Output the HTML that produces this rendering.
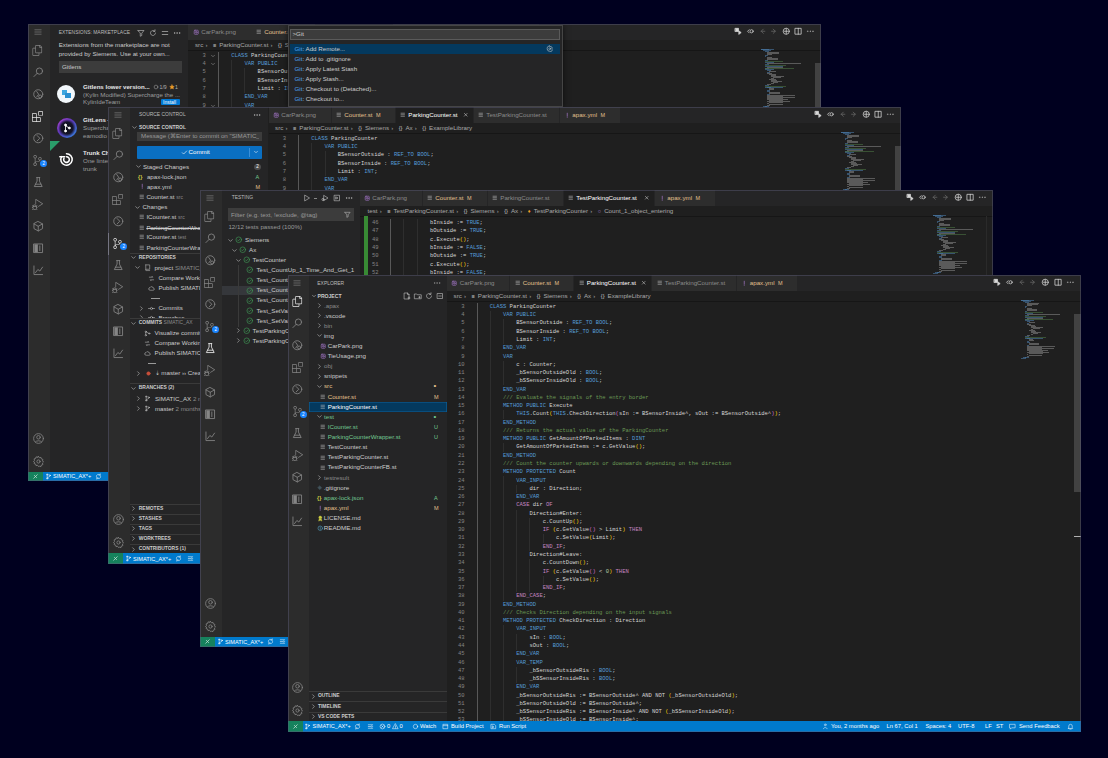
<!DOCTYPE html><html><head><meta charset="utf-8"><style>
*{margin:0;padding:0;box-sizing:border-box}
html,body{width:1108px;height:758px;overflow:hidden}
body{background:#00001f;position:relative;font-family:"Liberation Sans",sans-serif}
.w{position:absolute;width:793px;height:457px;overflow:hidden;background:#1f1f1f}
.bd{position:absolute;left:0;top:0;right:0;bottom:0;border:1px solid rgba(90,90,120,.45)}
.r{position:absolute}
.t{position:absolute;white-space:pre;line-height:8px}
.s{font-family:"Liberation Sans",sans-serif}
.m{font-family:"Liberation Mono",monospace}
.ic{position:absolute;overflow:visible}
</style></head><body><div class="w" style="left:28px;top:24px;z-index:1"><div class="r" style="left:0.00px;top:0.00px;width:21.50px;height:447.50px;background:#2c2c2c;"></div><div class="r" style="left:21.50px;top:0.00px;width:138.00px;height:447.50px;background:#252526;"></div><svg color="#858585" class="ic" style="left:4.75px;top:2.50px;width:10px;height:10px" viewBox="0 0 16 16" fill="none" stroke="#858585" stroke-width="1.0" stroke-linecap="round" stroke-linejoin="round"><path d="M3 4.5h10M3 8h10M3 11.5h10"/></svg><svg class="ic" style="left:4.25px;top:20.50px;width:11px;height:11px" viewBox="0 0 24 24" fill="#858585"><path d="M17.5 0h-9L7 1.5V6H2.5L1 7.5v15.07L2.5 24h12.07L16 22.57V18h4.7l1.3-1.43V4.5L17.5 0zm0 2.12l2.38 2.38H17.5V2.12zm-3 20.38h-12v-15H7v9.07L8.5 18h6v4.5zm6-6h-12v-15H16V6h4.5v10.5z"/></svg><svg color="#858585" class="ic" style="left:3.50px;top:41.75px;width:12.5px;height:12.5px" viewBox="0 0 16 16" fill="none" stroke="#858585" stroke-width="1.1" stroke-linecap="round" stroke-linejoin="round"><circle cx="9.5" cy="6.5" r="4"/><path d="M6.6 9.4L2.5 13.5"/></svg><svg color="#858585" class="ic" style="left:3.50px;top:63.75px;width:12.5px;height:12.5px" viewBox="0 0 16 16" fill="none" stroke="#858585" stroke-width="1.1" stroke-linecap="round" stroke-linejoin="round"><circle cx="8" cy="8" r="5.8"/><path d="M6 4.5l2.5 3.5-2.5 3.5"/><circle cx="10.5" cy="11" r="2"/></svg><svg class="ic" style="left:4.25px;top:86.50px;width:11px;height:11px" viewBox="0 0 24 24" fill="#e8e8e8"><path d="M13.5 1.5L15 0h7.5L24 1.5V9l-1.5 1.5H15L13.5 9V1.5zm1.5 0V9h7.5V1.5H15zM0 15V6l1.5-1.5H9L10.5 6v7.5H18l1.5 1.5v7.5L18 24H1.5L0 22.5V15zm9-1.5V6H1.5v7.5H9zM9 15H1.5v7.5H9V15zm1.5 7.5H18V15h-7.5v7.5z"/></svg><svg color="#858585" class="ic" style="left:3.50px;top:107.75px;width:12.5px;height:12.5px" viewBox="0 0 16 16" fill="none" stroke="#858585" stroke-width="1.1" stroke-linecap="round" stroke-linejoin="round"><circle cx="8" cy="8" r="5.8"/><path d="M6.5 4.5l3.5 3.5-3.5 3.5"/></svg><svg class="ic" style="left:4.25px;top:130.50px;width:11px;height:11px" viewBox="0 0 24 24" fill="#858585"><path d="M21.007 8.222A3.738 3.738 0 0 0 15.045 5.2a3.737 3.737 0 0 0 1.156 6.583 2.988 2.988 0 0 1-2.668 1.67h-2.99a4.456 4.456 0 0 0-2.989 1.165V7.4a3.737 3.737 0 1 0-1.494 0v9.117a3.776 3.776 0 1 0 1.816.099 2.99 2.99 0 0 1 2.668-1.667h2.99a4.484 4.484 0 0 0 4.223-3.039 3.736 3.736 0 0 0 3.25-3.687zM4.565 3.738a2.242 2.242 0 1 1 4.484 0 2.242 2.242 0 0 1-4.484 0zm4.484 16.441a2.242 2.242 0 1 1-4.484 0 2.242 2.242 0 0 1 4.484 0zm8.221-9.715a2.242 2.242 0 1 1 0-4.485 2.242 2.242 0 0 1 0 4.485z"/></svg><svg color="#858585" class="ic" style="left:3.50px;top:151.75px;width:12.5px;height:12.5px" viewBox="0 0 16 16" fill="none" stroke="#858585" stroke-width="1.1" stroke-linecap="round" stroke-linejoin="round"><path d="M6 2h4M6.5 2v4.5L3 13.5h10L9.5 6.5V2"/><path d="M4.5 10.5h7"/></svg><svg class="ic" style="left:4.25px;top:174.50px;width:11px;height:11px" viewBox="0 0 24 24" fill="#858585"><path d="M10.94 13.5l-1.32 1.32a3.73 3.73 0 0 0-7.24 0L1.06 13.5 0 14.56l1.72 1.72-.22.22V18H0v1.5h1.5v.08c.077.489.214.966.41 1.42L0 22.94 1.06 24l1.65-1.65A4.308 4.308 0 0 0 6 24a4.31 4.31 0 0 0 3.29-1.65L10.94 24 12 22.94 10.09 21c.198-.464.336-.951.41-1.45v-.1H12V18h-1.5v-1.5l-.22-.22L12 14.56l-1.06-1.06zM6 13.5a2.250 2.250 0 0 1 2.25 2.25h-4.5A2.250 2.250 0 0 1 6 13.5zm3 6a3.330 3.330 0 0 1-3 3 3.330 3.330 0 0 1-3-3v-2.25h6v2.25zm14.76-9.9v1.26L13.5 17.37V15.6l8.45-5.37L9 2v9.46a5.070 5.070 0 0 0-1.5-.72V.63L8.64 0l15.12 9.6z"/></svg><svg color="#858585" class="ic" style="left:3.50px;top:195.75px;width:12.5px;height:12.5px" viewBox="0 0 16 16" fill="none" stroke="#858585" stroke-width="1.1" stroke-linecap="round" stroke-linejoin="round"><path d="M8 2l5.5 3v6L8 14l-5.5-3V5z"/><path d="M2.5 5L8 8l5.5-3M8 8v6"/></svg><svg color="#858585" class="ic" style="left:3.50px;top:217.75px;width:12.5px;height:12.5px" viewBox="0 0 16 16" fill="none" stroke="#858585" stroke-width="1.1" stroke-linecap="round" stroke-linejoin="round"><path d="M2.5 2.5h11v11h-11z"/><path d="M3 3h4.5v10H3z" fill="currentColor" stroke="none"/><path d="M10 5v6"/></svg><svg color="#858585" class="ic" style="left:3.50px;top:239.75px;width:12.5px;height:12.5px" viewBox="0 0 16 16" fill="none" stroke="#858585" stroke-width="1.1" stroke-linecap="round" stroke-linejoin="round"><path d="M2.5 2.5v11h11"/><path d="M4.5 11l3-4 2.5 2 3.5-5"/></svg><div class="r" style="left:12.15px;top:135.90px;width:7.20px;height:7.20px;background:#1a85ff;border-radius:50%"></div><div class="t s" style="left:14.55px;top:135.60px;color:#ffffff;font-size:4.5px;font-weight:400;">2</div><svg color="#858585" class="ic" style="left:3.75px;top:407.50px;width:13px;height:13px" viewBox="0 0 16 16" fill="none" stroke="#858585" stroke-width="1.0" stroke-linecap="round" stroke-linejoin="round"><circle cx="8" cy="8" r="6"/><circle cx="8" cy="6.5" r="2.2"/><path d="M4.2 12.2c1-2 6.6-2 7.6 0"/></svg><svg color="#858585" class="ic" style="left:3.75px;top:430.50px;width:13px;height:13px" viewBox="0 0 16 16" fill="none" stroke="#858585" stroke-width="1.0" stroke-linecap="round" stroke-linejoin="round"><circle cx="8" cy="8" r="2"/><path d="M8 1.8l1.1 1.6 1.9-.5.5 1.9 1.9.6-.5 1.9 1.3 1.3-1.3 1.3.5 1.9-1.9.6-.5 1.9-1.9-.5L8 14.2l-1.1-1.6-1.9.5-.5-1.9-1.9-.6.5-1.9L1.8 8l1.3-1.3-.5-1.9 1.9-.6.5-1.9 1.9.5z"/></svg><div class="t s" style="left:30.70px;top:4.60px;color:#bbbbbb;font-size:4.95px;font-weight:400;">EXTENSIONS: MARKETPLACE</div><svg color="#c5c5c5" class="ic" style="left:109.10px;top:4.60px;width:8px;height:8px" viewBox="0 0 16 16" fill="none" stroke="#c5c5c5" stroke-width="1.2" stroke-linecap="round" stroke-linejoin="round"><path d="M2 3h12l-4.5 5.5V13l-3 1.5V8.5z"/></svg><svg color="#c5c5c5" class="ic" style="left:120.60px;top:4.60px;width:8px;height:8px" viewBox="0 0 16 16" fill="none" stroke="#c5c5c5" stroke-width="1.2" stroke-linecap="round" stroke-linejoin="round"><path d="M13 8a5 5 0 1 1-1.5-3.6"/><path d="M12 1.5v3.2H8.8"/></svg><svg color="#c5c5c5" class="ic" style="left:132.60px;top:4.60px;width:8px;height:8px" viewBox="0 0 16 16" fill="none" stroke="#c5c5c5" stroke-width="1.3" stroke-linecap="round" stroke-linejoin="round"><path d="M2.5 5h11M2.5 11h11"/></svg><svg color="#c5c5c5" class="ic" style="left:144.90px;top:4.60px;width:8px;height:8px" viewBox="0 0 16 16" fill="none" stroke="#c5c5c5" stroke-width="1.2" stroke-linecap="round" stroke-linejoin="round"><circle cx="3" cy="8" r=".55" fill="currentColor"/><circle cx="8" cy="8" r=".55" fill="currentColor"/><circle cx="13" cy="8" r=".55" fill="currentColor"/></svg><div class="t s" style="left:30.70px;top:16.90px;color:#cccccc;font-size:6.2px;font-weight:400;">Extensions from the marketplace are not</div><div class="t s" style="left:30.70px;top:25.50px;color:#cccccc;font-size:6.2px;font-weight:400;">provided by Siemens. Use at your own...</div><div class="r" style="left:30.70px;top:37.10px;width:123.60px;height:11.80px;background:#3c3c3c;"></div><div class="t s" style="left:34.00px;top:39.00px;color:#cccccc;font-size:6.2px;font-weight:400;">Gitlens</div><div class="r" style="left:29.10px;top:61.40px;width:18.00px;height:18.00px;background:#f2f7fb;border-radius:50%"></div><div class="r" style="left:33.50px;top:66.00px;width:5.50px;height:4.50px;background:#3fa7e0;"></div><div class="r" style="left:37.00px;top:69.00px;width:5.50px;height:4.50px;background:#2a8fd0;"></div><div class="t s" style="left:55.10px;top:59.20px;color:#e6e6e6;font-size:6.1px;font-weight:700;">Gitlens lower version...</div><svg color="#b0b0b0" class="ic" style="left:125.00px;top:60.20px;width:6px;height:6px" viewBox="0 0 16 16" fill="none" stroke="#b0b0b0" stroke-width="1.3" stroke-linecap="round" stroke-linejoin="round"><circle cx="8" cy="8" r="5"/></svg><div class="t s" style="left:131.50px;top:59.20px;color:#b0b0b0;font-size:5.2px;font-weight:400;">1/9</div><svg color="#ee9d28" class="ic" style="left:140.50px;top:60.20px;width:6px;height:6px" viewBox="0 0 16 16" fill="none" stroke="#ee9d28" stroke-width="1" stroke-linecap="round" stroke-linejoin="round"><path d="M8 1.8l1.9 4 4.3.5-3.2 2.9.9 4.3L8 11.3l-3.9 2.2.9-4.3L1.8 6.3l4.3-.5z" fill="currentColor"/></svg><div class="t s" style="left:147.00px;top:59.20px;color:#b0b0b0;font-size:5.2px;font-weight:400;">1</div><div class="t s" style="left:55.10px;top:67.10px;color:#9d9d9d;font-size:6.2px;font-weight:400;">(Kylin Modified) Supercharge the ...</div><div class="t s" style="left:55.10px;top:74.30px;color:#9d9d9d;font-size:6.2px;font-weight:400;">KylinIdeTeam</div><div class="r" style="left:132.60px;top:75.20px;width:19.40px;height:6.30px;background:#0078d4;border-radius:1px"></div><div class="t s" style="left:135.00px;top:74.30px;color:#ffffff;font-size:5px;font-weight:400;">Install</div><div class="r" style="left:28.50px;top:93.60px;width:20.00px;height:20.00px;background:radial-gradient(circle at 50% 50%, #0c0c16 0%, #141428 42%, rgba(20,20,40,0) 62%), linear-gradient(135deg, #b040d0 0%, #5a3ab8 45%, #2f8ae0 100%);border-radius:50%"></div><svg color="#ffffff" class="ic" style="left:32.50px;top:97.60px;width:12px;height:12px" viewBox="0 0 16 16" fill="none" stroke="#ffffff" stroke-width="1.1" stroke-linecap="round" stroke-linejoin="round"><circle cx="6" cy="4" r="1.3" fill="currentColor"/><circle cx="6" cy="12" r="1.3" fill="currentColor"/><circle cx="11" cy="8" r="1.3" fill="currentColor"/><path d="M6 4v8M6 5l5 3"/></svg><div class="t s" style="left:55.10px;top:92.40px;color:#e6e6e6;font-size:6.1px;font-weight:700;">GitLens — Git supercharged</div><div class="t s" style="left:55.10px;top:100.20px;color:#9d9d9d;font-size:6.2px;font-weight:400;">Supercharge Git within VS Code</div><div class="t s" style="left:55.10px;top:107.70px;color:#9d9d9d;font-size:6.2px;font-weight:400;">eamodio</div><div class="r" style="left:21.5px;top:117px;width:0;height:0;border-top:10px solid #2a9d6a;border-right:10px solid transparent"></div><svg class="ic" style="left:29px;top:126px;width:19px;height:19px" viewBox="0 0 20 20" fill="none" stroke="#ffffff" stroke-width="1.6" stroke-linecap="round"><path d="M10 4a6 6 0 1 1-5.2 3"/><path d="M10 7a3 3 0 1 1-2.6 1.5"/><path d="M3 7h5"/></svg><div class="t s" style="left:55.10px;top:125.30px;color:#e6e6e6;font-size:6.1px;font-weight:700;">Trunk Check</div><div class="t s" style="left:55.10px;top:133.00px;color:#9d9d9d;font-size:6.2px;font-weight:400;">One linter to rule them all</div><div class="t s" style="left:55.10px;top:140.50px;color:#9d9d9d;font-size:6.2px;font-weight:400;">trunk</div><div class="r" style="left:160.40px;top:0.00px;width:632.60px;height:447.50px;background:#1f1f1f;"></div><div class="r" style="left:160.40px;top:0.00px;width:632.60px;height:16.00px;background:#252526;"></div><div class="r" style="left:160.40px;top:0.00px;width:62.30px;height:16.00px;background:#2d2d2d;"></div><svg color="#a074c4" class="ic" style="left:164.65px;top:4.75px;width:6.5px;height:6.5px" viewBox="0 0 16 16" fill="none" stroke="#a074c4" stroke-width="1.6" stroke-linecap="round" stroke-linejoin="round"><rect x="3" y="3" width="10" height="10" rx="2"/><circle cx="8" cy="8" r="2.2"/></svg><div class="t s" style="left:173.20px;top:4.00px;color:#8b8b8b;font-size:6.2px;font-weight:400;">CarPark.png</div><div class="r" style="left:223.40px;top:0.00px;width:63.30px;height:16.00px;background:#2d2d2d;"></div><svg color="#c5c5c5" class="ic" style="left:228.15px;top:5.25px;width:5.5px;height:5.5px" viewBox="0 0 16 16" fill="none" stroke="#c5c5c5" stroke-width="1.6" stroke-linecap="round" stroke-linejoin="round"><path d="M3 3.5h10M3 8h10M3 12.5h10"/></svg><div class="t s" style="left:236.20px;top:4.00px;color:#e2c08d;font-size:6.2px;font-weight:400;">Counter.st  <span style="font-size:5.5px">M</span></div><div class="r" style="left:287.40px;top:0.00px;width:77.30px;height:16.00px;background:#1f1f1f;"></div><svg color="#c5c5c5" class="ic" style="left:292.15px;top:5.25px;width:5.5px;height:5.5px" viewBox="0 0 16 16" fill="none" stroke="#c5c5c5" stroke-width="1.6" stroke-linecap="round" stroke-linejoin="round"><path d="M3 3.5h10M3 8h10M3 12.5h10"/></svg><div class="t s" style="left:300.20px;top:4.00px;color:#ffffff;font-size:6.2px;font-weight:400;">ParkingCounter.st</div><svg color="#cccccc" class="ic" style="left:354.65px;top:5.25px;width:5.5px;height:5.5px" viewBox="0 0 16 16" fill="none" stroke="#cccccc" stroke-width="1.6" stroke-linecap="round" stroke-linejoin="round"><path d="M4 4l8 8M12 4l-8 8"/></svg><div class="r" style="left:365.40px;top:0.00px;width:84.30px;height:16.00px;background:#2d2d2d;"></div><svg color="#c5c5c5" class="ic" style="left:370.15px;top:5.25px;width:5.5px;height:5.5px" viewBox="0 0 16 16" fill="none" stroke="#c5c5c5" stroke-width="1.6" stroke-linecap="round" stroke-linejoin="round"><path d="M3 3.5h10M3 8h10M3 12.5h10"/></svg><div class="t s" style="left:378.20px;top:4.00px;color:#8b8b8b;font-size:6.2px;font-weight:400;">TestParkingCounter.st</div><div class="r" style="left:450.40px;top:0.00px;width:60.30px;height:16.00px;background:#2d2d2d;"></div><svg color="#a074c4" class="ic" style="left:454.65px;top:4.75px;width:6.5px;height:6.5px" viewBox="0 0 16 16" fill="none" stroke="#a074c4" stroke-width="1.8" stroke-linecap="round" stroke-linejoin="round"><path d="M8 3v7M8 12.5v.5"/></svg><div class="t s" style="left:463.20px;top:4.00px;color:#e2c08d;font-size:6.2px;font-weight:400;">apax.yml  <span style="font-size:5.5px">M</span></div><svg color="#d8d8d8" class="ic" style="left:705.75px;top:3.35px;width:8.5px;height:8.5px" viewBox="0 0 16 16" fill="none" stroke="#d8d8d8" stroke-width="1.4" stroke-linecap="round" stroke-linejoin="round"><path d="M2.5 2.5h6v6h-6zM9.5 7.5l4 3-4 3z" fill="currentColor"/></svg><svg color="#d8d8d8" class="ic" style="left:717.80px;top:3.35px;width:8.5px;height:8.5px" viewBox="0 0 16 16" fill="none" stroke="#d8d8d8" stroke-width="1.4" stroke-linecap="round" stroke-linejoin="round"><path d="M6 5L3 8l3 3"/><circle cx="10.5" cy="8" r="3"/></svg><svg color="#6a6a6a" class="ic" style="left:729.85px;top:3.35px;width:8.5px;height:8.5px" viewBox="0 0 16 16" fill="none" stroke="#6a6a6a" stroke-width="1.4" stroke-linecap="round" stroke-linejoin="round"><path d="M10 4L6 8l4 4"/><path d="M6 8h7"/></svg><svg color="#6a6a6a" class="ic" style="left:741.90px;top:3.35px;width:8.5px;height:8.5px" viewBox="0 0 16 16" fill="none" stroke="#6a6a6a" stroke-width="1.4" stroke-linecap="round" stroke-linejoin="round"><path d="M6 4l4 4-4 4"/><path d="M3 8h7"/></svg><svg color="#d8d8d8" class="ic" style="left:753.95px;top:3.35px;width:8.5px;height:8.5px" viewBox="0 0 16 16" fill="none" stroke="#d8d8d8" stroke-width="1.4" stroke-linecap="round" stroke-linejoin="round"><circle cx="8" cy="8" r="5.8"/><path d="M8 3v10M4 8h8"/></svg><svg color="#d8d8d8" class="ic" style="left:766.00px;top:3.35px;width:8.5px;height:8.5px" viewBox="0 0 16 16" fill="none" stroke="#d8d8d8" stroke-width="1.4" stroke-linecap="round" stroke-linejoin="round"><path d="M2.5 2.5h11v11h-11zM8 2.5v11"/></svg><svg color="#9a9a9a" class="ic" style="left:778.05px;top:3.35px;width:8.5px;height:8.5px" viewBox="0 0 16 16" fill="none" stroke="#9a9a9a" stroke-width="1.4" stroke-linecap="round" stroke-linejoin="round"><circle cx="3" cy="8" r=".55" fill="currentColor"/><circle cx="8" cy="8" r=".55" fill="currentColor"/><circle cx="13" cy="8" r=".55" fill="currentColor"/></svg><div class="t s" style="left:167.00px;top:17.00px;color:#a9a9a9;font-size:6.2px;font-weight:400;">src<span style="font-size:6px;margin:0 5.5px 0 2.2px">›</span><span style="color:#c5c5c5;font-size:5.6px;margin-right:3px">≡</span>ParkingCounter.st<span style="font-size:6px;margin:0 5.5px 0 2.2px">›</span><span style="color:#c5c5c5;font-size:5.6px;margin-right:3px">{}</span>Siemens<span style="font-size:6px;margin:0 5.5px 0 2.2px">›</span><span style="color:#c5c5c5;font-size:5.6px;margin-right:3px">{}</span>Ax<span style="font-size:6px;margin:0 5.5px 0 2.2px">›</span><span style="color:#c5c5c5;font-size:5.6px;margin-right:3px">{}</span>ExampleLibrary</div><div class="r" style="left:160.40px;top:26.00px;width:632.60px;height:1.30px;background:#161616;"></div><div class="r" style="left:189.90px;top:27.77px;width:0.75px;height:8.30px;background:#585858;"></div><div class="r" style="left:189.90px;top:36.04px;width:0.75px;height:8.30px;background:#585858;"></div><div class="r" style="left:203.15px;top:36.04px;width:0.75px;height:8.30px;background:#2e2e2e;"></div><div class="r" style="left:189.90px;top:44.30px;width:0.75px;height:8.30px;background:#585858;"></div><div class="r" style="left:203.15px;top:44.30px;width:0.75px;height:8.30px;background:#2e2e2e;"></div><div class="r" style="left:216.40px;top:44.30px;width:0.75px;height:8.30px;background:#2e2e2e;"></div><div class="r" style="left:189.90px;top:52.57px;width:0.75px;height:8.30px;background:#585858;"></div><div class="r" style="left:203.15px;top:52.57px;width:0.75px;height:8.30px;background:#2e2e2e;"></div><div class="r" style="left:216.40px;top:52.57px;width:0.75px;height:8.30px;background:#2e2e2e;"></div><div class="r" style="left:189.90px;top:60.85px;width:0.75px;height:8.30px;background:#585858;"></div><div class="r" style="left:203.15px;top:60.85px;width:0.75px;height:8.30px;background:#2e2e2e;"></div><div class="r" style="left:216.40px;top:60.85px;width:0.75px;height:8.30px;background:#2e2e2e;"></div><div class="r" style="left:189.90px;top:69.11px;width:0.75px;height:8.30px;background:#585858;"></div><div class="r" style="left:203.15px;top:69.11px;width:0.75px;height:8.30px;background:#2e2e2e;"></div><div class="r" style="left:189.90px;top:77.38px;width:0.75px;height:8.30px;background:#585858;"></div><div class="r" style="left:203.15px;top:77.38px;width:0.75px;height:8.30px;background:#2e2e2e;"></div><div class="r" style="left:189.90px;top:85.66px;width:0.75px;height:8.30px;background:#585858;"></div><div class="r" style="left:203.15px;top:85.66px;width:0.75px;height:8.30px;background:#2e2e2e;"></div><div class="r" style="left:216.40px;top:85.66px;width:0.75px;height:8.30px;background:#2e2e2e;"></div><div class="t m" style="left:157.90px;top:27.90px;color:#858585;font-size:5.5px;font-weight:400;width:20px;text-align:right">3</div><svg color="#a0a0a0" class="ic" style="left:181.90px;top:28.90px;width:6px;height:6px" viewBox="0 0 16 16" fill="none" stroke="#a0a0a0" stroke-width="1.4" stroke-linecap="round" stroke-linejoin="round"><path d="M4 6l4 4 4-4"/></svg><div class="t m" style="left:189.90px;top:27.90px;color:#d4d4d4;font-size:5.52px;font-weight:400;">    <span style="color:#569cd6">CLASS</span> ParkingCounter</div><div class="t m" style="left:157.90px;top:36.17px;color:#858585;font-size:5.5px;font-weight:400;width:20px;text-align:right">4</div><svg color="#a0a0a0" class="ic" style="left:181.90px;top:37.17px;width:6px;height:6px" viewBox="0 0 16 16" fill="none" stroke="#a0a0a0" stroke-width="1.4" stroke-linecap="round" stroke-linejoin="round"><path d="M4 6l4 4 4-4"/></svg><div class="t m" style="left:189.90px;top:36.17px;color:#d4d4d4;font-size:5.52px;font-weight:400;">        <span style="color:#569cd6">VAR</span> <span style="color:#569cd6">PUBLIC</span></div><div class="t m" style="left:157.90px;top:44.44px;color:#858585;font-size:5.5px;font-weight:400;width:20px;text-align:right">5</div><div class="t m" style="left:189.90px;top:44.44px;color:#d4d4d4;font-size:5.52px;font-weight:400;">            BSensorOutside : <span style="color:#569cd6">REF_TO</span> <span style="color:#569cd6">BOOL</span>;</div><div class="t m" style="left:157.90px;top:52.71px;color:#858585;font-size:5.5px;font-weight:400;width:20px;text-align:right">6</div><div class="t m" style="left:189.90px;top:52.71px;color:#d4d4d4;font-size:5.52px;font-weight:400;">            BSensorInside : <span style="color:#569cd6">REF_TO</span> <span style="color:#569cd6">BOOL</span>;</div><div class="t m" style="left:157.90px;top:60.98px;color:#858585;font-size:5.5px;font-weight:400;width:20px;text-align:right">7</div><div class="t m" style="left:189.90px;top:60.98px;color:#d4d4d4;font-size:5.52px;font-weight:400;">            Limit : <span style="color:#569cd6">INT</span>;</div><div class="t m" style="left:157.90px;top:69.25px;color:#858585;font-size:5.5px;font-weight:400;width:20px;text-align:right">8</div><div class="t m" style="left:189.90px;top:69.25px;color:#d4d4d4;font-size:5.52px;font-weight:400;">        <span style="color:#569cd6">END_VAR</span></div><div class="t m" style="left:157.90px;top:77.52px;color:#858585;font-size:5.5px;font-weight:400;width:20px;text-align:right">9</div><svg color="#a0a0a0" class="ic" style="left:181.90px;top:78.52px;width:6px;height:6px" viewBox="0 0 16 16" fill="none" stroke="#a0a0a0" stroke-width="1.4" stroke-linecap="round" stroke-linejoin="round"><path d="M4 6l4 4 4-4"/></svg><div class="t m" style="left:189.90px;top:77.52px;color:#d4d4d4;font-size:5.52px;font-weight:400;">        <span style="color:#569cd6">VAR</span></div><div class="t m" style="left:157.90px;top:85.79px;color:#858585;font-size:5.5px;font-weight:400;width:20px;text-align:right">10</div><div class="t m" style="left:189.90px;top:85.79px;color:#d4d4d4;font-size:5.52px;font-weight:400;">            c : Counter;</div><div class="r" style="left:733.00px;top:24.50px;width:13.44px;height:0.65px;background:#4d7fb0;opacity:.55"></div><div class="r" style="left:733.00px;top:25.45px;width:8.40px;height:0.65px;background:#4d7fb0;opacity:.55"></div><div class="r" style="left:735.00px;top:26.40px;width:8.40px;height:0.65px;background:#4d7fb0;opacity:.55"></div><div class="r" style="left:737.00px;top:27.35px;width:4.20px;height:0.65px;background:#4d7fb0;opacity:.55"></div><div class="r" style="left:739.00px;top:28.30px;width:12.18px;height:0.65px;background:#8a8a8a;opacity:.55"></div><div class="r" style="left:739.00px;top:29.25px;width:11.76px;height:0.65px;background:#8a8a8a;opacity:.55"></div><div class="r" style="left:739.00px;top:30.20px;width:5.04px;height:0.65px;background:#8a8a8a;opacity:.55"></div><div class="r" style="left:737.00px;top:31.15px;width:2.94px;height:0.65px;background:#4d7fb0;opacity:.55"></div><div class="r" style="left:737.00px;top:32.10px;width:1.26px;height:0.65px;background:#4d7fb0;opacity:.55"></div><div class="r" style="left:739.00px;top:33.05px;width:5.04px;height:0.65px;background:#8a8a8a;opacity:.55"></div><div class="r" style="left:739.00px;top:34.00px;width:10.92px;height:0.65px;background:#8a8a8a;opacity:.55"></div><div class="r" style="left:739.00px;top:34.95px;width:10.92px;height:0.65px;background:#8a8a8a;opacity:.55"></div><div class="r" style="left:737.00px;top:35.90px;width:2.94px;height:0.65px;background:#4d7fb0;opacity:.55"></div><div class="r" style="left:737.00px;top:36.85px;width:18.48px;height:0.65px;background:#4f7a45;opacity:.55"></div><div class="r" style="left:737.00px;top:37.80px;width:8.82px;height:0.65px;background:#4d7fb0;opacity:.55"></div><div class="r" style="left:739.00px;top:38.75px;width:33.60px;height:0.65px;background:#8a8a8a;opacity:.55"></div><div class="r" style="left:737.00px;top:39.70px;width:4.20px;height:0.65px;background:#4d7fb0;opacity:.55"></div><div class="r" style="left:737.00px;top:40.65px;width:21.00px;height:0.65px;background:#4f7a45;opacity:.55"></div><div class="r" style="left:737.00px;top:41.60px;width:18.06px;height:0.65px;background:#4d7fb0;opacity:.55"></div><div class="r" style="left:739.00px;top:42.55px;width:16.38px;height:0.65px;background:#8a8a8a;opacity:.55"></div><div class="r" style="left:737.00px;top:43.50px;width:4.20px;height:0.65px;background:#4d7fb0;opacity:.55"></div><div class="r" style="left:737.00px;top:44.45px;width:28.98px;height:0.65px;background:#4f7a45;opacity:.55"></div><div class="r" style="left:737.00px;top:45.40px;width:9.24px;height:0.65px;background:#4d7fb0;opacity:.55"></div><div class="r" style="left:739.00px;top:46.35px;width:3.78px;height:0.65px;background:#4d7fb0;opacity:.55"></div><div class="r" style="left:741.00px;top:47.30px;width:6.72px;height:0.65px;background:#8a8a8a;opacity:.55"></div><div class="r" style="left:739.00px;top:48.25px;width:2.94px;height:0.65px;background:#4d7fb0;opacity:.55"></div><div class="r" style="left:739.00px;top:49.20px;width:4.62px;height:0.65px;background:#8a8a8a;opacity:.55"></div><div class="r" style="left:741.00px;top:50.15px;width:6.72px;height:0.65px;background:#8a8a8a;opacity:.55"></div><div class="r" style="left:743.00px;top:51.10px;width:5.04px;height:0.65px;background:#8a8a8a;opacity:.55"></div><div class="r" style="left:743.00px;top:52.05px;width:12.60px;height:0.65px;background:#8a8a8a;opacity:.55"></div><div class="r" style="left:745.00px;top:53.00px;width:7.56px;height:0.65px;background:#8a8a8a;opacity:.55"></div><div class="r" style="left:743.00px;top:53.95px;width:2.94px;height:0.65px;background:#8a8a8a;opacity:.55"></div><div class="r" style="left:741.00px;top:54.90px;width:6.72px;height:0.65px;background:#8a8a8a;opacity:.55"></div><div class="r" style="left:743.00px;top:55.85px;width:5.88px;height:0.65px;background:#8a8a8a;opacity:.55"></div><div class="r" style="left:743.00px;top:56.80px;width:10.92px;height:0.65px;background:#8a8a8a;opacity:.55"></div><div class="r" style="left:745.00px;top:57.75px;width:5.46px;height:0.65px;background:#8a8a8a;opacity:.55"></div><div class="r" style="left:743.00px;top:58.70px;width:2.94px;height:0.65px;background:#8a8a8a;opacity:.55"></div><div class="r" style="left:739.00px;top:59.65px;width:3.78px;height:0.65px;background:#8a8a8a;opacity:.55"></div><div class="r" style="left:737.00px;top:60.60px;width:4.20px;height:0.65px;background:#4d7fb0;opacity:.55"></div><div class="r" style="left:737.00px;top:61.55px;width:21.42px;height:0.65px;background:#4f7a45;opacity:.55"></div><div class="r" style="left:737.00px;top:62.50px;width:18.06px;height:0.65px;background:#4d7fb0;opacity:.55"></div><div class="r" style="left:739.00px;top:63.45px;width:3.78px;height:0.65px;background:#4d7fb0;opacity:.55"></div><div class="r" style="left:741.00px;top:64.40px;width:4.62px;height:0.65px;background:#8a8a8a;opacity:.55"></div><div class="r" style="left:741.00px;top:65.35px;width:5.04px;height:0.65px;background:#8a8a8a;opacity:.55"></div><div class="r" style="left:739.00px;top:66.30px;width:2.94px;height:0.65px;background:#4d7fb0;opacity:.55"></div><div class="r" style="left:739.00px;top:67.25px;width:3.36px;height:0.65px;background:#4d7fb0;opacity:.55"></div><div class="r" style="left:741.00px;top:68.20px;width:10.92px;height:0.65px;background:#8a8a8a;opacity:.55"></div><div class="r" style="left:741.00px;top:69.15px;width:10.92px;height:0.65px;background:#8a8a8a;opacity:.55"></div><div class="r" style="left:739.00px;top:70.10px;width:2.94px;height:0.65px;background:#4d7fb0;opacity:.55"></div><div class="r" style="left:739.00px;top:71.05px;width:28.14px;height:0.65px;background:#8a8a8a;opacity:.55"></div><div class="r" style="left:739.00px;top:72.00px;width:15.96px;height:0.65px;background:#8a8a8a;opacity:.55"></div><div class="r" style="left:739.00px;top:72.95px;width:27.72px;height:0.65px;background:#8a8a8a;opacity:.55"></div><div class="r" style="left:739.00px;top:73.90px;width:15.54px;height:0.65px;background:#8a8a8a;opacity:.55"></div><div class="r" style="left:739.00px;top:74.85px;width:21.42px;height:0.65px;background:#8a8a8a;opacity:.55"></div><div class="r" style="left:741.00px;top:75.80px;width:14.28px;height:0.65px;background:#8a8a8a;opacity:.55"></div><div class="r" style="left:739.00px;top:76.75px;width:22.68px;height:0.65px;background:#8a8a8a;opacity:.55"></div><div class="r" style="left:741.00px;top:77.70px;width:14.28px;height:0.65px;background:#8a8a8a;opacity:.55"></div><div class="r" style="left:739.00px;top:78.65px;width:1.68px;height:0.65px;background:#8a8a8a;opacity:.55"></div><div class="r" style="left:741.00px;top:79.60px;width:13.86px;height:0.65px;background:#8a8a8a;opacity:.55"></div><div class="r" style="left:739.00px;top:80.55px;width:2.94px;height:0.65px;background:#8a8a8a;opacity:.55"></div><div class="r" style="left:737.00px;top:81.50px;width:4.20px;height:0.65px;background:#4d7fb0;opacity:.55"></div><div class="r" style="left:735.00px;top:82.45px;width:3.78px;height:0.65px;background:#4d7fb0;opacity:.55"></div><div class="r" style="left:733.00px;top:83.40px;width:5.46px;height:0.65px;background:#4d7fb0;opacity:.55"></div><div class="r" style="left:786.50px;top:38.50px;width:6.50px;height:178.00px;background:#424242;"></div><div class="r" style="left:786.50px;top:261.00px;width:6.50px;height:0.90px;background:#b0b0b0;"></div><div class="r" style="left:259.60px;top:1.00px;width:275.40px;height:81.60px;background:#252526;box-shadow:0 0 6px rgba(0,0,0,.6);border:0.6px solid #454545"></div><div class="r" style="left:261.50px;top:4.70px;width:270.50px;height:11.10px;background:#3c3c3c;border:0.7px solid #5a5a5a"></div><div class="t s" style="left:264.50px;top:6.30px;color:#cccccc;font-size:6.2px;font-weight:400;">&gt;Git</div><div class="r" style="left:261.50px;top:19.80px;width:270.50px;height:10.00px;background:#04395e;"></div><div class="t s" style="left:266.50px;top:20.80px;color:#cccccc;font-size:6.2px;font-weight:400;"><span style="color:#4da3f0">Git</span>: Add Remote...</div><div class="t s" style="left:266.50px;top:30.92px;color:#cccccc;font-size:6.2px;font-weight:400;"><span style="color:#4da3f0">Git</span>: Add to .gitignore</div><div class="t s" style="left:266.50px;top:41.04px;color:#cccccc;font-size:6.2px;font-weight:400;"><span style="color:#4da3f0">Git</span>: Apply Latest Stash</div><div class="t s" style="left:266.50px;top:51.16px;color:#cccccc;font-size:6.2px;font-weight:400;"><span style="color:#4da3f0">Git</span>: Apply Stash...</div><div class="t s" style="left:266.50px;top:61.28px;color:#cccccc;font-size:6.2px;font-weight:400;"><span style="color:#4da3f0">Git</span>: Checkout to (Detached)...</div><div class="t s" style="left:266.50px;top:71.40px;color:#cccccc;font-size:6.2px;font-weight:400;"><span style="color:#4da3f0">Git</span>: Checkout to...</div><svg color="#cccccc" class="ic" style="left:517.75px;top:21.05px;width:7.5px;height:7.5px" viewBox="0 0 16 16" fill="none" stroke="#cccccc" stroke-width="1.1" stroke-linecap="round" stroke-linejoin="round"><circle cx="8" cy="8" r="2"/><path d="M8 1.8l1.1 1.6 1.9-.5.5 1.9 1.9.6-.5 1.9 1.3 1.3-1.3 1.3.5 1.9-1.9.6-.5 1.9-1.9-.5L8 14.2l-1.1-1.6-1.9.5-.5-1.9-1.9-.6.5-1.9L1.8 8l1.3-1.3-.5-1.9 1.9-.6.5-1.9 1.9.5z"/></svg><div class="r" style="left:0.00px;top:447.50px;width:793.00px;height:9.50px;background:#007acc;"></div><div class="r" style="left:0.00px;top:447.50px;width:15.00px;height:9.50px;background:#16825d;"></div><svg color="#ffffff" class="ic" style="left:4.00px;top:448.75px;width:7px;height:7px" viewBox="0 0 16 16" fill="none" stroke="#ffffff" stroke-width="1.3" stroke-linecap="round" stroke-linejoin="round"><path d="M4 12l3-3M9 7l3-3M5.5 5.5l5 5"/></svg><svg color="#ffffff" class="ic" style="left:16.50px;top:448.75px;width:7px;height:7px" viewBox="0 0 16 16" fill="none" stroke="#ffffff" stroke-width="1.2" stroke-linecap="round" stroke-linejoin="round"><circle cx="5" cy="3.5" r="1.5"/><circle cx="5" cy="12.5" r="1.5"/><circle cx="11" cy="5.5" r="1.5"/><path d="M5 5v6M11 7c0 3-6 2-6 4"/></svg><div class="t s" style="left:25.00px;top:448.25px;color:#ffffff;font-size:5.6px;font-weight:400;">SIMATIC_AX*+</div><svg color="#ffffff" class="ic" style="left:66.50px;top:448.75px;width:7px;height:7px" viewBox="0 0 16 16" fill="none" stroke="#ffffff" stroke-width="1.2" stroke-linecap="round" stroke-linejoin="round"><path d="M3 8a5 5 0 0 1 9-3M13 8a5 5 0 0 1-9 3"/><path d="M12 2v3H9M4 14v-3h3"/></svg><div class="bd"></div></div><div class="w" style="left:108px;top:107px;z-index:2"><div class="r" style="left:0.00px;top:0.00px;width:21.50px;height:446.00px;background:#2c2c2c;"></div><div class="r" style="left:21.50px;top:0.00px;width:138.00px;height:446.00px;background:#252526;"></div><svg color="#858585" class="ic" style="left:4.75px;top:2.50px;width:10px;height:10px" viewBox="0 0 16 16" fill="none" stroke="#858585" stroke-width="1.0" stroke-linecap="round" stroke-linejoin="round"><path d="M3 4.5h10M3 8h10M3 11.5h10"/></svg><svg class="ic" style="left:4.25px;top:20.50px;width:11px;height:11px" viewBox="0 0 24 24" fill="#858585"><path d="M17.5 0h-9L7 1.5V6H2.5L1 7.5v15.07L2.5 24h12.07L16 22.57V18h4.7l1.3-1.43V4.5L17.5 0zm0 2.12l2.38 2.38H17.5V2.12zm-3 20.38h-12v-15H7v9.07L8.5 18h6v4.5zm6-6h-12v-15H16V6h4.5v10.5z"/></svg><svg color="#858585" class="ic" style="left:3.50px;top:41.75px;width:12.5px;height:12.5px" viewBox="0 0 16 16" fill="none" stroke="#858585" stroke-width="1.1" stroke-linecap="round" stroke-linejoin="round"><circle cx="9.5" cy="6.5" r="4"/><path d="M6.6 9.4L2.5 13.5"/></svg><svg color="#858585" class="ic" style="left:3.50px;top:63.75px;width:12.5px;height:12.5px" viewBox="0 0 16 16" fill="none" stroke="#858585" stroke-width="1.1" stroke-linecap="round" stroke-linejoin="round"><circle cx="8" cy="8" r="5.8"/><path d="M6 4.5l2.5 3.5-2.5 3.5"/><circle cx="10.5" cy="11" r="2"/></svg><svg class="ic" style="left:4.25px;top:86.50px;width:11px;height:11px" viewBox="0 0 24 24" fill="#858585"><path d="M13.5 1.5L15 0h7.5L24 1.5V9l-1.5 1.5H15L13.5 9V1.5zm1.5 0V9h7.5V1.5H15zM0 15V6l1.5-1.5H9L10.5 6v7.5H18l1.5 1.5v7.5L18 24H1.5L0 22.5V15zm9-1.5V6H1.5v7.5H9zM9 15H1.5v7.5H9V15zm1.5 7.5H18V15h-7.5v7.5z"/></svg><svg color="#858585" class="ic" style="left:3.50px;top:107.75px;width:12.5px;height:12.5px" viewBox="0 0 16 16" fill="none" stroke="#858585" stroke-width="1.1" stroke-linecap="round" stroke-linejoin="round"><circle cx="8" cy="8" r="5.8"/><path d="M6.5 4.5l3.5 3.5-3.5 3.5"/></svg><svg class="ic" style="left:4.25px;top:130.50px;width:11px;height:11px" viewBox="0 0 24 24" fill="#e8e8e8"><path d="M21.007 8.222A3.738 3.738 0 0 0 15.045 5.2a3.737 3.737 0 0 0 1.156 6.583 2.988 2.988 0 0 1-2.668 1.67h-2.99a4.456 4.456 0 0 0-2.989 1.165V7.4a3.737 3.737 0 1 0-1.494 0v9.117a3.776 3.776 0 1 0 1.816.099 2.99 2.99 0 0 1 2.668-1.667h2.99a4.484 4.484 0 0 0 4.223-3.039 3.736 3.736 0 0 0 3.25-3.687zM4.565 3.738a2.242 2.242 0 1 1 4.484 0 2.242 2.242 0 0 1-4.484 0zm4.484 16.441a2.242 2.242 0 1 1-4.484 0 2.242 2.242 0 0 1 4.484 0zm8.221-9.715a2.242 2.242 0 1 1 0-4.485 2.242 2.242 0 0 1 0 4.485z"/></svg><svg color="#858585" class="ic" style="left:3.50px;top:151.75px;width:12.5px;height:12.5px" viewBox="0 0 16 16" fill="none" stroke="#858585" stroke-width="1.1" stroke-linecap="round" stroke-linejoin="round"><path d="M6 2h4M6.5 2v4.5L3 13.5h10L9.5 6.5V2"/><path d="M4.5 10.5h7"/></svg><svg class="ic" style="left:4.25px;top:174.50px;width:11px;height:11px" viewBox="0 0 24 24" fill="#858585"><path d="M10.94 13.5l-1.32 1.32a3.73 3.73 0 0 0-7.24 0L1.06 13.5 0 14.56l1.72 1.72-.22.22V18H0v1.5h1.5v.08c.077.489.214.966.41 1.42L0 22.94 1.06 24l1.65-1.65A4.308 4.308 0 0 0 6 24a4.31 4.31 0 0 0 3.29-1.65L10.94 24 12 22.94 10.09 21c.198-.464.336-.951.41-1.45v-.1H12V18h-1.5v-1.5l-.22-.22L12 14.56l-1.06-1.06zM6 13.5a2.250 2.250 0 0 1 2.25 2.25h-4.5A2.250 2.250 0 0 1 6 13.5zm3 6a3.330 3.330 0 0 1-3 3 3.330 3.330 0 0 1-3-3v-2.25h6v2.25zm14.76-9.9v1.26L13.5 17.37V15.6l8.45-5.37L9 2v9.46a5.070 5.070 0 0 0-1.5-.72V.63L8.64 0l15.12 9.6z"/></svg><svg color="#858585" class="ic" style="left:3.50px;top:195.75px;width:12.5px;height:12.5px" viewBox="0 0 16 16" fill="none" stroke="#858585" stroke-width="1.1" stroke-linecap="round" stroke-linejoin="round"><path d="M8 2l5.5 3v6L8 14l-5.5-3V5z"/><path d="M2.5 5L8 8l5.5-3M8 8v6"/></svg><svg color="#858585" class="ic" style="left:3.50px;top:217.75px;width:12.5px;height:12.5px" viewBox="0 0 16 16" fill="none" stroke="#858585" stroke-width="1.1" stroke-linecap="round" stroke-linejoin="round"><path d="M2.5 2.5h11v11h-11z"/><path d="M3 3h4.5v10H3z" fill="currentColor" stroke="none"/><path d="M10 5v6"/></svg><svg color="#858585" class="ic" style="left:3.50px;top:239.75px;width:12.5px;height:12.5px" viewBox="0 0 16 16" fill="none" stroke="#858585" stroke-width="1.1" stroke-linecap="round" stroke-linejoin="round"><path d="M2.5 2.5v11h11"/><path d="M4.5 11l3-4 2.5 2 3.5-5"/></svg><div class="r" style="left:12.15px;top:135.90px;width:7.20px;height:7.20px;background:#1a85ff;border-radius:50%"></div><div class="t s" style="left:14.55px;top:135.60px;color:#ffffff;font-size:4.5px;font-weight:400;">2</div><svg color="#858585" class="ic" style="left:3.75px;top:406.00px;width:13px;height:13px" viewBox="0 0 16 16" fill="none" stroke="#858585" stroke-width="1.0" stroke-linecap="round" stroke-linejoin="round"><circle cx="8" cy="8" r="6"/><circle cx="8" cy="6.5" r="2.2"/><path d="M4.2 12.2c1-2 6.6-2 7.6 0"/></svg><svg color="#858585" class="ic" style="left:3.75px;top:429.00px;width:13px;height:13px" viewBox="0 0 16 16" fill="none" stroke="#858585" stroke-width="1.0" stroke-linecap="round" stroke-linejoin="round"><circle cx="8" cy="8" r="2"/><path d="M8 1.8l1.1 1.6 1.9-.5.5 1.9 1.9.6-.5 1.9 1.3 1.3-1.3 1.3.5 1.9-1.9.6-.5 1.9-1.9-.5L8 14.2l-1.1-1.6-1.9.5-.5-1.9-1.9-.6.5-1.9L1.8 8l1.3-1.3-.5-1.9 1.9-.6.5-1.9 1.9.5z"/></svg><div class="r" style="left:0.00px;top:125.90px;width:1.00px;height:22.00px;background:#8a8a8a;"></div><div class="t s" style="left:31.00px;top:4.30px;color:#bbbbbb;font-size:4.95px;font-weight:400;">SOURCE CONTROL</div><svg color="#c5c5c5" class="ic" style="left:145.00px;top:3.80px;width:8px;height:8px" viewBox="0 0 16 16" fill="none" stroke="#c5c5c5" stroke-width="1.2" stroke-linecap="round" stroke-linejoin="round"><circle cx="3" cy="8" r=".55" fill="currentColor"/><circle cx="8" cy="8" r=".55" fill="currentColor"/><circle cx="13" cy="8" r=".55" fill="currentColor"/></svg><svg color="#c5c5c5" class="ic" style="left:22.50px;top:17.40px;width:7px;height:7px" viewBox="0 0 16 16" fill="none" stroke="#c5c5c5" stroke-width="1.3" stroke-linecap="round" stroke-linejoin="round"><path d="M4 6l4 4 4-4"/></svg><div class="t s" style="left:31.00px;top:16.90px;color:#cccccc;font-size:4.95px;font-weight:700;">SOURCE CONTROL</div><div class="r" style="left:29.40px;top:24.90px;width:124.80px;height:9.50px;background:#3c3c3c;"></div><div class="t s" style="left:33.00px;top:25.20px;color:#9a9a9a;font-size:6.2px;font-weight:400;width:118px;overflow:hidden">Message (⌘Enter to commit on &quot;SIMATIC_AX&quot;)</div><div class="r" style="left:29.40px;top:38.80px;width:124.80px;height:12.90px;background:#0a6fc2;border-radius:1px"></div><div class="r" style="left:141.30px;top:40.50px;width:0.60px;height:9.50px;background:#3a8fd9;"></div><svg color="#ffffff" class="ic" style="left:72.50px;top:41.70px;width:7px;height:7px" viewBox="0 0 16 16" fill="none" stroke="#ffffff" stroke-width="1.4" stroke-linecap="round" stroke-linejoin="round"><path d="M3 8.5l3 3 7-7"/></svg><div class="t s" style="left:80.50px;top:41.20px;color:#ffffff;font-size:6.2px;font-weight:400;">Commit</div><svg color="#ffffff" class="ic" style="left:145.00px;top:42.20px;width:6px;height:6px" viewBox="0 0 16 16" fill="none" stroke="#ffffff" stroke-width="1.4" stroke-linecap="round" stroke-linejoin="round"><path d="M4 6l4 4 4-4"/></svg><svg color="#c5c5c5" class="ic" style="left:26.50px;top:56.10px;width:7px;height:7px" viewBox="0 0 16 16" fill="none" stroke="#c5c5c5" stroke-width="1.3" stroke-linecap="round" stroke-linejoin="round"><path d="M4 6l4 4 4-4"/></svg><div class="t s" style="left:34.90px;top:55.60px;color:#cccccc;font-size:6.2px;font-weight:400;">Staged Changes</div><div class="r" style="left:146.00px;top:56.60px;width:7.00px;height:6.20px;background:#4d4d4d;border-radius:3px"></div><div class="t s" style="left:148.30px;top:55.60px;color:#ffffff;font-size:4.5px;font-weight:400;">2</div><div class="t s" style="left:38.90px;top:65.60px;color:#cccccc;font-size:6.2px;font-weight:400;">apax-lock.json</div><div class="t s" style="left:147.50px;top:65.60px;color:#73c991;font-size:5.5px;font-weight:400;">A</div><div class="t s" style="left:30.00px;top:65.60px;color:#cbcb41;font-size:5.5px;font-weight:700;">{}</div><svg color="#a074c4" class="ic" style="left:30.75px;top:76.35px;width:6.5px;height:6.5px" viewBox="0 0 16 16" fill="none" stroke="#a074c4" stroke-width="1.8" stroke-linecap="round" stroke-linejoin="round"><path d="M8 3v7M8 12.5v.5"/></svg><div class="t s" style="left:38.90px;top:75.60px;color:#cccccc;font-size:6.2px;font-weight:400;">apax.yml</div><div class="t s" style="left:147.50px;top:75.60px;color:#e2c08d;font-size:5.5px;font-weight:400;">M</div><svg color="#c5c5c5" class="ic" style="left:31.25px;top:86.95px;width:5.5px;height:5.5px" viewBox="0 0 16 16" fill="none" stroke="#c5c5c5" stroke-width="1.6" stroke-linecap="round" stroke-linejoin="round"><path d="M3 3.5h10M3 8h10M3 12.5h10"/></svg><div class="t s" style="left:38.40px;top:85.70px;color:#cccccc;font-size:6.2px;font-weight:400;">Counter.st <span style="color:#8b8b8b;font-size:5px">src</span></div><svg color="#c5c5c5" class="ic" style="left:26.10px;top:96.50px;width:7px;height:7px" viewBox="0 0 16 16" fill="none" stroke="#c5c5c5" stroke-width="1.3" stroke-linecap="round" stroke-linejoin="round"><path d="M4 6l4 4 4-4"/></svg><div class="t s" style="left:34.60px;top:96.00px;color:#cccccc;font-size:6.2px;font-weight:400;">Changes</div><svg color="#c5c5c5" class="ic" style="left:31.25px;top:107.25px;width:5.5px;height:5.5px" viewBox="0 0 16 16" fill="none" stroke="#c5c5c5" stroke-width="1.6" stroke-linecap="round" stroke-linejoin="round"><path d="M3 3.5h10M3 8h10M3 12.5h10"/></svg><div class="t s" style="left:38.40px;top:106.00px;color:#cccccc;font-size:6.2px;font-weight:400;">ICounter.st <span style="color:#8b8b8b;font-size:5px">src</span></div><svg color="#c5c5c5" class="ic" style="left:31.25px;top:117.75px;width:5.5px;height:5.5px" viewBox="0 0 16 16" fill="none" stroke="#c5c5c5" stroke-width="1.6" stroke-linecap="round" stroke-linejoin="round"><path d="M3 3.5h10M3 8h10M3 12.5h10"/></svg><div class="t s" style="left:38.40px;top:116.50px;color:#cccccc;font-size:6.2px;font-weight:400;text-decoration:line-through">ParkingCounterWrapper.st</div><svg color="#c5c5c5" class="ic" style="left:31.25px;top:127.25px;width:5.5px;height:5.5px" viewBox="0 0 16 16" fill="none" stroke="#c5c5c5" stroke-width="1.6" stroke-linecap="round" stroke-linejoin="round"><path d="M3 3.5h10M3 8h10M3 12.5h10"/></svg><div class="t s" style="left:38.40px;top:126.00px;color:#cccccc;font-size:6.2px;font-weight:400;">ICounter.st <span style="color:#8b8b8b;font-size:5px">test</span></div><svg color="#c5c5c5" class="ic" style="left:31.25px;top:137.75px;width:5.5px;height:5.5px" viewBox="0 0 16 16" fill="none" stroke="#c5c5c5" stroke-width="1.6" stroke-linecap="round" stroke-linejoin="round"><path d="M3 3.5h10M3 8h10M3 12.5h10"/></svg><div class="t s" style="left:38.40px;top:136.50px;color:#cccccc;font-size:6.2px;font-weight:400;">ParkingCounterWrapper.st</div><div class="r" style="left:21.50px;top:145.50px;width:138.00px;height:0.70px;background:#3a3a3a;"></div><svg color="#c5c5c5" class="ic" style="left:22.30px;top:147.00px;width:7px;height:7px" viewBox="0 0 16 16" fill="none" stroke="#c5c5c5" stroke-width="1.3" stroke-linecap="round" stroke-linejoin="round"><path d="M4 6l4 4 4-4"/></svg><div class="t s" style="left:30.80px;top:146.50px;color:#cccccc;font-size:4.95px;font-weight:700;">REPOSITORIES</div><svg color="#c5c5c5" class="ic" style="left:26.10px;top:157.20px;width:7px;height:7px" viewBox="0 0 16 16" fill="none" stroke="#c5c5c5" stroke-width="1.3" stroke-linecap="round" stroke-linejoin="round"><path d="M4 6l4 4 4-4"/></svg><svg color="#c5c5c5" class="ic" style="left:36.10px;top:157.20px;width:7px;height:7px" viewBox="0 0 16 16" fill="none" stroke="#c5c5c5" stroke-width="1.2" stroke-linecap="round" stroke-linejoin="round"><path d="M4 2h9v10H5.5a1.5 1.5 0 0 0 0 3H13"/><path d="M4 2v11.5"/></svg><div class="t s" style="left:46.60px;top:156.70px;color:#cccccc;font-size:6.2px;font-weight:400;">project <span style="color:#8b8b8b">SIMATIC_AX</span></div><svg color="#c5c5c5" class="ic" style="left:39.90px;top:167.50px;width:7px;height:7px" viewBox="0 0 16 16" fill="none" stroke="#c5c5c5" stroke-width="1.2" stroke-linecap="round" stroke-linejoin="round"><path d="M3 5h8l-2-2M13 11H5l2 2"/></svg><div class="t s" style="left:50.40px;top:167.00px;color:#cccccc;font-size:6.2px;font-weight:400;">Compare Working Tree</div><svg color="#c5c5c5" class="ic" style="left:39.90px;top:177.50px;width:7px;height:7px" viewBox="0 0 16 16" fill="none" stroke="#c5c5c5" stroke-width="1.2" stroke-linecap="round" stroke-linejoin="round"><path d="M4.5 12a3 3 0 0 1 0-6 4 4 0 0 1 7.5 1 2.5 2.5 0 0 1 0 5z"/></svg><div class="t s" style="left:50.40px;top:177.00px;color:#cccccc;font-size:6.2px;font-weight:400;">Publish SIMATIC_AX</div><div class="r" style="left:43.40px;top:190.80px;width:8.50px;height:0.70px;background:#9a9a9a;"></div><svg color="#c5c5c5" class="ic" style="left:29.80px;top:197.50px;width:7px;height:7px" viewBox="0 0 16 16" fill="none" stroke="#c5c5c5" stroke-width="1.3" stroke-linecap="round" stroke-linejoin="round"><path d="M6 4l4 4-4 4"/></svg><svg color="#c5c5c5" class="ic" style="left:39.90px;top:197.50px;width:7px;height:7px" viewBox="0 0 16 16" fill="none" stroke="#c5c5c5" stroke-width="1.2" stroke-linecap="round" stroke-linejoin="round"><circle cx="8" cy="8" r="2.5"/><path d="M1 8h4.5M10.5 8H15"/></svg><div class="t s" style="left:50.40px;top:197.00px;color:#cccccc;font-size:6.2px;font-weight:400;">Commits</div><svg color="#c5c5c5" class="ic" style="left:29.80px;top:207.00px;width:7px;height:7px" viewBox="0 0 16 16" fill="none" stroke="#c5c5c5" stroke-width="1.3" stroke-linecap="round" stroke-linejoin="round"><path d="M6 4l4 4-4 4"/></svg><svg color="#c5c5c5" class="ic" style="left:39.90px;top:207.00px;width:7px;height:7px" viewBox="0 0 16 16" fill="none" stroke="#c5c5c5" stroke-width="1.2" stroke-linecap="round" stroke-linejoin="round"><circle cx="8" cy="8" r="2.5"/><path d="M1 8h4.5M10.5 8H15"/></svg><div class="t s" style="left:50.40px;top:206.50px;color:#cccccc;font-size:6.2px;font-weight:400;">Branches</div><div class="r" style="left:21.50px;top:211.30px;width:138.00px;height:10.00px;background:#252526;"></div><div class="r" style="left:21.50px;top:211.30px;width:138.00px;height:0.70px;background:#3a3a3a;"></div><svg color="#c5c5c5" class="ic" style="left:22.30px;top:212.50px;width:7px;height:7px" viewBox="0 0 16 16" fill="none" stroke="#c5c5c5" stroke-width="1.3" stroke-linecap="round" stroke-linejoin="round"><path d="M4 6l4 4 4-4"/></svg><div class="t s" style="left:30.80px;top:212.00px;color:#cccccc;font-size:4.95px;font-weight:700;">COMMITS <span style="color:#8b8b8b;font-weight:400">SIMATIC_AX</span></div><svg color="#c5c5c5" class="ic" style="left:36.10px;top:222.50px;width:7px;height:7px" viewBox="0 0 16 16" fill="none" stroke="#c5c5c5" stroke-width="1.2" stroke-linecap="round" stroke-linejoin="round"><circle cx="4" cy="4" r="1.5"/><circle cx="4" cy="12" r="1.5"/><circle cx="12" cy="8" r="1.5"/><path d="M4 5.5v5M5.5 4.5l5 3"/></svg><div class="t s" style="left:46.60px;top:222.00px;color:#cccccc;font-size:6.2px;font-weight:400;">Visualize commits</div><svg color="#c5c5c5" class="ic" style="left:36.10px;top:232.50px;width:7px;height:7px" viewBox="0 0 16 16" fill="none" stroke="#c5c5c5" stroke-width="1.2" stroke-linecap="round" stroke-linejoin="round"><path d="M3 5h8l-2-2M13 11H5l2 2"/></svg><div class="t s" style="left:46.60px;top:232.00px;color:#cccccc;font-size:6.2px;font-weight:400;">Compare Working Tree</div><svg color="#c5c5c5" class="ic" style="left:36.10px;top:242.50px;width:7px;height:7px" viewBox="0 0 16 16" fill="none" stroke="#c5c5c5" stroke-width="1.2" stroke-linecap="round" stroke-linejoin="round"><path d="M4.5 12a3 3 0 0 1 0-6 4 4 0 0 1 7.5 1 2.5 2.5 0 0 1 0 5z"/></svg><div class="t s" style="left:46.60px;top:242.00px;color:#cccccc;font-size:6.2px;font-weight:400;">Publish SIMATIC_AX</div><div class="r" style="left:39.60px;top:255.80px;width:8.50px;height:0.70px;background:#9a9a9a;"></div><svg color="#c5c5c5" class="ic" style="left:26.50px;top:262.50px;width:7px;height:7px" viewBox="0 0 16 16" fill="none" stroke="#c5c5c5" stroke-width="1.3" stroke-linecap="round" stroke-linejoin="round"><path d="M6 4l4 4-4 4"/></svg><svg color="#c74e39" class="ic" style="left:36.50px;top:262.50px;width:7px;height:7px" viewBox="0 0 16 16" fill="none" stroke="#c74e39" stroke-width="1.2" stroke-linecap="round" stroke-linejoin="round"><circle cx="8" cy="8" r="4" fill="currentColor"/></svg><div class="t s" style="left:46.60px;top:262.00px;color:#cccccc;font-size:6.2px;font-weight:400;">⇣ master ›› Create</div><div class="r" style="left:21.50px;top:275.50px;width:138.00px;height:0.70px;background:#3a3a3a;"></div><svg color="#c5c5c5" class="ic" style="left:22.30px;top:277.50px;width:7px;height:7px" viewBox="0 0 16 16" fill="none" stroke="#c5c5c5" stroke-width="1.3" stroke-linecap="round" stroke-linejoin="round"><path d="M4 6l4 4 4-4"/></svg><div class="t s" style="left:30.80px;top:277.00px;color:#cccccc;font-size:4.95px;font-weight:700;">BRANCHES (2)</div><svg color="#c5c5c5" class="ic" style="left:27.30px;top:288.00px;width:7px;height:7px" viewBox="0 0 16 16" fill="none" stroke="#c5c5c5" stroke-width="1.3" stroke-linecap="round" stroke-linejoin="round"><path d="M6 4l4 4-4 4"/></svg><svg color="#c5c5c5" class="ic" style="left:35.60px;top:288.00px;width:7px;height:7px" viewBox="0 0 16 16" fill="none" stroke="#c5c5c5" stroke-width="1.2" stroke-linecap="round" stroke-linejoin="round"><circle cx="5" cy="3.5" r="1.5"/><circle cx="5" cy="12.5" r="1.5"/><circle cx="11" cy="5.5" r="1.5"/><path d="M5 5v6M11 7c0 3-6 2-6 4"/></svg><div class="t s" style="left:46.90px;top:287.50px;color:#cccccc;font-size:6.2px;font-weight:400;">SIMATIC_AX <span style="color:#8b8b8b">2 months</span></div><svg color="#c5c5c5" class="ic" style="left:27.30px;top:298.20px;width:7px;height:7px" viewBox="0 0 16 16" fill="none" stroke="#c5c5c5" stroke-width="1.3" stroke-linecap="round" stroke-linejoin="round"><path d="M6 4l4 4-4 4"/></svg><svg color="#c5c5c5" class="ic" style="left:35.60px;top:298.20px;width:7px;height:7px" viewBox="0 0 16 16" fill="none" stroke="#c5c5c5" stroke-width="1.2" stroke-linecap="round" stroke-linejoin="round"><circle cx="5" cy="3.5" r="1.5"/><circle cx="5" cy="12.5" r="1.5"/><circle cx="11" cy="5.5" r="1.5"/><path d="M5 5v6M11 7c0 3-6 2-6 4"/></svg><div class="t s" style="left:46.90px;top:297.70px;color:#cccccc;font-size:6.2px;font-weight:400;">master <span style="color:#8b8b8b">2 months</span></div><div class="r" style="left:21.50px;top:396.50px;width:138.00px;height:0.70px;background:#3a3a3a;"></div><svg color="#c5c5c5" class="ic" style="left:22.30px;top:398.10px;width:7px;height:7px" viewBox="0 0 16 16" fill="none" stroke="#c5c5c5" stroke-width="1.3" stroke-linecap="round" stroke-linejoin="round"><path d="M6 4l4 4-4 4"/></svg><div class="t s" style="left:30.80px;top:397.60px;color:#cccccc;font-size:4.95px;font-weight:700;">REMOTES</div><div class="r" style="left:21.50px;top:406.60px;width:138.00px;height:0.70px;background:#3a3a3a;"></div><svg color="#c5c5c5" class="ic" style="left:22.30px;top:408.20px;width:7px;height:7px" viewBox="0 0 16 16" fill="none" stroke="#c5c5c5" stroke-width="1.3" stroke-linecap="round" stroke-linejoin="round"><path d="M6 4l4 4-4 4"/></svg><div class="t s" style="left:30.80px;top:407.70px;color:#cccccc;font-size:4.95px;font-weight:700;">STASHES</div><div class="r" style="left:21.50px;top:416.70px;width:138.00px;height:0.70px;background:#3a3a3a;"></div><svg color="#c5c5c5" class="ic" style="left:22.30px;top:418.30px;width:7px;height:7px" viewBox="0 0 16 16" fill="none" stroke="#c5c5c5" stroke-width="1.3" stroke-linecap="round" stroke-linejoin="round"><path d="M6 4l4 4-4 4"/></svg><div class="t s" style="left:30.80px;top:417.80px;color:#cccccc;font-size:4.95px;font-weight:700;">TAGS</div><div class="r" style="left:21.50px;top:426.80px;width:138.00px;height:0.70px;background:#3a3a3a;"></div><svg color="#c5c5c5" class="ic" style="left:22.30px;top:428.40px;width:7px;height:7px" viewBox="0 0 16 16" fill="none" stroke="#c5c5c5" stroke-width="1.3" stroke-linecap="round" stroke-linejoin="round"><path d="M6 4l4 4-4 4"/></svg><div class="t s" style="left:30.80px;top:427.90px;color:#cccccc;font-size:4.95px;font-weight:700;">WORKTREES</div><div class="r" style="left:21.50px;top:436.90px;width:138.00px;height:0.70px;background:#3a3a3a;"></div><svg color="#c5c5c5" class="ic" style="left:22.30px;top:438.50px;width:7px;height:7px" viewBox="0 0 16 16" fill="none" stroke="#c5c5c5" stroke-width="1.3" stroke-linecap="round" stroke-linejoin="round"><path d="M6 4l4 4-4 4"/></svg><div class="t s" style="left:30.80px;top:438.00px;color:#cccccc;font-size:4.95px;font-weight:700;">CONTRIBUTORS (1)</div><div class="r" style="left:160.50px;top:0.00px;width:632.50px;height:446.00px;background:#1f1f1f;"></div><div class="r" style="left:160.50px;top:0.00px;width:632.50px;height:16.00px;background:#252526;"></div><div class="r" style="left:160.50px;top:0.00px;width:62.30px;height:16.00px;background:#2d2d2d;"></div><svg color="#a074c4" class="ic" style="left:164.75px;top:4.75px;width:6.5px;height:6.5px" viewBox="0 0 16 16" fill="none" stroke="#a074c4" stroke-width="1.6" stroke-linecap="round" stroke-linejoin="round"><rect x="3" y="3" width="10" height="10" rx="2"/><circle cx="8" cy="8" r="2.2"/></svg><div class="t s" style="left:173.30px;top:4.00px;color:#8b8b8b;font-size:6.2px;font-weight:400;">CarPark.png</div><div class="r" style="left:223.50px;top:0.00px;width:63.30px;height:16.00px;background:#2d2d2d;"></div><svg color="#c5c5c5" class="ic" style="left:228.25px;top:5.25px;width:5.5px;height:5.5px" viewBox="0 0 16 16" fill="none" stroke="#c5c5c5" stroke-width="1.6" stroke-linecap="round" stroke-linejoin="round"><path d="M3 3.5h10M3 8h10M3 12.5h10"/></svg><div class="t s" style="left:236.30px;top:4.00px;color:#e2c08d;font-size:6.2px;font-weight:400;">Counter.st  <span style="font-size:5.5px">M</span></div><div class="r" style="left:287.50px;top:0.00px;width:77.30px;height:16.00px;background:#1f1f1f;"></div><svg color="#c5c5c5" class="ic" style="left:292.25px;top:5.25px;width:5.5px;height:5.5px" viewBox="0 0 16 16" fill="none" stroke="#c5c5c5" stroke-width="1.6" stroke-linecap="round" stroke-linejoin="round"><path d="M3 3.5h10M3 8h10M3 12.5h10"/></svg><div class="t s" style="left:300.30px;top:4.00px;color:#ffffff;font-size:6.2px;font-weight:400;">ParkingCounter.st</div><svg color="#cccccc" class="ic" style="left:354.75px;top:5.25px;width:5.5px;height:5.5px" viewBox="0 0 16 16" fill="none" stroke="#cccccc" stroke-width="1.6" stroke-linecap="round" stroke-linejoin="round"><path d="M4 4l8 8M12 4l-8 8"/></svg><div class="r" style="left:365.50px;top:0.00px;width:85.30px;height:16.00px;background:#2d2d2d;"></div><svg color="#c5c5c5" class="ic" style="left:370.25px;top:5.25px;width:5.5px;height:5.5px" viewBox="0 0 16 16" fill="none" stroke="#c5c5c5" stroke-width="1.6" stroke-linecap="round" stroke-linejoin="round"><path d="M3 3.5h10M3 8h10M3 12.5h10"/></svg><div class="t s" style="left:378.30px;top:4.00px;color:#8b8b8b;font-size:6.2px;font-weight:400;">TestParkingCounter.st</div><div class="r" style="left:451.50px;top:0.00px;width:60.30px;height:16.00px;background:#2d2d2d;"></div><svg color="#a074c4" class="ic" style="left:455.75px;top:4.75px;width:6.5px;height:6.5px" viewBox="0 0 16 16" fill="none" stroke="#a074c4" stroke-width="1.8" stroke-linecap="round" stroke-linejoin="round"><path d="M8 3v7M8 12.5v.5"/></svg><div class="t s" style="left:464.30px;top:4.00px;color:#e2c08d;font-size:6.2px;font-weight:400;">apax.yml  <span style="font-size:5.5px">M</span></div><svg color="#d8d8d8" class="ic" style="left:705.75px;top:3.35px;width:8.5px;height:8.5px" viewBox="0 0 16 16" fill="none" stroke="#d8d8d8" stroke-width="1.4" stroke-linecap="round" stroke-linejoin="round"><path d="M2.5 2.5h6v6h-6zM9.5 7.5l4 3-4 3z" fill="currentColor"/></svg><svg color="#d8d8d8" class="ic" style="left:717.80px;top:3.35px;width:8.5px;height:8.5px" viewBox="0 0 16 16" fill="none" stroke="#d8d8d8" stroke-width="1.4" stroke-linecap="round" stroke-linejoin="round"><path d="M6 5L3 8l3 3"/><circle cx="10.5" cy="8" r="3"/></svg><svg color="#6a6a6a" class="ic" style="left:729.85px;top:3.35px;width:8.5px;height:8.5px" viewBox="0 0 16 16" fill="none" stroke="#6a6a6a" stroke-width="1.4" stroke-linecap="round" stroke-linejoin="round"><path d="M10 4L6 8l4 4"/><path d="M6 8h7"/></svg><svg color="#6a6a6a" class="ic" style="left:741.90px;top:3.35px;width:8.5px;height:8.5px" viewBox="0 0 16 16" fill="none" stroke="#6a6a6a" stroke-width="1.4" stroke-linecap="round" stroke-linejoin="round"><path d="M6 4l4 4-4 4"/><path d="M3 8h7"/></svg><svg color="#d8d8d8" class="ic" style="left:753.95px;top:3.35px;width:8.5px;height:8.5px" viewBox="0 0 16 16" fill="none" stroke="#d8d8d8" stroke-width="1.4" stroke-linecap="round" stroke-linejoin="round"><circle cx="8" cy="8" r="5.8"/><path d="M8 3v10M4 8h8"/></svg><svg color="#d8d8d8" class="ic" style="left:766.00px;top:3.35px;width:8.5px;height:8.5px" viewBox="0 0 16 16" fill="none" stroke="#d8d8d8" stroke-width="1.4" stroke-linecap="round" stroke-linejoin="round"><path d="M2.5 2.5h11v11h-11zM8 2.5v11"/></svg><svg color="#9a9a9a" class="ic" style="left:778.05px;top:3.35px;width:8.5px;height:8.5px" viewBox="0 0 16 16" fill="none" stroke="#9a9a9a" stroke-width="1.4" stroke-linecap="round" stroke-linejoin="round"><circle cx="3" cy="8" r=".55" fill="currentColor"/><circle cx="8" cy="8" r=".55" fill="currentColor"/><circle cx="13" cy="8" r=".55" fill="currentColor"/></svg><div class="t s" style="left:167.10px;top:17.00px;color:#a9a9a9;font-size:6.2px;font-weight:400;">src<span style="font-size:6px;margin:0 5.5px 0 2.2px">›</span><span style="color:#c5c5c5;font-size:5.6px;margin-right:3px">≡</span>ParkingCounter.st<span style="font-size:6px;margin:0 5.5px 0 2.2px">›</span><span style="color:#c5c5c5;font-size:5.6px;margin-right:3px">{}</span>Siemens<span style="font-size:6px;margin:0 5.5px 0 2.2px">›</span><span style="color:#c5c5c5;font-size:5.6px;margin-right:3px">{}</span>Ax<span style="font-size:6px;margin:0 5.5px 0 2.2px">›</span><span style="color:#c5c5c5;font-size:5.6px;margin-right:3px">{}</span>ExampleLibrary</div><div class="r" style="left:160.50px;top:26.00px;width:632.50px;height:1.30px;background:#161616;"></div><div class="r" style="left:190.00px;top:27.77px;width:0.75px;height:8.30px;background:#585858;"></div><div class="r" style="left:190.00px;top:36.04px;width:0.75px;height:8.30px;background:#585858;"></div><div class="r" style="left:203.25px;top:36.04px;width:0.75px;height:8.30px;background:#2e2e2e;"></div><div class="r" style="left:190.00px;top:44.30px;width:0.75px;height:8.30px;background:#585858;"></div><div class="r" style="left:203.25px;top:44.30px;width:0.75px;height:8.30px;background:#2e2e2e;"></div><div class="r" style="left:216.50px;top:44.30px;width:0.75px;height:8.30px;background:#2e2e2e;"></div><div class="r" style="left:190.00px;top:52.57px;width:0.75px;height:8.30px;background:#585858;"></div><div class="r" style="left:203.25px;top:52.57px;width:0.75px;height:8.30px;background:#2e2e2e;"></div><div class="r" style="left:216.50px;top:52.57px;width:0.75px;height:8.30px;background:#2e2e2e;"></div><div class="r" style="left:190.00px;top:60.85px;width:0.75px;height:8.30px;background:#585858;"></div><div class="r" style="left:203.25px;top:60.85px;width:0.75px;height:8.30px;background:#2e2e2e;"></div><div class="r" style="left:216.50px;top:60.85px;width:0.75px;height:8.30px;background:#2e2e2e;"></div><div class="r" style="left:190.00px;top:69.11px;width:0.75px;height:8.30px;background:#585858;"></div><div class="r" style="left:203.25px;top:69.11px;width:0.75px;height:8.30px;background:#2e2e2e;"></div><div class="r" style="left:190.00px;top:77.38px;width:0.75px;height:8.30px;background:#585858;"></div><div class="r" style="left:203.25px;top:77.38px;width:0.75px;height:8.30px;background:#2e2e2e;"></div><div class="r" style="left:190.00px;top:85.66px;width:0.75px;height:8.30px;background:#585858;"></div><div class="r" style="left:203.25px;top:85.66px;width:0.75px;height:8.30px;background:#2e2e2e;"></div><div class="r" style="left:216.50px;top:85.66px;width:0.75px;height:8.30px;background:#2e2e2e;"></div><div class="t m" style="left:158.00px;top:27.90px;color:#858585;font-size:5.5px;font-weight:400;width:20px;text-align:right">3</div><div class="t m" style="left:190.00px;top:27.90px;color:#d4d4d4;font-size:5.52px;font-weight:400;">    <span style="color:#569cd6">CLASS</span> ParkingCounter</div><div class="t m" style="left:158.00px;top:36.17px;color:#858585;font-size:5.5px;font-weight:400;width:20px;text-align:right">4</div><div class="t m" style="left:190.00px;top:36.17px;color:#d4d4d4;font-size:5.52px;font-weight:400;">        <span style="color:#569cd6">VAR</span> <span style="color:#569cd6">PUBLIC</span></div><div class="t m" style="left:158.00px;top:44.44px;color:#858585;font-size:5.5px;font-weight:400;width:20px;text-align:right">5</div><div class="t m" style="left:190.00px;top:44.44px;color:#d4d4d4;font-size:5.52px;font-weight:400;">            BSensorOutside : <span style="color:#569cd6">REF_TO</span> <span style="color:#569cd6">BOOL</span>;</div><div class="t m" style="left:158.00px;top:52.71px;color:#858585;font-size:5.5px;font-weight:400;width:20px;text-align:right">6</div><div class="t m" style="left:190.00px;top:52.71px;color:#d4d4d4;font-size:5.52px;font-weight:400;">            BSensorInside : <span style="color:#569cd6">REF_TO</span> <span style="color:#569cd6">BOOL</span>;</div><div class="t m" style="left:158.00px;top:60.98px;color:#858585;font-size:5.5px;font-weight:400;width:20px;text-align:right">7</div><div class="t m" style="left:190.00px;top:60.98px;color:#d4d4d4;font-size:5.52px;font-weight:400;">            Limit : <span style="color:#569cd6">INT</span>;</div><div class="t m" style="left:158.00px;top:69.25px;color:#858585;font-size:5.5px;font-weight:400;width:20px;text-align:right">8</div><div class="t m" style="left:190.00px;top:69.25px;color:#d4d4d4;font-size:5.52px;font-weight:400;">        <span style="color:#569cd6">END_VAR</span></div><div class="t m" style="left:158.00px;top:77.52px;color:#858585;font-size:5.5px;font-weight:400;width:20px;text-align:right">9</div><div class="t m" style="left:190.00px;top:77.52px;color:#d4d4d4;font-size:5.52px;font-weight:400;">        <span style="color:#569cd6">VAR</span></div><div class="t m" style="left:158.00px;top:85.79px;color:#858585;font-size:5.5px;font-weight:400;width:20px;text-align:right">10</div><div class="t m" style="left:190.00px;top:85.79px;color:#d4d4d4;font-size:5.52px;font-weight:400;">            c : Counter;</div><div class="r" style="left:733.00px;top:24.50px;width:13.44px;height:0.65px;background:#4d7fb0;opacity:.55"></div><div class="r" style="left:733.00px;top:25.45px;width:8.40px;height:0.65px;background:#4d7fb0;opacity:.55"></div><div class="r" style="left:735.00px;top:26.40px;width:8.40px;height:0.65px;background:#4d7fb0;opacity:.55"></div><div class="r" style="left:737.00px;top:27.35px;width:4.20px;height:0.65px;background:#4d7fb0;opacity:.55"></div><div class="r" style="left:739.00px;top:28.30px;width:12.18px;height:0.65px;background:#8a8a8a;opacity:.55"></div><div class="r" style="left:739.00px;top:29.25px;width:11.76px;height:0.65px;background:#8a8a8a;opacity:.55"></div><div class="r" style="left:739.00px;top:30.20px;width:5.04px;height:0.65px;background:#8a8a8a;opacity:.55"></div><div class="r" style="left:737.00px;top:31.15px;width:2.94px;height:0.65px;background:#4d7fb0;opacity:.55"></div><div class="r" style="left:737.00px;top:32.10px;width:1.26px;height:0.65px;background:#4d7fb0;opacity:.55"></div><div class="r" style="left:739.00px;top:33.05px;width:5.04px;height:0.65px;background:#8a8a8a;opacity:.55"></div><div class="r" style="left:739.00px;top:34.00px;width:10.92px;height:0.65px;background:#8a8a8a;opacity:.55"></div><div class="r" style="left:739.00px;top:34.95px;width:10.92px;height:0.65px;background:#8a8a8a;opacity:.55"></div><div class="r" style="left:737.00px;top:35.90px;width:2.94px;height:0.65px;background:#4d7fb0;opacity:.55"></div><div class="r" style="left:737.00px;top:36.85px;width:18.48px;height:0.65px;background:#4f7a45;opacity:.55"></div><div class="r" style="left:737.00px;top:37.80px;width:8.82px;height:0.65px;background:#4d7fb0;opacity:.55"></div><div class="r" style="left:739.00px;top:38.75px;width:33.60px;height:0.65px;background:#8a8a8a;opacity:.55"></div><div class="r" style="left:737.00px;top:39.70px;width:4.20px;height:0.65px;background:#4d7fb0;opacity:.55"></div><div class="r" style="left:737.00px;top:40.65px;width:21.00px;height:0.65px;background:#4f7a45;opacity:.55"></div><div class="r" style="left:737.00px;top:41.60px;width:18.06px;height:0.65px;background:#4d7fb0;opacity:.55"></div><div class="r" style="left:739.00px;top:42.55px;width:16.38px;height:0.65px;background:#8a8a8a;opacity:.55"></div><div class="r" style="left:737.00px;top:43.50px;width:4.20px;height:0.65px;background:#4d7fb0;opacity:.55"></div><div class="r" style="left:737.00px;top:44.45px;width:28.98px;height:0.65px;background:#4f7a45;opacity:.55"></div><div class="r" style="left:737.00px;top:45.40px;width:9.24px;height:0.65px;background:#4d7fb0;opacity:.55"></div><div class="r" style="left:739.00px;top:46.35px;width:3.78px;height:0.65px;background:#4d7fb0;opacity:.55"></div><div class="r" style="left:741.00px;top:47.30px;width:6.72px;height:0.65px;background:#8a8a8a;opacity:.55"></div><div class="r" style="left:739.00px;top:48.25px;width:2.94px;height:0.65px;background:#4d7fb0;opacity:.55"></div><div class="r" style="left:739.00px;top:49.20px;width:4.62px;height:0.65px;background:#8a8a8a;opacity:.55"></div><div class="r" style="left:741.00px;top:50.15px;width:6.72px;height:0.65px;background:#8a8a8a;opacity:.55"></div><div class="r" style="left:743.00px;top:51.10px;width:5.04px;height:0.65px;background:#8a8a8a;opacity:.55"></div><div class="r" style="left:743.00px;top:52.05px;width:12.60px;height:0.65px;background:#8a8a8a;opacity:.55"></div><div class="r" style="left:745.00px;top:53.00px;width:7.56px;height:0.65px;background:#8a8a8a;opacity:.55"></div><div class="r" style="left:743.00px;top:53.95px;width:2.94px;height:0.65px;background:#8a8a8a;opacity:.55"></div><div class="r" style="left:741.00px;top:54.90px;width:6.72px;height:0.65px;background:#8a8a8a;opacity:.55"></div><div class="r" style="left:743.00px;top:55.85px;width:5.88px;height:0.65px;background:#8a8a8a;opacity:.55"></div><div class="r" style="left:743.00px;top:56.80px;width:10.92px;height:0.65px;background:#8a8a8a;opacity:.55"></div><div class="r" style="left:745.00px;top:57.75px;width:5.46px;height:0.65px;background:#8a8a8a;opacity:.55"></div><div class="r" style="left:743.00px;top:58.70px;width:2.94px;height:0.65px;background:#8a8a8a;opacity:.55"></div><div class="r" style="left:739.00px;top:59.65px;width:3.78px;height:0.65px;background:#8a8a8a;opacity:.55"></div><div class="r" style="left:737.00px;top:60.60px;width:4.20px;height:0.65px;background:#4d7fb0;opacity:.55"></div><div class="r" style="left:737.00px;top:61.55px;width:21.42px;height:0.65px;background:#4f7a45;opacity:.55"></div><div class="r" style="left:737.00px;top:62.50px;width:18.06px;height:0.65px;background:#4d7fb0;opacity:.55"></div><div class="r" style="left:739.00px;top:63.45px;width:3.78px;height:0.65px;background:#4d7fb0;opacity:.55"></div><div class="r" style="left:741.00px;top:64.40px;width:4.62px;height:0.65px;background:#8a8a8a;opacity:.55"></div><div class="r" style="left:741.00px;top:65.35px;width:5.04px;height:0.65px;background:#8a8a8a;opacity:.55"></div><div class="r" style="left:739.00px;top:66.30px;width:2.94px;height:0.65px;background:#4d7fb0;opacity:.55"></div><div class="r" style="left:739.00px;top:67.25px;width:3.36px;height:0.65px;background:#4d7fb0;opacity:.55"></div><div class="r" style="left:741.00px;top:68.20px;width:10.92px;height:0.65px;background:#8a8a8a;opacity:.55"></div><div class="r" style="left:741.00px;top:69.15px;width:10.92px;height:0.65px;background:#8a8a8a;opacity:.55"></div><div class="r" style="left:739.00px;top:70.10px;width:2.94px;height:0.65px;background:#4d7fb0;opacity:.55"></div><div class="r" style="left:739.00px;top:71.05px;width:28.14px;height:0.65px;background:#8a8a8a;opacity:.55"></div><div class="r" style="left:739.00px;top:72.00px;width:15.96px;height:0.65px;background:#8a8a8a;opacity:.55"></div><div class="r" style="left:739.00px;top:72.95px;width:27.72px;height:0.65px;background:#8a8a8a;opacity:.55"></div><div class="r" style="left:739.00px;top:73.90px;width:15.54px;height:0.65px;background:#8a8a8a;opacity:.55"></div><div class="r" style="left:739.00px;top:74.85px;width:21.42px;height:0.65px;background:#8a8a8a;opacity:.55"></div><div class="r" style="left:741.00px;top:75.80px;width:14.28px;height:0.65px;background:#8a8a8a;opacity:.55"></div><div class="r" style="left:739.00px;top:76.75px;width:22.68px;height:0.65px;background:#8a8a8a;opacity:.55"></div><div class="r" style="left:741.00px;top:77.70px;width:14.28px;height:0.65px;background:#8a8a8a;opacity:.55"></div><div class="r" style="left:739.00px;top:78.65px;width:1.68px;height:0.65px;background:#8a8a8a;opacity:.55"></div><div class="r" style="left:741.00px;top:79.60px;width:13.86px;height:0.65px;background:#8a8a8a;opacity:.55"></div><div class="r" style="left:739.00px;top:80.55px;width:2.94px;height:0.65px;background:#8a8a8a;opacity:.55"></div><div class="r" style="left:737.00px;top:81.50px;width:4.20px;height:0.65px;background:#4d7fb0;opacity:.55"></div><div class="r" style="left:735.00px;top:82.45px;width:3.78px;height:0.65px;background:#4d7fb0;opacity:.55"></div><div class="r" style="left:733.00px;top:83.40px;width:5.46px;height:0.65px;background:#4d7fb0;opacity:.55"></div><div class="r" style="left:786.50px;top:38.50px;width:6.50px;height:178.00px;background:#424242;"></div><div class="r" style="left:786.50px;top:261.00px;width:6.50px;height:0.90px;background:#b0b0b0;"></div><div class="r" style="left:0.00px;top:446.00px;width:793.00px;height:11.00px;background:#007acc;"></div><div class="r" style="left:0.00px;top:446.00px;width:15.00px;height:11.00px;background:#16825d;"></div><svg color="#ffffff" class="ic" style="left:4.00px;top:448.00px;width:7px;height:7px" viewBox="0 0 16 16" fill="none" stroke="#ffffff" stroke-width="1.3" stroke-linecap="round" stroke-linejoin="round"><path d="M4 12l3-3M9 7l3-3M5.5 5.5l5 5"/></svg><svg color="#ffffff" class="ic" style="left:16.50px;top:448.00px;width:7px;height:7px" viewBox="0 0 16 16" fill="none" stroke="#ffffff" stroke-width="1.2" stroke-linecap="round" stroke-linejoin="round"><circle cx="5" cy="3.5" r="1.5"/><circle cx="5" cy="12.5" r="1.5"/><circle cx="11" cy="5.5" r="1.5"/><path d="M5 5v6M11 7c0 3-6 2-6 4"/></svg><div class="t s" style="left:25.00px;top:447.50px;color:#ffffff;font-size:5.6px;font-weight:400;">SIMATIC_AX*+</div><svg color="#ffffff" class="ic" style="left:66.50px;top:448.00px;width:7px;height:7px" viewBox="0 0 16 16" fill="none" stroke="#ffffff" stroke-width="1.2" stroke-linecap="round" stroke-linejoin="round"><path d="M3 8a5 5 0 0 1 9-3M13 8a5 5 0 0 1-9 3"/><path d="M12 2v3H9M4 14v-3h3"/></svg><svg color="#ffffff" class="ic" style="left:79.00px;top:448.00px;width:7px;height:7px" viewBox="0 0 16 16" fill="none" stroke="#ffffff" stroke-width="1.2" stroke-linecap="round" stroke-linejoin="round"><path d="M3 4h10M3 8h7M3 12h10"/><path d="M11 6l2 2-2 2"/></svg><div class="bd"></div></div><div class="w" style="left:200px;top:190px;z-index:3"><div class="r" style="left:0.00px;top:0.00px;width:21.50px;height:446.50px;background:#2c2c2c;"></div><div class="r" style="left:21.50px;top:0.00px;width:138.00px;height:446.50px;background:#252526;"></div><svg color="#858585" class="ic" style="left:4.75px;top:2.50px;width:10px;height:10px" viewBox="0 0 16 16" fill="none" stroke="#858585" stroke-width="1.0" stroke-linecap="round" stroke-linejoin="round"><path d="M3 4.5h10M3 8h10M3 11.5h10"/></svg><svg class="ic" style="left:4.25px;top:20.50px;width:11px;height:11px" viewBox="0 0 24 24" fill="#858585"><path d="M17.5 0h-9L7 1.5V6H2.5L1 7.5v15.07L2.5 24h12.07L16 22.57V18h4.7l1.3-1.43V4.5L17.5 0zm0 2.12l2.38 2.38H17.5V2.12zm-3 20.38h-12v-15H7v9.07L8.5 18h6v4.5zm6-6h-12v-15H16V6h4.5v10.5z"/></svg><svg color="#858585" class="ic" style="left:3.50px;top:41.75px;width:12.5px;height:12.5px" viewBox="0 0 16 16" fill="none" stroke="#858585" stroke-width="1.1" stroke-linecap="round" stroke-linejoin="round"><circle cx="9.5" cy="6.5" r="4"/><path d="M6.6 9.4L2.5 13.5"/></svg><svg color="#858585" class="ic" style="left:3.50px;top:63.75px;width:12.5px;height:12.5px" viewBox="0 0 16 16" fill="none" stroke="#858585" stroke-width="1.1" stroke-linecap="round" stroke-linejoin="round"><circle cx="8" cy="8" r="5.8"/><path d="M6 4.5l2.5 3.5-2.5 3.5"/><circle cx="10.5" cy="11" r="2"/></svg><svg class="ic" style="left:4.25px;top:86.50px;width:11px;height:11px" viewBox="0 0 24 24" fill="#858585"><path d="M13.5 1.5L15 0h7.5L24 1.5V9l-1.5 1.5H15L13.5 9V1.5zm1.5 0V9h7.5V1.5H15zM0 15V6l1.5-1.5H9L10.5 6v7.5H18l1.5 1.5v7.5L18 24H1.5L0 22.5V15zm9-1.5V6H1.5v7.5H9zM9 15H1.5v7.5H9V15zm1.5 7.5H18V15h-7.5v7.5z"/></svg><svg color="#858585" class="ic" style="left:3.50px;top:107.75px;width:12.5px;height:12.5px" viewBox="0 0 16 16" fill="none" stroke="#858585" stroke-width="1.1" stroke-linecap="round" stroke-linejoin="round"><circle cx="8" cy="8" r="5.8"/><path d="M6.5 4.5l3.5 3.5-3.5 3.5"/></svg><svg class="ic" style="left:4.25px;top:130.50px;width:11px;height:11px" viewBox="0 0 24 24" fill="#858585"><path d="M21.007 8.222A3.738 3.738 0 0 0 15.045 5.2a3.737 3.737 0 0 0 1.156 6.583 2.988 2.988 0 0 1-2.668 1.67h-2.99a4.456 4.456 0 0 0-2.989 1.165V7.4a3.737 3.737 0 1 0-1.494 0v9.117a3.776 3.776 0 1 0 1.816.099 2.99 2.99 0 0 1 2.668-1.667h2.99a4.484 4.484 0 0 0 4.223-3.039 3.736 3.736 0 0 0 3.25-3.687zM4.565 3.738a2.242 2.242 0 1 1 4.484 0 2.242 2.242 0 0 1-4.484 0zm4.484 16.441a2.242 2.242 0 1 1-4.484 0 2.242 2.242 0 0 1 4.484 0zm8.221-9.715a2.242 2.242 0 1 1 0-4.485 2.242 2.242 0 0 1 0 4.485z"/></svg><svg color="#e8e8e8" class="ic" style="left:3.50px;top:151.75px;width:12.5px;height:12.5px" viewBox="0 0 16 16" fill="none" stroke="#e8e8e8" stroke-width="1.1" stroke-linecap="round" stroke-linejoin="round"><path d="M6 2h4M6.5 2v4.5L3 13.5h10L9.5 6.5V2"/><path d="M4.5 10.5h7"/></svg><svg class="ic" style="left:4.25px;top:174.50px;width:11px;height:11px" viewBox="0 0 24 24" fill="#858585"><path d="M10.94 13.5l-1.32 1.32a3.73 3.73 0 0 0-7.24 0L1.06 13.5 0 14.56l1.72 1.72-.22.22V18H0v1.5h1.5v.08c.077.489.214.966.41 1.42L0 22.94 1.06 24l1.65-1.65A4.308 4.308 0 0 0 6 24a4.31 4.31 0 0 0 3.29-1.65L10.94 24 12 22.94 10.09 21c.198-.464.336-.951.41-1.45v-.1H12V18h-1.5v-1.5l-.22-.22L12 14.56l-1.06-1.06zM6 13.5a2.250 2.250 0 0 1 2.25 2.25h-4.5A2.250 2.250 0 0 1 6 13.5zm3 6a3.330 3.330 0 0 1-3 3 3.330 3.330 0 0 1-3-3v-2.25h6v2.25zm14.76-9.9v1.26L13.5 17.37V15.6l8.45-5.37L9 2v9.46a5.070 5.070 0 0 0-1.5-.72V.63L8.64 0l15.12 9.6z"/></svg><svg color="#858585" class="ic" style="left:3.50px;top:195.75px;width:12.5px;height:12.5px" viewBox="0 0 16 16" fill="none" stroke="#858585" stroke-width="1.1" stroke-linecap="round" stroke-linejoin="round"><path d="M8 2l5.5 3v6L8 14l-5.5-3V5z"/><path d="M2.5 5L8 8l5.5-3M8 8v6"/></svg><svg color="#858585" class="ic" style="left:3.50px;top:217.75px;width:12.5px;height:12.5px" viewBox="0 0 16 16" fill="none" stroke="#858585" stroke-width="1.1" stroke-linecap="round" stroke-linejoin="round"><path d="M2.5 2.5h11v11h-11z"/><path d="M3 3h4.5v10H3z" fill="currentColor" stroke="none"/><path d="M10 5v6"/></svg><svg color="#858585" class="ic" style="left:3.50px;top:239.75px;width:12.5px;height:12.5px" viewBox="0 0 16 16" fill="none" stroke="#858585" stroke-width="1.1" stroke-linecap="round" stroke-linejoin="round"><path d="M2.5 2.5v11h11"/><path d="M4.5 11l3-4 2.5 2 3.5-5"/></svg><div class="r" style="left:12.15px;top:135.90px;width:7.20px;height:7.20px;background:#1a85ff;border-radius:50%"></div><div class="t s" style="left:14.55px;top:135.60px;color:#ffffff;font-size:4.5px;font-weight:400;">2</div><svg color="#858585" class="ic" style="left:3.75px;top:406.50px;width:13px;height:13px" viewBox="0 0 16 16" fill="none" stroke="#858585" stroke-width="1.0" stroke-linecap="round" stroke-linejoin="round"><circle cx="8" cy="8" r="6"/><circle cx="8" cy="6.5" r="2.2"/><path d="M4.2 12.2c1-2 6.6-2 7.6 0"/></svg><svg color="#858585" class="ic" style="left:3.75px;top:429.50px;width:13px;height:13px" viewBox="0 0 16 16" fill="none" stroke="#858585" stroke-width="1.0" stroke-linecap="round" stroke-linejoin="round"><circle cx="8" cy="8" r="2"/><path d="M8 1.8l1.1 1.6 1.9-.5.5 1.9 1.9.6-.5 1.9 1.3 1.3-1.3 1.3.5 1.9-1.9.6-.5 1.9-1.9-.5L8 14.2l-1.1-1.6-1.9.5-.5-1.9-1.9-.6.5-1.9L1.8 8l1.3-1.3-.5-1.9 1.9-.6.5-1.9 1.9.5z"/></svg><div class="t s" style="left:31.70px;top:4.40px;color:#bbbbbb;font-size:4.95px;font-weight:400;">TESTING</div><svg color="#c5c5c5" class="ic" style="left:103.20px;top:4.40px;width:8px;height:8px" viewBox="0 0 16 16" fill="none" stroke="#c5c5c5" stroke-width="1.2" stroke-linecap="round" stroke-linejoin="round"><path d="M4 2.5l9 5.5-9 5.5z"/></svg><div class="r" style="left:113.50px;top:8.20px;width:3.00px;height:0.60px;background:#888;"></div><svg color="#c5c5c5" class="ic" style="left:120.90px;top:4.40px;width:8px;height:8px" viewBox="0 0 16 16" fill="none" stroke="#c5c5c5" stroke-width="1.2" stroke-linecap="round" stroke-linejoin="round"><path d="M6 3l8 5-8 5z"/><circle cx="4" cy="11" r="2.2"/></svg><svg color="#c5c5c5" class="ic" style="left:133.30px;top:4.40px;width:8px;height:8px" viewBox="0 0 16 16" fill="none" stroke="#c5c5c5" stroke-width="1.2" stroke-linecap="round" stroke-linejoin="round"><path d="M3 2.5h10v11H3z"/><path d="M6 6l4 2-4 2z"/></svg><svg color="#c5c5c5" class="ic" style="left:145.00px;top:4.40px;width:8px;height:8px" viewBox="0 0 16 16" fill="none" stroke="#c5c5c5" stroke-width="1.2" stroke-linecap="round" stroke-linejoin="round"><circle cx="3" cy="8" r=".55" fill="currentColor"/><circle cx="8" cy="8" r=".55" fill="currentColor"/><circle cx="13" cy="8" r=".55" fill="currentColor"/></svg><div class="r" style="left:28.00px;top:18.40px;width:126.00px;height:13.00px;background:#3c3c3c;"></div><div class="t s" style="left:31.00px;top:20.90px;color:#9a9a9a;font-size:6.2px;font-weight:400;">Filter (e.g. text, !exclude, @tag)</div><svg color="#c5c5c5" class="ic" style="left:144.00px;top:21.40px;width:7px;height:7px" viewBox="0 0 16 16" fill="none" stroke="#c5c5c5" stroke-width="1.2" stroke-linecap="round" stroke-linejoin="round"><path d="M2 3h12l-4.5 5.5V13l-3 1.5V8.5z"/></svg><div class="t s" style="left:28.40px;top:32.70px;color:#9a9a9a;font-size:6.2px;font-weight:400;">12/12 tests passed (100%)</div><svg color="#c5c5c5" class="ic" style="left:27.40px;top:46.50px;width:7px;height:7px" viewBox="0 0 16 16" fill="none" stroke="#c5c5c5" stroke-width="1.3" stroke-linecap="round" stroke-linejoin="round"><path d="M4 6l4 4 4-4"/></svg><svg color="#3e9a55" class="ic" style="left:35.45px;top:46.25px;width:7.5px;height:7.5px" viewBox="0 0 16 16" fill="none" stroke="#3e9a55" stroke-width="1.3" stroke-linecap="round" stroke-linejoin="round"><circle cx="8" cy="8" r="6"/><path d="M5.2 8.2l2 2 3.8-4"/></svg><div class="t s" style="left:45.10px;top:46.00px;color:#cccccc;font-size:6.2px;font-weight:400;">Siemens</div><svg color="#c5c5c5" class="ic" style="left:31.10px;top:56.58px;width:7px;height:7px" viewBox="0 0 16 16" fill="none" stroke="#c5c5c5" stroke-width="1.3" stroke-linecap="round" stroke-linejoin="round"><path d="M4 6l4 4 4-4"/></svg><svg color="#3e9a55" class="ic" style="left:39.25px;top:56.33px;width:7.5px;height:7.5px" viewBox="0 0 16 16" fill="none" stroke="#3e9a55" stroke-width="1.3" stroke-linecap="round" stroke-linejoin="round"><circle cx="8" cy="8" r="6"/><path d="M5.2 8.2l2 2 3.8-4"/></svg><div class="t s" style="left:49.00px;top:56.08px;color:#cccccc;font-size:6.2px;font-weight:400;">Ax</div><svg color="#c5c5c5" class="ic" style="left:34.90px;top:66.66px;width:7px;height:7px" viewBox="0 0 16 16" fill="none" stroke="#c5c5c5" stroke-width="1.3" stroke-linecap="round" stroke-linejoin="round"><path d="M4 6l4 4 4-4"/></svg><svg color="#3e9a55" class="ic" style="left:42.65px;top:66.41px;width:7.5px;height:7.5px" viewBox="0 0 16 16" fill="none" stroke="#3e9a55" stroke-width="1.3" stroke-linecap="round" stroke-linejoin="round"><circle cx="8" cy="8" r="6"/><path d="M5.2 8.2l2 2 3.8-4"/></svg><div class="t s" style="left:52.60px;top:66.16px;color:#cccccc;font-size:6.2px;font-weight:400;">TestCounter</div><svg color="#3e9a55" class="ic" style="left:46.25px;top:76.49px;width:7.5px;height:7.5px" viewBox="0 0 16 16" fill="none" stroke="#3e9a55" stroke-width="1.3" stroke-linecap="round" stroke-linejoin="round"><circle cx="8" cy="8" r="6"/><path d="M5.2 8.2l2 2 3.8-4"/></svg><div class="t s" style="left:56.50px;top:76.24px;color:#cccccc;font-size:6.2px;font-weight:400;">Test_CountUp_1_Time_And_Get_1</div><svg color="#3e9a55" class="ic" style="left:46.25px;top:86.57px;width:7.5px;height:7.5px" viewBox="0 0 16 16" fill="none" stroke="#3e9a55" stroke-width="1.3" stroke-linecap="round" stroke-linejoin="round"><circle cx="8" cy="8" r="6"/><path d="M5.2 8.2l2 2 3.8-4"/></svg><div class="t s" style="left:56.50px;top:86.32px;color:#cccccc;font-size:6.2px;font-weight:400;">Test_CountDown_1_Time</div><div class="r" style="left:21.50px;top:95.60px;width:138.00px;height:9.60px;background:#35373b;"></div><svg color="#3e9a55" class="ic" style="left:46.25px;top:96.65px;width:7.5px;height:7.5px" viewBox="0 0 16 16" fill="none" stroke="#3e9a55" stroke-width="1.3" stroke-linecap="round" stroke-linejoin="round"><circle cx="8" cy="8" r="6"/><path d="M5.2 8.2l2 2 3.8-4"/></svg><div class="t s" style="left:56.50px;top:96.40px;color:#cccccc;font-size:6.2px;font-weight:400;">Test_CountUp_Limit</div><svg color="#3e9a55" class="ic" style="left:46.25px;top:106.73px;width:7.5px;height:7.5px" viewBox="0 0 16 16" fill="none" stroke="#3e9a55" stroke-width="1.3" stroke-linecap="round" stroke-linejoin="round"><circle cx="8" cy="8" r="6"/><path d="M5.2 8.2l2 2 3.8-4"/></svg><div class="t s" style="left:56.50px;top:106.48px;color:#cccccc;font-size:6.2px;font-weight:400;">Test_CountDown_0</div><svg color="#3e9a55" class="ic" style="left:46.25px;top:116.81px;width:7.5px;height:7.5px" viewBox="0 0 16 16" fill="none" stroke="#3e9a55" stroke-width="1.3" stroke-linecap="round" stroke-linejoin="round"><circle cx="8" cy="8" r="6"/><path d="M5.2 8.2l2 2 3.8-4"/></svg><div class="t s" style="left:56.50px;top:116.56px;color:#cccccc;font-size:6.2px;font-weight:400;">Test_SetValue</div><svg color="#3e9a55" class="ic" style="left:46.25px;top:126.89px;width:7.5px;height:7.5px" viewBox="0 0 16 16" fill="none" stroke="#3e9a55" stroke-width="1.3" stroke-linecap="round" stroke-linejoin="round"><circle cx="8" cy="8" r="6"/><path d="M5.2 8.2l2 2 3.8-4"/></svg><div class="t s" style="left:56.50px;top:126.64px;color:#cccccc;font-size:6.2px;font-weight:400;">Test_SetValue_Limit</div><svg color="#c5c5c5" class="ic" style="left:34.90px;top:137.22px;width:7px;height:7px" viewBox="0 0 16 16" fill="none" stroke="#c5c5c5" stroke-width="1.3" stroke-linecap="round" stroke-linejoin="round"><path d="M6 4l4 4-4 4"/></svg><svg color="#3e9a55" class="ic" style="left:42.65px;top:136.97px;width:7.5px;height:7.5px" viewBox="0 0 16 16" fill="none" stroke="#3e9a55" stroke-width="1.3" stroke-linecap="round" stroke-linejoin="round"><circle cx="8" cy="8" r="6"/><path d="M5.2 8.2l2 2 3.8-4"/></svg><div class="t s" style="left:52.60px;top:136.72px;color:#cccccc;font-size:6.2px;font-weight:400;">TestParkingCounter</div><svg color="#c5c5c5" class="ic" style="left:34.90px;top:147.30px;width:7px;height:7px" viewBox="0 0 16 16" fill="none" stroke="#c5c5c5" stroke-width="1.3" stroke-linecap="round" stroke-linejoin="round"><path d="M6 4l4 4-4 4"/></svg><svg color="#3e9a55" class="ic" style="left:42.65px;top:147.05px;width:7.5px;height:7.5px" viewBox="0 0 16 16" fill="none" stroke="#3e9a55" stroke-width="1.3" stroke-linecap="round" stroke-linejoin="round"><circle cx="8" cy="8" r="6"/><path d="M5.2 8.2l2 2 3.8-4"/></svg><div class="t s" style="left:52.60px;top:146.80px;color:#cccccc;font-size:6.2px;font-weight:400;">TestParkingCounterFB</div><div class="r" style="left:38.30px;top:75.00px;width:0.60px;height:62.00px;background:#3a3a3a;"></div><div class="r" style="left:159.50px;top:0.00px;width:633.50px;height:446.50px;background:#1f1f1f;"></div><div class="r" style="left:159.50px;top:0.00px;width:633.50px;height:16.00px;background:#252526;"></div><div class="r" style="left:159.50px;top:0.00px;width:62.30px;height:16.00px;background:#2d2d2d;"></div><svg color="#a074c4" class="ic" style="left:163.75px;top:4.75px;width:6.5px;height:6.5px" viewBox="0 0 16 16" fill="none" stroke="#a074c4" stroke-width="1.6" stroke-linecap="round" stroke-linejoin="round"><rect x="3" y="3" width="10" height="10" rx="2"/><circle cx="8" cy="8" r="2.2"/></svg><div class="t s" style="left:172.30px;top:4.00px;color:#8b8b8b;font-size:6.2px;font-weight:400;">CarPark.png</div><div class="r" style="left:222.50px;top:0.00px;width:64.30px;height:16.00px;background:#2d2d2d;"></div><svg color="#c5c5c5" class="ic" style="left:227.25px;top:5.25px;width:5.5px;height:5.5px" viewBox="0 0 16 16" fill="none" stroke="#c5c5c5" stroke-width="1.6" stroke-linecap="round" stroke-linejoin="round"><path d="M3 3.5h10M3 8h10M3 12.5h10"/></svg><div class="t s" style="left:235.30px;top:4.00px;color:#e2c08d;font-size:6.2px;font-weight:400;">Counter.st  <span style="font-size:5.5px">M</span></div><div class="r" style="left:287.50px;top:0.00px;width:75.30px;height:16.00px;background:#2d2d2d;"></div><svg color="#c5c5c5" class="ic" style="left:292.25px;top:5.25px;width:5.5px;height:5.5px" viewBox="0 0 16 16" fill="none" stroke="#c5c5c5" stroke-width="1.6" stroke-linecap="round" stroke-linejoin="round"><path d="M3 3.5h10M3 8h10M3 12.5h10"/></svg><div class="t s" style="left:300.30px;top:4.00px;color:#8b8b8b;font-size:6.2px;font-weight:400;">ParkingCounter.st</div><div class="r" style="left:363.50px;top:0.00px;width:90.30px;height:16.00px;background:#1f1f1f;"></div><svg color="#c5c5c5" class="ic" style="left:368.25px;top:5.25px;width:5.5px;height:5.5px" viewBox="0 0 16 16" fill="none" stroke="#c5c5c5" stroke-width="1.6" stroke-linecap="round" stroke-linejoin="round"><path d="M3 3.5h10M3 8h10M3 12.5h10"/></svg><div class="t s" style="left:376.30px;top:4.00px;color:#ffffff;font-size:6.2px;font-weight:400;">TestParkingCounter.st</div><svg color="#cccccc" class="ic" style="left:443.75px;top:5.25px;width:5.5px;height:5.5px" viewBox="0 0 16 16" fill="none" stroke="#cccccc" stroke-width="1.6" stroke-linecap="round" stroke-linejoin="round"><path d="M4 4l8 8M12 4l-8 8"/></svg><div class="r" style="left:454.50px;top:0.00px;width:60.30px;height:16.00px;background:#2d2d2d;"></div><svg color="#a074c4" class="ic" style="left:458.75px;top:4.75px;width:6.5px;height:6.5px" viewBox="0 0 16 16" fill="none" stroke="#a074c4" stroke-width="1.8" stroke-linecap="round" stroke-linejoin="round"><path d="M8 3v7M8 12.5v.5"/></svg><div class="t s" style="left:467.30px;top:4.00px;color:#e2c08d;font-size:6.2px;font-weight:400;">apax.yml  <span style="font-size:5.5px">M</span></div><svg color="#d8d8d8" class="ic" style="left:705.75px;top:3.35px;width:8.5px;height:8.5px" viewBox="0 0 16 16" fill="none" stroke="#d8d8d8" stroke-width="1.4" stroke-linecap="round" stroke-linejoin="round"><path d="M2.5 2.5h6v6h-6zM9.5 7.5l4 3-4 3z" fill="currentColor"/></svg><svg color="#d8d8d8" class="ic" style="left:717.80px;top:3.35px;width:8.5px;height:8.5px" viewBox="0 0 16 16" fill="none" stroke="#d8d8d8" stroke-width="1.4" stroke-linecap="round" stroke-linejoin="round"><path d="M6 5L3 8l3 3"/><circle cx="10.5" cy="8" r="3"/></svg><svg color="#6a6a6a" class="ic" style="left:729.85px;top:3.35px;width:8.5px;height:8.5px" viewBox="0 0 16 16" fill="none" stroke="#6a6a6a" stroke-width="1.4" stroke-linecap="round" stroke-linejoin="round"><path d="M10 4L6 8l4 4"/><path d="M6 8h7"/></svg><svg color="#6a6a6a" class="ic" style="left:741.90px;top:3.35px;width:8.5px;height:8.5px" viewBox="0 0 16 16" fill="none" stroke="#6a6a6a" stroke-width="1.4" stroke-linecap="round" stroke-linejoin="round"><path d="M6 4l4 4-4 4"/><path d="M3 8h7"/></svg><svg color="#d8d8d8" class="ic" style="left:753.95px;top:3.35px;width:8.5px;height:8.5px" viewBox="0 0 16 16" fill="none" stroke="#d8d8d8" stroke-width="1.4" stroke-linecap="round" stroke-linejoin="round"><circle cx="8" cy="8" r="5.8"/><path d="M8 3v10M4 8h8"/></svg><svg color="#d8d8d8" class="ic" style="left:766.00px;top:3.35px;width:8.5px;height:8.5px" viewBox="0 0 16 16" fill="none" stroke="#d8d8d8" stroke-width="1.4" stroke-linecap="round" stroke-linejoin="round"><path d="M2.5 2.5h11v11h-11zM8 2.5v11"/></svg><svg color="#9a9a9a" class="ic" style="left:778.05px;top:3.35px;width:8.5px;height:8.5px" viewBox="0 0 16 16" fill="none" stroke="#9a9a9a" stroke-width="1.4" stroke-linecap="round" stroke-linejoin="round"><circle cx="3" cy="8" r=".55" fill="currentColor"/><circle cx="8" cy="8" r=".55" fill="currentColor"/><circle cx="13" cy="8" r=".55" fill="currentColor"/></svg><div class="t s" style="left:167.50px;top:17.00px;color:#a9a9a9;font-size:6.2px;font-weight:400;">test<span style="font-size:6px;margin:0 5.5px 0 2.2px">›</span><span style="color:#c5c5c5;font-size:5.6px;margin-right:3px">≡</span>TestParkingCounter.st<span style="font-size:6px;margin:0 5.5px 0 2.2px">›</span><span style="color:#c5c5c5;font-size:5.6px;margin-right:3px">{}</span>Siemens<span style="font-size:6px;margin:0 5.5px 0 2.2px">›</span><span style="color:#c5c5c5;font-size:5.6px;margin-right:3px">{}</span>Ax<span style="font-size:6px;margin:0 5.5px 0 2.2px">›</span><span style="color:#ee9d28;font-size:5.6px;margin-right:3px">♦</span>TestParkingCounter<span style="font-size:6px;margin:0 5.5px 0 2.2px">›</span><span style="color:#b180d7;font-size:5.6px;margin-right:3px">○</span>Count_1_object_entering</div><div class="r" style="left:159.50px;top:26.00px;width:633.50px;height:1.30px;background:#161616;"></div><div class="r" style="left:164.20px;top:26.00px;width:3.80px;height:457.00px;background:#388a34;"></div><div class="r" style="left:190.20px;top:29.07px;width:0.75px;height:8.30px;background:#585858;"></div><div class="r" style="left:203.45px;top:29.07px;width:0.75px;height:8.30px;background:#2e2e2e;"></div><div class="r" style="left:216.70px;top:29.07px;width:0.75px;height:8.30px;background:#2e2e2e;"></div><div class="r" style="left:190.20px;top:37.34px;width:0.75px;height:8.30px;background:#585858;"></div><div class="r" style="left:203.45px;top:37.34px;width:0.75px;height:8.30px;background:#2e2e2e;"></div><div class="r" style="left:216.70px;top:37.34px;width:0.75px;height:8.30px;background:#2e2e2e;"></div><div class="r" style="left:190.20px;top:45.61px;width:0.75px;height:8.30px;background:#585858;"></div><div class="r" style="left:203.45px;top:45.61px;width:0.75px;height:8.30px;background:#2e2e2e;"></div><div class="r" style="left:216.70px;top:45.61px;width:0.75px;height:8.30px;background:#2e2e2e;"></div><div class="r" style="left:190.20px;top:53.88px;width:0.75px;height:8.30px;background:#585858;"></div><div class="r" style="left:203.45px;top:53.88px;width:0.75px;height:8.30px;background:#2e2e2e;"></div><div class="r" style="left:216.70px;top:53.88px;width:0.75px;height:8.30px;background:#2e2e2e;"></div><div class="r" style="left:190.20px;top:62.15px;width:0.75px;height:8.30px;background:#585858;"></div><div class="r" style="left:203.45px;top:62.15px;width:0.75px;height:8.30px;background:#2e2e2e;"></div><div class="r" style="left:216.70px;top:62.15px;width:0.75px;height:8.30px;background:#2e2e2e;"></div><div class="r" style="left:190.20px;top:70.41px;width:0.75px;height:8.30px;background:#585858;"></div><div class="r" style="left:203.45px;top:70.41px;width:0.75px;height:8.30px;background:#2e2e2e;"></div><div class="r" style="left:216.70px;top:70.41px;width:0.75px;height:8.30px;background:#2e2e2e;"></div><div class="r" style="left:190.20px;top:78.68px;width:0.75px;height:8.30px;background:#585858;"></div><div class="r" style="left:203.45px;top:78.68px;width:0.75px;height:8.30px;background:#2e2e2e;"></div><div class="r" style="left:216.70px;top:78.68px;width:0.75px;height:8.30px;background:#2e2e2e;"></div><div class="t m" style="left:158.50px;top:29.20px;color:#858585;font-size:5.5px;font-weight:400;width:20px;text-align:right">46</div><div class="t m" style="left:190.20px;top:29.20px;color:#d4d4d4;font-size:5.52px;font-weight:400;">            bInside := <span style="color:#569cd6">TRUE</span>;</div><div class="t m" style="left:158.50px;top:37.47px;color:#858585;font-size:5.5px;font-weight:400;width:20px;text-align:right">47</div><div class="t m" style="left:190.20px;top:37.47px;color:#d4d4d4;font-size:5.52px;font-weight:400;">            bOutside := <span style="color:#569cd6">TRUE</span>;</div><div class="t m" style="left:158.50px;top:45.74px;color:#858585;font-size:5.5px;font-weight:400;width:20px;text-align:right">48</div><div class="t m" style="left:190.20px;top:45.74px;color:#d4d4d4;font-size:5.52px;font-weight:400;">            c.Execute<span style="color:#ffd700">(</span><span style="color:#ffd700">)</span>;</div><div class="t m" style="left:158.50px;top:54.01px;color:#858585;font-size:5.5px;font-weight:400;width:20px;text-align:right">49</div><div class="t m" style="left:190.20px;top:54.01px;color:#d4d4d4;font-size:5.52px;font-weight:400;">            bInside := <span style="color:#569cd6">FALSE</span>;</div><div class="t m" style="left:158.50px;top:62.28px;color:#858585;font-size:5.5px;font-weight:400;width:20px;text-align:right">50</div><div class="t m" style="left:190.20px;top:62.28px;color:#d4d4d4;font-size:5.52px;font-weight:400;">            bOutside := <span style="color:#569cd6">TRUE</span>;</div><div class="t m" style="left:158.50px;top:70.55px;color:#858585;font-size:5.5px;font-weight:400;width:20px;text-align:right">51</div><div class="t m" style="left:190.20px;top:70.55px;color:#d4d4d4;font-size:5.52px;font-weight:400;">            c.Execute<span style="color:#ffd700">(</span><span style="color:#ffd700">)</span>;</div><div class="t m" style="left:158.50px;top:78.82px;color:#858585;font-size:5.5px;font-weight:400;width:20px;text-align:right">52</div><div class="t m" style="left:190.20px;top:78.82px;color:#d4d4d4;font-size:5.52px;font-weight:400;">            bInside := <span style="color:#569cd6">FALSE</span>;</div><div class="r" style="left:733.00px;top:24.50px;width:13.44px;height:0.65px;background:#4d7fb0;opacity:.55"></div><div class="r" style="left:733.00px;top:25.45px;width:8.40px;height:0.65px;background:#4d7fb0;opacity:.55"></div><div class="r" style="left:735.00px;top:26.40px;width:8.40px;height:0.65px;background:#4d7fb0;opacity:.55"></div><div class="r" style="left:737.00px;top:27.35px;width:4.20px;height:0.65px;background:#4d7fb0;opacity:.55"></div><div class="r" style="left:739.00px;top:28.30px;width:12.18px;height:0.65px;background:#8a8a8a;opacity:.55"></div><div class="r" style="left:739.00px;top:29.25px;width:11.76px;height:0.65px;background:#8a8a8a;opacity:.55"></div><div class="r" style="left:739.00px;top:30.20px;width:5.04px;height:0.65px;background:#8a8a8a;opacity:.55"></div><div class="r" style="left:737.00px;top:31.15px;width:2.94px;height:0.65px;background:#4d7fb0;opacity:.55"></div><div class="r" style="left:737.00px;top:32.10px;width:1.26px;height:0.65px;background:#4d7fb0;opacity:.55"></div><div class="r" style="left:739.00px;top:33.05px;width:5.04px;height:0.65px;background:#8a8a8a;opacity:.55"></div><div class="r" style="left:739.00px;top:34.00px;width:10.92px;height:0.65px;background:#8a8a8a;opacity:.55"></div><div class="r" style="left:739.00px;top:34.95px;width:10.92px;height:0.65px;background:#8a8a8a;opacity:.55"></div><div class="r" style="left:737.00px;top:35.90px;width:2.94px;height:0.65px;background:#4d7fb0;opacity:.55"></div><div class="r" style="left:737.00px;top:36.85px;width:18.48px;height:0.65px;background:#4f7a45;opacity:.55"></div><div class="r" style="left:737.00px;top:37.80px;width:8.82px;height:0.65px;background:#4d7fb0;opacity:.55"></div><div class="r" style="left:739.00px;top:38.75px;width:33.60px;height:0.65px;background:#8a8a8a;opacity:.55"></div><div class="r" style="left:737.00px;top:39.70px;width:4.20px;height:0.65px;background:#4d7fb0;opacity:.55"></div><div class="r" style="left:737.00px;top:40.65px;width:21.00px;height:0.65px;background:#4f7a45;opacity:.55"></div><div class="r" style="left:737.00px;top:41.60px;width:18.06px;height:0.65px;background:#4d7fb0;opacity:.55"></div><div class="r" style="left:739.00px;top:42.55px;width:16.38px;height:0.65px;background:#8a8a8a;opacity:.55"></div><div class="r" style="left:737.00px;top:43.50px;width:4.20px;height:0.65px;background:#4d7fb0;opacity:.55"></div><div class="r" style="left:737.00px;top:44.45px;width:28.98px;height:0.65px;background:#4f7a45;opacity:.55"></div><div class="r" style="left:737.00px;top:45.40px;width:9.24px;height:0.65px;background:#4d7fb0;opacity:.55"></div><div class="r" style="left:739.00px;top:46.35px;width:3.78px;height:0.65px;background:#4d7fb0;opacity:.55"></div><div class="r" style="left:741.00px;top:47.30px;width:6.72px;height:0.65px;background:#8a8a8a;opacity:.55"></div><div class="r" style="left:739.00px;top:48.25px;width:2.94px;height:0.65px;background:#4d7fb0;opacity:.55"></div><div class="r" style="left:739.00px;top:49.20px;width:4.62px;height:0.65px;background:#8a8a8a;opacity:.55"></div><div class="r" style="left:741.00px;top:50.15px;width:6.72px;height:0.65px;background:#8a8a8a;opacity:.55"></div><div class="r" style="left:743.00px;top:51.10px;width:5.04px;height:0.65px;background:#8a8a8a;opacity:.55"></div><div class="r" style="left:743.00px;top:52.05px;width:12.60px;height:0.65px;background:#8a8a8a;opacity:.55"></div><div class="r" style="left:745.00px;top:53.00px;width:7.56px;height:0.65px;background:#8a8a8a;opacity:.55"></div><div class="r" style="left:743.00px;top:53.95px;width:2.94px;height:0.65px;background:#8a8a8a;opacity:.55"></div><div class="r" style="left:741.00px;top:54.90px;width:6.72px;height:0.65px;background:#8a8a8a;opacity:.55"></div><div class="r" style="left:743.00px;top:55.85px;width:5.88px;height:0.65px;background:#8a8a8a;opacity:.55"></div><div class="r" style="left:743.00px;top:56.80px;width:10.92px;height:0.65px;background:#8a8a8a;opacity:.55"></div><div class="r" style="left:745.00px;top:57.75px;width:5.46px;height:0.65px;background:#8a8a8a;opacity:.55"></div><div class="r" style="left:743.00px;top:58.70px;width:2.94px;height:0.65px;background:#8a8a8a;opacity:.55"></div><div class="r" style="left:739.00px;top:59.65px;width:3.78px;height:0.65px;background:#8a8a8a;opacity:.55"></div><div class="r" style="left:737.00px;top:60.60px;width:4.20px;height:0.65px;background:#4d7fb0;opacity:.55"></div><div class="r" style="left:737.00px;top:61.55px;width:21.42px;height:0.65px;background:#4f7a45;opacity:.55"></div><div class="r" style="left:737.00px;top:62.50px;width:18.06px;height:0.65px;background:#4d7fb0;opacity:.55"></div><div class="r" style="left:739.00px;top:63.45px;width:3.78px;height:0.65px;background:#4d7fb0;opacity:.55"></div><div class="r" style="left:741.00px;top:64.40px;width:4.62px;height:0.65px;background:#8a8a8a;opacity:.55"></div><div class="r" style="left:741.00px;top:65.35px;width:5.04px;height:0.65px;background:#8a8a8a;opacity:.55"></div><div class="r" style="left:739.00px;top:66.30px;width:2.94px;height:0.65px;background:#4d7fb0;opacity:.55"></div><div class="r" style="left:739.00px;top:67.25px;width:3.36px;height:0.65px;background:#4d7fb0;opacity:.55"></div><div class="r" style="left:741.00px;top:68.20px;width:10.92px;height:0.65px;background:#8a8a8a;opacity:.55"></div><div class="r" style="left:741.00px;top:69.15px;width:10.92px;height:0.65px;background:#8a8a8a;opacity:.55"></div><div class="r" style="left:739.00px;top:70.10px;width:2.94px;height:0.65px;background:#4d7fb0;opacity:.55"></div><div class="r" style="left:739.00px;top:71.05px;width:28.14px;height:0.65px;background:#8a8a8a;opacity:.55"></div><div class="r" style="left:739.00px;top:72.00px;width:15.96px;height:0.65px;background:#8a8a8a;opacity:.55"></div><div class="r" style="left:739.00px;top:72.95px;width:27.72px;height:0.65px;background:#8a8a8a;opacity:.55"></div><div class="r" style="left:739.00px;top:73.90px;width:15.54px;height:0.65px;background:#8a8a8a;opacity:.55"></div><div class="r" style="left:739.00px;top:74.85px;width:21.42px;height:0.65px;background:#8a8a8a;opacity:.55"></div><div class="r" style="left:741.00px;top:75.80px;width:14.28px;height:0.65px;background:#8a8a8a;opacity:.55"></div><div class="r" style="left:739.00px;top:76.75px;width:22.68px;height:0.65px;background:#8a8a8a;opacity:.55"></div><div class="r" style="left:741.00px;top:77.70px;width:14.28px;height:0.65px;background:#8a8a8a;opacity:.55"></div><div class="r" style="left:739.00px;top:78.65px;width:1.68px;height:0.65px;background:#8a8a8a;opacity:.55"></div><div class="r" style="left:741.00px;top:79.60px;width:13.86px;height:0.65px;background:#8a8a8a;opacity:.55"></div><div class="r" style="left:739.00px;top:80.55px;width:2.94px;height:0.65px;background:#8a8a8a;opacity:.55"></div><div class="r" style="left:737.00px;top:81.50px;width:4.20px;height:0.65px;background:#4d7fb0;opacity:.55"></div><div class="r" style="left:735.00px;top:82.45px;width:3.78px;height:0.65px;background:#4d7fb0;opacity:.55"></div><div class="r" style="left:733.00px;top:83.40px;width:5.46px;height:0.65px;background:#4d7fb0;opacity:.55"></div><div class="r" style="left:786.00px;top:26.00px;width:0.60px;height:400.00px;background:#2a2a2a;"></div><div class="r" style="left:0.00px;top:446.50px;width:793.00px;height:10.50px;background:#007acc;"></div><div class="r" style="left:0.00px;top:446.50px;width:15.00px;height:10.50px;background:#16825d;"></div><svg color="#ffffff" class="ic" style="left:4.00px;top:448.25px;width:7px;height:7px" viewBox="0 0 16 16" fill="none" stroke="#ffffff" stroke-width="1.3" stroke-linecap="round" stroke-linejoin="round"><path d="M4 12l3-3M9 7l3-3M5.5 5.5l5 5"/></svg><svg color="#ffffff" class="ic" style="left:16.50px;top:448.25px;width:7px;height:7px" viewBox="0 0 16 16" fill="none" stroke="#ffffff" stroke-width="1.2" stroke-linecap="round" stroke-linejoin="round"><circle cx="5" cy="3.5" r="1.5"/><circle cx="5" cy="12.5" r="1.5"/><circle cx="11" cy="5.5" r="1.5"/><path d="M5 5v6M11 7c0 3-6 2-6 4"/></svg><div class="t s" style="left:25.00px;top:447.75px;color:#ffffff;font-size:5.6px;font-weight:400;">SIMATIC_AX*+</div><svg color="#ffffff" class="ic" style="left:66.50px;top:448.25px;width:7px;height:7px" viewBox="0 0 16 16" fill="none" stroke="#ffffff" stroke-width="1.2" stroke-linecap="round" stroke-linejoin="round"><path d="M3 8a5 5 0 0 1 9-3M13 8a5 5 0 0 1-9 3"/><path d="M12 2v3H9M4 14v-3h3"/></svg><svg color="#ffffff" class="ic" style="left:79.00px;top:448.25px;width:7px;height:7px" viewBox="0 0 16 16" fill="none" stroke="#ffffff" stroke-width="1.2" stroke-linecap="round" stroke-linejoin="round"><path d="M3 4h10M3 8h7M3 12h10"/><path d="M11 6l2 2-2 2"/></svg><div class="bd"></div></div><div class="w" style="left:287.5px;top:275px;z-index:4"><div class="r" style="left:0.00px;top:0.00px;width:21.50px;height:445.70px;background:#2c2c2c;"></div><div class="r" style="left:21.50px;top:0.00px;width:138.00px;height:445.70px;background:#252526;"></div><svg color="#858585" class="ic" style="left:4.75px;top:2.50px;width:10px;height:10px" viewBox="0 0 16 16" fill="none" stroke="#858585" stroke-width="1.0" stroke-linecap="round" stroke-linejoin="round"><path d="M3 4.5h10M3 8h10M3 11.5h10"/></svg><svg class="ic" style="left:4.25px;top:20.50px;width:11px;height:11px" viewBox="0 0 24 24" fill="#e8e8e8"><path d="M17.5 0h-9L7 1.5V6H2.5L1 7.5v15.07L2.5 24h12.07L16 22.57V18h4.7l1.3-1.43V4.5L17.5 0zm0 2.12l2.38 2.38H17.5V2.12zm-3 20.38h-12v-15H7v9.07L8.5 18h6v4.5zm6-6h-12v-15H16V6h4.5v10.5z"/></svg><svg color="#858585" class="ic" style="left:3.50px;top:41.75px;width:12.5px;height:12.5px" viewBox="0 0 16 16" fill="none" stroke="#858585" stroke-width="1.1" stroke-linecap="round" stroke-linejoin="round"><circle cx="9.5" cy="6.5" r="4"/><path d="M6.6 9.4L2.5 13.5"/></svg><svg color="#858585" class="ic" style="left:3.50px;top:63.75px;width:12.5px;height:12.5px" viewBox="0 0 16 16" fill="none" stroke="#858585" stroke-width="1.1" stroke-linecap="round" stroke-linejoin="round"><circle cx="8" cy="8" r="5.8"/><path d="M6 4.5l2.5 3.5-2.5 3.5"/><circle cx="10.5" cy="11" r="2"/></svg><svg class="ic" style="left:4.25px;top:86.50px;width:11px;height:11px" viewBox="0 0 24 24" fill="#858585"><path d="M13.5 1.5L15 0h7.5L24 1.5V9l-1.5 1.5H15L13.5 9V1.5zm1.5 0V9h7.5V1.5H15zM0 15V6l1.5-1.5H9L10.5 6v7.5H18l1.5 1.5v7.5L18 24H1.5L0 22.5V15zm9-1.5V6H1.5v7.5H9zM9 15H1.5v7.5H9V15zm1.5 7.5H18V15h-7.5v7.5z"/></svg><svg color="#858585" class="ic" style="left:3.50px;top:107.75px;width:12.5px;height:12.5px" viewBox="0 0 16 16" fill="none" stroke="#858585" stroke-width="1.1" stroke-linecap="round" stroke-linejoin="round"><circle cx="8" cy="8" r="5.8"/><path d="M6.5 4.5l3.5 3.5-3.5 3.5"/></svg><svg class="ic" style="left:4.25px;top:130.50px;width:11px;height:11px" viewBox="0 0 24 24" fill="#858585"><path d="M21.007 8.222A3.738 3.738 0 0 0 15.045 5.2a3.737 3.737 0 0 0 1.156 6.583 2.988 2.988 0 0 1-2.668 1.67h-2.99a4.456 4.456 0 0 0-2.989 1.165V7.4a3.737 3.737 0 1 0-1.494 0v9.117a3.776 3.776 0 1 0 1.816.099 2.99 2.99 0 0 1 2.668-1.667h2.99a4.484 4.484 0 0 0 4.223-3.039 3.736 3.736 0 0 0 3.25-3.687zM4.565 3.738a2.242 2.242 0 1 1 4.484 0 2.242 2.242 0 0 1-4.484 0zm4.484 16.441a2.242 2.242 0 1 1-4.484 0 2.242 2.242 0 0 1 4.484 0zm8.221-9.715a2.242 2.242 0 1 1 0-4.485 2.242 2.242 0 0 1 0 4.485z"/></svg><svg color="#858585" class="ic" style="left:3.50px;top:151.75px;width:12.5px;height:12.5px" viewBox="0 0 16 16" fill="none" stroke="#858585" stroke-width="1.1" stroke-linecap="round" stroke-linejoin="round"><path d="M6 2h4M6.5 2v4.5L3 13.5h10L9.5 6.5V2"/><path d="M4.5 10.5h7"/></svg><svg class="ic" style="left:4.25px;top:174.50px;width:11px;height:11px" viewBox="0 0 24 24" fill="#858585"><path d="M10.94 13.5l-1.32 1.32a3.73 3.73 0 0 0-7.24 0L1.06 13.5 0 14.56l1.72 1.72-.22.22V18H0v1.5h1.5v.08c.077.489.214.966.41 1.42L0 22.94 1.06 24l1.65-1.65A4.308 4.308 0 0 0 6 24a4.31 4.31 0 0 0 3.29-1.65L10.94 24 12 22.94 10.09 21c.198-.464.336-.951.41-1.45v-.1H12V18h-1.5v-1.5l-.22-.22L12 14.56l-1.06-1.06zM6 13.5a2.250 2.250 0 0 1 2.25 2.25h-4.5A2.250 2.250 0 0 1 6 13.5zm3 6a3.330 3.330 0 0 1-3 3 3.330 3.330 0 0 1-3-3v-2.25h6v2.25zm14.76-9.9v1.26L13.5 17.37V15.6l8.45-5.37L9 2v9.46a5.070 5.070 0 0 0-1.5-.72V.63L8.64 0l15.12 9.6z"/></svg><svg color="#858585" class="ic" style="left:3.50px;top:195.75px;width:12.5px;height:12.5px" viewBox="0 0 16 16" fill="none" stroke="#858585" stroke-width="1.1" stroke-linecap="round" stroke-linejoin="round"><path d="M8 2l5.5 3v6L8 14l-5.5-3V5z"/><path d="M2.5 5L8 8l5.5-3M8 8v6"/></svg><svg color="#858585" class="ic" style="left:3.50px;top:217.75px;width:12.5px;height:12.5px" viewBox="0 0 16 16" fill="none" stroke="#858585" stroke-width="1.1" stroke-linecap="round" stroke-linejoin="round"><path d="M2.5 2.5h11v11h-11z"/><path d="M3 3h4.5v10H3z" fill="currentColor" stroke="none"/><path d="M10 5v6"/></svg><svg color="#858585" class="ic" style="left:3.50px;top:239.75px;width:12.5px;height:12.5px" viewBox="0 0 16 16" fill="none" stroke="#858585" stroke-width="1.1" stroke-linecap="round" stroke-linejoin="round"><path d="M2.5 2.5v11h11"/><path d="M4.5 11l3-4 2.5 2 3.5-5"/></svg><div class="r" style="left:12.15px;top:135.90px;width:7.20px;height:7.20px;background:#1a85ff;border-radius:50%"></div><div class="t s" style="left:14.55px;top:135.60px;color:#ffffff;font-size:4.5px;font-weight:400;">2</div><svg color="#858585" class="ic" style="left:3.75px;top:405.70px;width:13px;height:13px" viewBox="0 0 16 16" fill="none" stroke="#858585" stroke-width="1.0" stroke-linecap="round" stroke-linejoin="round"><circle cx="8" cy="8" r="6"/><circle cx="8" cy="6.5" r="2.2"/><path d="M4.2 12.2c1-2 6.6-2 7.6 0"/></svg><svg color="#858585" class="ic" style="left:3.75px;top:428.70px;width:13px;height:13px" viewBox="0 0 16 16" fill="none" stroke="#858585" stroke-width="1.0" stroke-linecap="round" stroke-linejoin="round"><circle cx="8" cy="8" r="2"/><path d="M8 1.8l1.1 1.6 1.9-.5.5 1.9 1.9.6-.5 1.9 1.3 1.3-1.3 1.3.5 1.9-1.9.6-.5 1.9-1.9-.5L8 14.2l-1.1-1.6-1.9.5-.5-1.9-1.9-.6.5-1.9L1.8 8l1.3-1.3-.5-1.9 1.9-.6.5-1.9 1.9.5z"/></svg><div class="t s" style="left:29.80px;top:4.60px;color:#bbbbbb;font-size:4.95px;font-weight:400;">EXPLORER</div><svg color="#9a9a9a" class="ic" style="left:145.00px;top:4.20px;width:8px;height:8px" viewBox="0 0 16 16" fill="none" stroke="#9a9a9a" stroke-width="1.2" stroke-linecap="round" stroke-linejoin="round"><circle cx="3" cy="8" r=".55" fill="currentColor"/><circle cx="8" cy="8" r=".55" fill="currentColor"/><circle cx="13" cy="8" r=".55" fill="currentColor"/></svg><svg color="#c5c5c5" class="ic" style="left:23.00px;top:17.60px;width:6px;height:6px" viewBox="0 0 16 16" fill="none" stroke="#c5c5c5" stroke-width="1.5" stroke-linecap="round" stroke-linejoin="round"><path d="M4 6l4 4 4-4"/></svg><div class="t s" style="left:30.00px;top:16.60px;color:#cccccc;font-size:5.1px;font-weight:700;">PROJECT</div><svg color="#c5c5c5" class="ic" style="left:115.50px;top:16.60px;width:8px;height:8px" viewBox="0 0 16 16" fill="none" stroke="#c5c5c5" stroke-width="1.2" stroke-linecap="round" stroke-linejoin="round"><path d="M3 2h6l3 3v9H3z"/><path d="M9 2v3h3"/><path d="M12 10v4M10 12h4"/></svg><svg color="#c5c5c5" class="ic" style="left:126.50px;top:16.60px;width:8px;height:8px" viewBox="0 0 16 16" fill="none" stroke="#c5c5c5" stroke-width="1.2" stroke-linecap="round" stroke-linejoin="round"><path d="M1.5 4h4l1.5 1.5h7.5v8h-13z"/><path d="M11 9v3M9.5 10.5h3"/></svg><svg color="#c5c5c5" class="ic" style="left:137.50px;top:16.60px;width:8px;height:8px" viewBox="0 0 16 16" fill="none" stroke="#c5c5c5" stroke-width="1.2" stroke-linecap="round" stroke-linejoin="round"><path d="M13 8a5 5 0 1 1-1.5-3.6"/><path d="M12 1.5v3.2H8.8"/></svg><svg color="#c5c5c5" class="ic" style="left:148.50px;top:16.60px;width:8px;height:8px" viewBox="0 0 16 16" fill="none" stroke="#c5c5c5" stroke-width="1.2" stroke-linecap="round" stroke-linejoin="round"><path d="M3 3h10v10H3z"/><path d="M5.5 8h5"/></svg><svg color="#c5c5c5" class="ic" style="left:28.50px;top:27.00px;width:7px;height:7px" viewBox="0 0 16 16" fill="none" stroke="#c5c5c5" stroke-width="1.3" stroke-linecap="round" stroke-linejoin="round"><path d="M6 4l4 4-4 4"/></svg><div class="t s" style="left:36.50px;top:26.50px;color:#8b8b8b;font-size:6.2px;font-weight:400;">.apax</div><svg color="#c5c5c5" class="ic" style="left:28.50px;top:37.12px;width:7px;height:7px" viewBox="0 0 16 16" fill="none" stroke="#c5c5c5" stroke-width="1.3" stroke-linecap="round" stroke-linejoin="round"><path d="M6 4l4 4-4 4"/></svg><div class="t s" style="left:36.50px;top:36.62px;color:#cccccc;font-size:6.2px;font-weight:400;">.vscode</div><svg color="#c5c5c5" class="ic" style="left:28.50px;top:47.24px;width:7px;height:7px" viewBox="0 0 16 16" fill="none" stroke="#c5c5c5" stroke-width="1.3" stroke-linecap="round" stroke-linejoin="round"><path d="M6 4l4 4-4 4"/></svg><div class="t s" style="left:36.50px;top:46.74px;color:#8b8b8b;font-size:6.2px;font-weight:400;">bin</div><svg color="#c5c5c5" class="ic" style="left:28.50px;top:57.36px;width:7px;height:7px" viewBox="0 0 16 16" fill="none" stroke="#c5c5c5" stroke-width="1.3" stroke-linecap="round" stroke-linejoin="round"><path d="M4 6l4 4 4-4"/></svg><div class="t s" style="left:36.50px;top:56.86px;color:#cccccc;font-size:6.2px;font-weight:400;">img</div><svg color="#a074c4" class="ic" style="left:32.25px;top:67.73px;width:6.5px;height:6.5px" viewBox="0 0 16 16" fill="none" stroke="#a074c4" stroke-width="1.6" stroke-linecap="round" stroke-linejoin="round"><rect x="3" y="3" width="10" height="10" rx="2"/><circle cx="8" cy="8" r="2.2"/></svg><div class="t s" style="left:40.20px;top:66.98px;color:#cccccc;font-size:6.2px;font-weight:400;">CarPark.png</div><svg color="#a074c4" class="ic" style="left:32.25px;top:77.85px;width:6.5px;height:6.5px" viewBox="0 0 16 16" fill="none" stroke="#a074c4" stroke-width="1.6" stroke-linecap="round" stroke-linejoin="round"><rect x="3" y="3" width="10" height="10" rx="2"/><circle cx="8" cy="8" r="2.2"/></svg><div class="t s" style="left:40.20px;top:77.10px;color:#cccccc;font-size:6.2px;font-weight:400;">TieUsage.png</div><svg color="#c5c5c5" class="ic" style="left:28.50px;top:87.72px;width:7px;height:7px" viewBox="0 0 16 16" fill="none" stroke="#c5c5c5" stroke-width="1.3" stroke-linecap="round" stroke-linejoin="round"><path d="M6 4l4 4-4 4"/></svg><div class="t s" style="left:36.50px;top:87.22px;color:#8b8b8b;font-size:6.2px;font-weight:400;">obj</div><svg color="#c5c5c5" class="ic" style="left:28.50px;top:97.84px;width:7px;height:7px" viewBox="0 0 16 16" fill="none" stroke="#c5c5c5" stroke-width="1.3" stroke-linecap="round" stroke-linejoin="round"><path d="M6 4l4 4-4 4"/></svg><div class="t s" style="left:36.50px;top:97.34px;color:#cccccc;font-size:6.2px;font-weight:400;">snippets</div><svg color="#c5c5c5" class="ic" style="left:28.50px;top:107.96px;width:7px;height:7px" viewBox="0 0 16 16" fill="none" stroke="#c5c5c5" stroke-width="1.3" stroke-linecap="round" stroke-linejoin="round"><path d="M4 6l4 4 4-4"/></svg><div class="t s" style="left:36.50px;top:107.46px;color:#e2c08d;font-size:6.2px;font-weight:400;">src</div><div class="t s" style="left:146.00px;top:107.46px;color:#e2c08d;font-size:8px;font-weight:400;">•</div><svg color="#c5c5c5" class="ic" style="left:32.75px;top:118.83px;width:5.5px;height:5.5px" viewBox="0 0 16 16" fill="none" stroke="#c5c5c5" stroke-width="1.6" stroke-linecap="round" stroke-linejoin="round"><path d="M3 3.5h10M3 8h10M3 12.5h10"/></svg><div class="t s" style="left:40.20px;top:117.58px;color:#e2c08d;font-size:6.2px;font-weight:400;">Counter.st</div><div class="t s" style="left:146.50px;top:117.58px;color:#e2c08d;font-size:5.5px;font-weight:400;">M</div><div class="r" style="left:21.50px;top:126.70px;width:138.00px;height:10.10px;background:#04395e;box-shadow:inset 0 0 0 0.6px #0e639c"></div><svg color="#c5c5c5" class="ic" style="left:32.75px;top:128.95px;width:5.5px;height:5.5px" viewBox="0 0 16 16" fill="none" stroke="#c5c5c5" stroke-width="1.6" stroke-linecap="round" stroke-linejoin="round"><path d="M3 3.5h10M3 8h10M3 12.5h10"/></svg><div class="t s" style="left:40.20px;top:127.70px;color:#ffffff;font-size:6.2px;font-weight:400;">ParkingCounter.st</div><svg color="#c5c5c5" class="ic" style="left:28.50px;top:138.32px;width:7px;height:7px" viewBox="0 0 16 16" fill="none" stroke="#c5c5c5" stroke-width="1.3" stroke-linecap="round" stroke-linejoin="round"><path d="M4 6l4 4 4-4"/></svg><div class="t s" style="left:36.50px;top:137.82px;color:#73c991;font-size:6.2px;font-weight:400;">test</div><div class="t s" style="left:146.00px;top:137.82px;color:#73c991;font-size:8px;font-weight:400;">•</div><svg color="#c5c5c5" class="ic" style="left:32.75px;top:149.19px;width:5.5px;height:5.5px" viewBox="0 0 16 16" fill="none" stroke="#c5c5c5" stroke-width="1.6" stroke-linecap="round" stroke-linejoin="round"><path d="M3 3.5h10M3 8h10M3 12.5h10"/></svg><div class="t s" style="left:40.20px;top:147.94px;color:#73c991;font-size:6.2px;font-weight:400;">ICounter.st</div><div class="t s" style="left:146.50px;top:147.94px;color:#73c991;font-size:5.5px;font-weight:400;">U</div><svg color="#c5c5c5" class="ic" style="left:32.75px;top:159.31px;width:5.5px;height:5.5px" viewBox="0 0 16 16" fill="none" stroke="#c5c5c5" stroke-width="1.6" stroke-linecap="round" stroke-linejoin="round"><path d="M3 3.5h10M3 8h10M3 12.5h10"/></svg><div class="t s" style="left:40.20px;top:158.06px;color:#73c991;font-size:6.2px;font-weight:400;">ParkingCounterWrapper.st</div><div class="t s" style="left:146.50px;top:158.06px;color:#73c991;font-size:5.5px;font-weight:400;">U</div><svg color="#c5c5c5" class="ic" style="left:32.75px;top:169.43px;width:5.5px;height:5.5px" viewBox="0 0 16 16" fill="none" stroke="#c5c5c5" stroke-width="1.6" stroke-linecap="round" stroke-linejoin="round"><path d="M3 3.5h10M3 8h10M3 12.5h10"/></svg><div class="t s" style="left:40.20px;top:168.18px;color:#cccccc;font-size:6.2px;font-weight:400;">TestCounter.st</div><svg color="#c5c5c5" class="ic" style="left:32.75px;top:179.55px;width:5.5px;height:5.5px" viewBox="0 0 16 16" fill="none" stroke="#c5c5c5" stroke-width="1.6" stroke-linecap="round" stroke-linejoin="round"><path d="M3 3.5h10M3 8h10M3 12.5h10"/></svg><div class="t s" style="left:40.20px;top:178.30px;color:#cccccc;font-size:6.2px;font-weight:400;">TestParkingCounter.st</div><svg color="#c5c5c5" class="ic" style="left:32.75px;top:189.67px;width:5.5px;height:5.5px" viewBox="0 0 16 16" fill="none" stroke="#c5c5c5" stroke-width="1.6" stroke-linecap="round" stroke-linejoin="round"><path d="M3 3.5h10M3 8h10M3 12.5h10"/></svg><div class="t s" style="left:40.20px;top:188.42px;color:#cccccc;font-size:6.2px;font-weight:400;">TestParkingCounterFB.st</div><svg color="#c5c5c5" class="ic" style="left:28.50px;top:199.04px;width:7px;height:7px" viewBox="0 0 16 16" fill="none" stroke="#c5c5c5" stroke-width="1.3" stroke-linecap="round" stroke-linejoin="round"><path d="M6 4l4 4-4 4"/></svg><div class="t s" style="left:36.50px;top:198.54px;color:#8b8b8b;font-size:6.2px;font-weight:400;">testresult</div><svg color="#41535b" class="ic" style="left:29.75px;top:209.91px;width:5.5px;height:5.5px" viewBox="0 0 16 16" fill="none" stroke="#41535b" stroke-width="1" stroke-linecap="round" stroke-linejoin="round"><path d="M8 2l6 6-6 6-6-6z" fill="currentColor"/></svg><div class="t s" style="left:36.30px;top:208.66px;color:#cccccc;font-size:6.2px;font-weight:400;">.gitignore</div><div class="t s" style="left:29.50px;top:218.78px;color:#cbcb41;font-size:5.5px;font-weight:700;">{}</div><div class="t s" style="left:36.30px;top:218.78px;color:#73c991;font-size:6.2px;font-weight:400;">apax-lock.json</div><div class="t s" style="left:146.50px;top:218.78px;color:#73c991;font-size:5.5px;font-weight:400;">A</div><svg color="#a074c4" class="ic" style="left:29.25px;top:229.65px;width:6.5px;height:6.5px" viewBox="0 0 16 16" fill="none" stroke="#a074c4" stroke-width="1.8" stroke-linecap="round" stroke-linejoin="round"><path d="M8 3v7M8 12.5v.5"/></svg><div class="t s" style="left:36.30px;top:228.90px;color:#e2c08d;font-size:6.2px;font-weight:400;">apax.yml</div><div class="t s" style="left:146.50px;top:228.90px;color:#e2c08d;font-size:5.5px;font-weight:400;">M</div><svg color="#cbcb41" class="ic" style="left:29.25px;top:239.77px;width:6.5px;height:6.5px" viewBox="0 0 16 16" fill="none" stroke="#cbcb41" stroke-width="1" stroke-linecap="round" stroke-linejoin="round"><circle cx="8" cy="6" r="3.5" fill="currentColor"/><path d="M5.5 9l-1.5 6 4-2 4 2-1.5-6" fill="currentColor"/></svg><div class="t s" style="left:36.30px;top:239.02px;color:#cccccc;font-size:6.2px;font-weight:400;">LICENSE.md</div><svg color="#519aba" class="ic" style="left:29.25px;top:249.89px;width:6.5px;height:6.5px" viewBox="0 0 16 16" fill="none" stroke="#519aba" stroke-width="1.5" stroke-linecap="round" stroke-linejoin="round"><circle cx="8" cy="8" r="5.5"/><path d="M8 7v4M8 5v.3"/></svg><div class="t s" style="left:36.30px;top:249.14px;color:#cccccc;font-size:6.2px;font-weight:400;">README.md</div><div class="r" style="left:21.50px;top:416.20px;width:138.00px;height:0.70px;background:#3a3a3a;"></div><svg color="#c5c5c5" class="ic" style="left:22.50px;top:417.90px;width:7px;height:7px" viewBox="0 0 16 16" fill="none" stroke="#c5c5c5" stroke-width="1.3" stroke-linecap="round" stroke-linejoin="round"><path d="M6 4l4 4-4 4"/></svg><div class="t s" style="left:30.40px;top:417.40px;color:#cccccc;font-size:4.95px;font-weight:700;">OUTLINE</div><div class="r" style="left:21.50px;top:426.40px;width:138.00px;height:0.70px;background:#3a3a3a;"></div><svg color="#c5c5c5" class="ic" style="left:22.50px;top:428.10px;width:7px;height:7px" viewBox="0 0 16 16" fill="none" stroke="#c5c5c5" stroke-width="1.3" stroke-linecap="round" stroke-linejoin="round"><path d="M6 4l4 4-4 4"/></svg><div class="t s" style="left:30.40px;top:427.60px;color:#cccccc;font-size:4.95px;font-weight:700;">TIMELINE</div><div class="r" style="left:21.50px;top:436.60px;width:138.00px;height:0.70px;background:#3a3a3a;"></div><svg color="#c5c5c5" class="ic" style="left:22.50px;top:438.30px;width:7px;height:7px" viewBox="0 0 16 16" fill="none" stroke="#c5c5c5" stroke-width="1.3" stroke-linecap="round" stroke-linejoin="round"><path d="M6 4l4 4-4 4"/></svg><div class="t s" style="left:30.40px;top:437.80px;color:#cccccc;font-size:4.95px;font-weight:700;">VS CODE PETS</div><div class="r" style="left:159.50px;top:0.00px;width:633.50px;height:445.70px;background:#1f1f1f;"></div><div class="r" style="left:159.50px;top:0.00px;width:633.50px;height:16.00px;background:#252526;"></div><div class="r" style="left:159.50px;top:0.00px;width:62.30px;height:16.00px;background:#2d2d2d;"></div><svg color="#a074c4" class="ic" style="left:163.75px;top:4.75px;width:6.5px;height:6.5px" viewBox="0 0 16 16" fill="none" stroke="#a074c4" stroke-width="1.6" stroke-linecap="round" stroke-linejoin="round"><rect x="3" y="3" width="10" height="10" rx="2"/><circle cx="8" cy="8" r="2.2"/></svg><div class="t s" style="left:172.30px;top:4.00px;color:#8b8b8b;font-size:6.2px;font-weight:400;">CarPark.png</div><div class="r" style="left:222.50px;top:0.00px;width:63.30px;height:16.00px;background:#2d2d2d;"></div><svg color="#c5c5c5" class="ic" style="left:227.25px;top:5.25px;width:5.5px;height:5.5px" viewBox="0 0 16 16" fill="none" stroke="#c5c5c5" stroke-width="1.6" stroke-linecap="round" stroke-linejoin="round"><path d="M3 3.5h10M3 8h10M3 12.5h10"/></svg><div class="t s" style="left:235.30px;top:4.00px;color:#e2c08d;font-size:6.2px;font-weight:400;">Counter.st  <span style="font-size:5.5px">M</span></div><div class="r" style="left:286.50px;top:0.00px;width:77.30px;height:16.00px;background:#1f1f1f;"></div><svg color="#c5c5c5" class="ic" style="left:291.25px;top:5.25px;width:5.5px;height:5.5px" viewBox="0 0 16 16" fill="none" stroke="#c5c5c5" stroke-width="1.6" stroke-linecap="round" stroke-linejoin="round"><path d="M3 3.5h10M3 8h10M3 12.5h10"/></svg><div class="t s" style="left:299.30px;top:4.00px;color:#ffffff;font-size:6.2px;font-weight:400;">ParkingCounter.st</div><svg color="#cccccc" class="ic" style="left:353.75px;top:5.25px;width:5.5px;height:5.5px" viewBox="0 0 16 16" fill="none" stroke="#cccccc" stroke-width="1.6" stroke-linecap="round" stroke-linejoin="round"><path d="M4 4l8 8M12 4l-8 8"/></svg><div class="r" style="left:364.50px;top:0.00px;width:84.30px;height:16.00px;background:#2d2d2d;"></div><svg color="#c5c5c5" class="ic" style="left:369.25px;top:5.25px;width:5.5px;height:5.5px" viewBox="0 0 16 16" fill="none" stroke="#c5c5c5" stroke-width="1.6" stroke-linecap="round" stroke-linejoin="round"><path d="M3 3.5h10M3 8h10M3 12.5h10"/></svg><div class="t s" style="left:377.30px;top:4.00px;color:#8b8b8b;font-size:6.2px;font-weight:400;">TestParkingCounter.st</div><div class="r" style="left:449.50px;top:0.00px;width:60.30px;height:16.00px;background:#2d2d2d;"></div><svg color="#a074c4" class="ic" style="left:453.75px;top:4.75px;width:6.5px;height:6.5px" viewBox="0 0 16 16" fill="none" stroke="#a074c4" stroke-width="1.8" stroke-linecap="round" stroke-linejoin="round"><path d="M8 3v7M8 12.5v.5"/></svg><div class="t s" style="left:462.30px;top:4.00px;color:#e2c08d;font-size:6.2px;font-weight:400;">apax.yml  <span style="font-size:5.5px">M</span></div><svg color="#d8d8d8" class="ic" style="left:705.75px;top:3.35px;width:8.5px;height:8.5px" viewBox="0 0 16 16" fill="none" stroke="#d8d8d8" stroke-width="1.4" stroke-linecap="round" stroke-linejoin="round"><path d="M2.5 2.5h6v6h-6zM9.5 7.5l4 3-4 3z" fill="currentColor"/></svg><svg color="#d8d8d8" class="ic" style="left:717.80px;top:3.35px;width:8.5px;height:8.5px" viewBox="0 0 16 16" fill="none" stroke="#d8d8d8" stroke-width="1.4" stroke-linecap="round" stroke-linejoin="round"><path d="M6 5L3 8l3 3"/><circle cx="10.5" cy="8" r="3"/></svg><svg color="#6a6a6a" class="ic" style="left:729.85px;top:3.35px;width:8.5px;height:8.5px" viewBox="0 0 16 16" fill="none" stroke="#6a6a6a" stroke-width="1.4" stroke-linecap="round" stroke-linejoin="round"><path d="M10 4L6 8l4 4"/><path d="M6 8h7"/></svg><svg color="#6a6a6a" class="ic" style="left:741.90px;top:3.35px;width:8.5px;height:8.5px" viewBox="0 0 16 16" fill="none" stroke="#6a6a6a" stroke-width="1.4" stroke-linecap="round" stroke-linejoin="round"><path d="M6 4l4 4-4 4"/><path d="M3 8h7"/></svg><svg color="#d8d8d8" class="ic" style="left:753.95px;top:3.35px;width:8.5px;height:8.5px" viewBox="0 0 16 16" fill="none" stroke="#d8d8d8" stroke-width="1.4" stroke-linecap="round" stroke-linejoin="round"><circle cx="8" cy="8" r="5.8"/><path d="M8 3v10M4 8h8"/></svg><svg color="#d8d8d8" class="ic" style="left:766.00px;top:3.35px;width:8.5px;height:8.5px" viewBox="0 0 16 16" fill="none" stroke="#d8d8d8" stroke-width="1.4" stroke-linecap="round" stroke-linejoin="round"><path d="M2.5 2.5h11v11h-11zM8 2.5v11"/></svg><svg color="#9a9a9a" class="ic" style="left:778.05px;top:3.35px;width:8.5px;height:8.5px" viewBox="0 0 16 16" fill="none" stroke="#9a9a9a" stroke-width="1.4" stroke-linecap="round" stroke-linejoin="round"><circle cx="3" cy="8" r=".55" fill="currentColor"/><circle cx="8" cy="8" r=".55" fill="currentColor"/><circle cx="13" cy="8" r=".55" fill="currentColor"/></svg><div class="t s" style="left:166.10px;top:17.00px;color:#a9a9a9;font-size:6.2px;font-weight:400;">src<span style="font-size:6px;margin:0 5.5px 0 2.2px">›</span><span style="color:#c5c5c5;font-size:5.6px;margin-right:3px">≡</span>ParkingCounter.st<span style="font-size:6px;margin:0 5.5px 0 2.2px">›</span><span style="color:#c5c5c5;font-size:5.6px;margin-right:3px">{}</span>Siemens<span style="font-size:6px;margin:0 5.5px 0 2.2px">›</span><span style="color:#c5c5c5;font-size:5.6px;margin-right:3px">{}</span>Ax<span style="font-size:6px;margin:0 5.5px 0 2.2px">›</span><span style="color:#c5c5c5;font-size:5.6px;margin-right:3px">{}</span>ExampleLibrary</div><div class="r" style="left:159.50px;top:26.00px;width:633.50px;height:1.30px;background:#161616;"></div><div class="r" style="left:189.00px;top:27.77px;width:0.75px;height:8.30px;background:#585858;"></div><div class="r" style="left:189.00px;top:36.04px;width:0.75px;height:8.30px;background:#585858;"></div><div class="r" style="left:202.25px;top:36.04px;width:0.75px;height:8.30px;background:#2e2e2e;"></div><div class="r" style="left:189.00px;top:44.30px;width:0.75px;height:8.30px;background:#585858;"></div><div class="r" style="left:202.25px;top:44.30px;width:0.75px;height:8.30px;background:#2e2e2e;"></div><div class="r" style="left:215.50px;top:44.30px;width:0.75px;height:8.30px;background:#2e2e2e;"></div><div class="r" style="left:189.00px;top:52.57px;width:0.75px;height:8.30px;background:#585858;"></div><div class="r" style="left:202.25px;top:52.57px;width:0.75px;height:8.30px;background:#2e2e2e;"></div><div class="r" style="left:215.50px;top:52.57px;width:0.75px;height:8.30px;background:#2e2e2e;"></div><div class="r" style="left:189.00px;top:60.85px;width:0.75px;height:8.30px;background:#585858;"></div><div class="r" style="left:202.25px;top:60.85px;width:0.75px;height:8.30px;background:#2e2e2e;"></div><div class="r" style="left:215.50px;top:60.85px;width:0.75px;height:8.30px;background:#2e2e2e;"></div><div class="r" style="left:189.00px;top:69.11px;width:0.75px;height:8.30px;background:#585858;"></div><div class="r" style="left:202.25px;top:69.11px;width:0.75px;height:8.30px;background:#2e2e2e;"></div><div class="r" style="left:189.00px;top:77.38px;width:0.75px;height:8.30px;background:#585858;"></div><div class="r" style="left:202.25px;top:77.38px;width:0.75px;height:8.30px;background:#2e2e2e;"></div><div class="r" style="left:189.00px;top:85.66px;width:0.75px;height:8.30px;background:#585858;"></div><div class="r" style="left:202.25px;top:85.66px;width:0.75px;height:8.30px;background:#2e2e2e;"></div><div class="r" style="left:215.50px;top:85.66px;width:0.75px;height:8.30px;background:#2e2e2e;"></div><div class="r" style="left:189.00px;top:93.92px;width:0.75px;height:8.30px;background:#585858;"></div><div class="r" style="left:202.25px;top:93.92px;width:0.75px;height:8.30px;background:#2e2e2e;"></div><div class="r" style="left:215.50px;top:93.92px;width:0.75px;height:8.30px;background:#2e2e2e;"></div><div class="r" style="left:189.00px;top:102.19px;width:0.75px;height:8.30px;background:#585858;"></div><div class="r" style="left:202.25px;top:102.19px;width:0.75px;height:8.30px;background:#2e2e2e;"></div><div class="r" style="left:215.50px;top:102.19px;width:0.75px;height:8.30px;background:#2e2e2e;"></div><div class="r" style="left:189.00px;top:110.46px;width:0.75px;height:8.30px;background:#585858;"></div><div class="r" style="left:202.25px;top:110.46px;width:0.75px;height:8.30px;background:#2e2e2e;"></div><div class="r" style="left:189.00px;top:118.73px;width:0.75px;height:8.30px;background:#585858;"></div><div class="r" style="left:202.25px;top:118.73px;width:0.75px;height:8.30px;background:#2e2e2e;"></div><div class="r" style="left:189.00px;top:127.01px;width:0.75px;height:8.30px;background:#585858;"></div><div class="r" style="left:202.25px;top:127.01px;width:0.75px;height:8.30px;background:#2e2e2e;"></div><div class="r" style="left:189.00px;top:135.28px;width:0.75px;height:8.30px;background:#585858;"></div><div class="r" style="left:202.25px;top:135.28px;width:0.75px;height:8.30px;background:#2e2e2e;"></div><div class="r" style="left:215.50px;top:135.28px;width:0.75px;height:8.30px;background:#2e2e2e;"></div><div class="r" style="left:189.00px;top:143.55px;width:0.75px;height:8.30px;background:#585858;"></div><div class="r" style="left:202.25px;top:143.55px;width:0.75px;height:8.30px;background:#2e2e2e;"></div><div class="r" style="left:189.00px;top:151.82px;width:0.75px;height:8.30px;background:#585858;"></div><div class="r" style="left:202.25px;top:151.82px;width:0.75px;height:8.30px;background:#2e2e2e;"></div><div class="r" style="left:189.00px;top:160.09px;width:0.75px;height:8.30px;background:#585858;"></div><div class="r" style="left:202.25px;top:160.09px;width:0.75px;height:8.30px;background:#2e2e2e;"></div><div class="r" style="left:189.00px;top:168.36px;width:0.75px;height:8.30px;background:#585858;"></div><div class="r" style="left:202.25px;top:168.36px;width:0.75px;height:8.30px;background:#2e2e2e;"></div><div class="r" style="left:215.50px;top:168.36px;width:0.75px;height:8.30px;background:#2e2e2e;"></div><div class="r" style="left:189.00px;top:176.62px;width:0.75px;height:8.30px;background:#585858;"></div><div class="r" style="left:202.25px;top:176.62px;width:0.75px;height:8.30px;background:#2e2e2e;"></div><div class="r" style="left:189.00px;top:184.90px;width:0.75px;height:8.30px;background:#585858;"></div><div class="r" style="left:202.25px;top:184.90px;width:0.75px;height:8.30px;background:#2e2e2e;"></div><div class="r" style="left:189.00px;top:193.16px;width:0.75px;height:8.30px;background:#585858;"></div><div class="r" style="left:202.25px;top:193.16px;width:0.75px;height:8.30px;background:#2e2e2e;"></div><div class="r" style="left:189.00px;top:201.44px;width:0.75px;height:8.30px;background:#585858;"></div><div class="r" style="left:202.25px;top:201.44px;width:0.75px;height:8.30px;background:#2e2e2e;"></div><div class="r" style="left:215.50px;top:201.44px;width:0.75px;height:8.30px;background:#2e2e2e;"></div><div class="r" style="left:189.00px;top:209.71px;width:0.75px;height:8.30px;background:#585858;"></div><div class="r" style="left:202.25px;top:209.71px;width:0.75px;height:8.30px;background:#2e2e2e;"></div><div class="r" style="left:215.50px;top:209.71px;width:0.75px;height:8.30px;background:#2e2e2e;"></div><div class="r" style="left:228.74px;top:209.71px;width:0.75px;height:8.30px;background:#2e2e2e;"></div><div class="r" style="left:189.00px;top:217.97px;width:0.75px;height:8.30px;background:#585858;"></div><div class="r" style="left:202.25px;top:217.97px;width:0.75px;height:8.30px;background:#2e2e2e;"></div><div class="r" style="left:215.50px;top:217.97px;width:0.75px;height:8.30px;background:#2e2e2e;"></div><div class="r" style="left:189.00px;top:226.25px;width:0.75px;height:8.30px;background:#585858;"></div><div class="r" style="left:202.25px;top:226.25px;width:0.75px;height:8.30px;background:#2e2e2e;"></div><div class="r" style="left:215.50px;top:226.25px;width:0.75px;height:8.30px;background:#2e2e2e;"></div><div class="r" style="left:189.00px;top:234.52px;width:0.75px;height:8.30px;background:#585858;"></div><div class="r" style="left:202.25px;top:234.52px;width:0.75px;height:8.30px;background:#2e2e2e;"></div><div class="r" style="left:215.50px;top:234.52px;width:0.75px;height:8.30px;background:#2e2e2e;"></div><div class="r" style="left:228.74px;top:234.52px;width:0.75px;height:8.30px;background:#2e2e2e;"></div><div class="r" style="left:189.00px;top:242.78px;width:0.75px;height:8.30px;background:#585858;"></div><div class="r" style="left:202.25px;top:242.78px;width:0.75px;height:8.30px;background:#2e2e2e;"></div><div class="r" style="left:215.50px;top:242.78px;width:0.75px;height:8.30px;background:#2e2e2e;"></div><div class="r" style="left:228.74px;top:242.78px;width:0.75px;height:8.30px;background:#2e2e2e;"></div><div class="r" style="left:241.99px;top:242.78px;width:0.75px;height:8.30px;background:#2e2e2e;"></div><div class="r" style="left:189.00px;top:251.06px;width:0.75px;height:8.30px;background:#585858;"></div><div class="r" style="left:202.25px;top:251.06px;width:0.75px;height:8.30px;background:#2e2e2e;"></div><div class="r" style="left:215.50px;top:251.06px;width:0.75px;height:8.30px;background:#2e2e2e;"></div><div class="r" style="left:228.74px;top:251.06px;width:0.75px;height:8.30px;background:#2e2e2e;"></div><div class="r" style="left:241.99px;top:251.06px;width:0.75px;height:8.30px;background:#2e2e2e;"></div><div class="r" style="left:189.00px;top:259.33px;width:0.75px;height:8.30px;background:#585858;"></div><div class="r" style="left:202.25px;top:259.33px;width:0.75px;height:8.30px;background:#2e2e2e;"></div><div class="r" style="left:215.50px;top:259.33px;width:0.75px;height:8.30px;background:#2e2e2e;"></div><div class="r" style="left:228.74px;top:259.33px;width:0.75px;height:8.30px;background:#2e2e2e;"></div><div class="r" style="left:241.99px;top:259.33px;width:0.75px;height:8.30px;background:#2e2e2e;"></div><div class="r" style="left:255.24px;top:259.33px;width:0.75px;height:8.30px;background:#2e2e2e;"></div><div class="r" style="left:189.00px;top:267.60px;width:0.75px;height:8.30px;background:#585858;"></div><div class="r" style="left:202.25px;top:267.60px;width:0.75px;height:8.30px;background:#2e2e2e;"></div><div class="r" style="left:215.50px;top:267.60px;width:0.75px;height:8.30px;background:#2e2e2e;"></div><div class="r" style="left:228.74px;top:267.60px;width:0.75px;height:8.30px;background:#2e2e2e;"></div><div class="r" style="left:241.99px;top:267.60px;width:0.75px;height:8.30px;background:#2e2e2e;"></div><div class="r" style="left:189.00px;top:275.87px;width:0.75px;height:8.30px;background:#585858;"></div><div class="r" style="left:202.25px;top:275.87px;width:0.75px;height:8.30px;background:#2e2e2e;"></div><div class="r" style="left:215.50px;top:275.87px;width:0.75px;height:8.30px;background:#2e2e2e;"></div><div class="r" style="left:228.74px;top:275.87px;width:0.75px;height:8.30px;background:#2e2e2e;"></div><div class="r" style="left:189.00px;top:284.14px;width:0.75px;height:8.30px;background:#585858;"></div><div class="r" style="left:202.25px;top:284.14px;width:0.75px;height:8.30px;background:#2e2e2e;"></div><div class="r" style="left:215.50px;top:284.14px;width:0.75px;height:8.30px;background:#2e2e2e;"></div><div class="r" style="left:228.74px;top:284.14px;width:0.75px;height:8.30px;background:#2e2e2e;"></div><div class="r" style="left:241.99px;top:284.14px;width:0.75px;height:8.30px;background:#2e2e2e;"></div><div class="r" style="left:189.00px;top:292.41px;width:0.75px;height:8.30px;background:#585858;"></div><div class="r" style="left:202.25px;top:292.41px;width:0.75px;height:8.30px;background:#2e2e2e;"></div><div class="r" style="left:215.50px;top:292.41px;width:0.75px;height:8.30px;background:#2e2e2e;"></div><div class="r" style="left:228.74px;top:292.41px;width:0.75px;height:8.30px;background:#2e2e2e;"></div><div class="r" style="left:241.99px;top:292.41px;width:0.75px;height:8.30px;background:#2e2e2e;"></div><div class="r" style="left:189.00px;top:300.68px;width:0.75px;height:8.30px;background:#585858;"></div><div class="r" style="left:202.25px;top:300.68px;width:0.75px;height:8.30px;background:#2e2e2e;"></div><div class="r" style="left:215.50px;top:300.68px;width:0.75px;height:8.30px;background:#2e2e2e;"></div><div class="r" style="left:228.74px;top:300.68px;width:0.75px;height:8.30px;background:#2e2e2e;"></div><div class="r" style="left:241.99px;top:300.68px;width:0.75px;height:8.30px;background:#2e2e2e;"></div><div class="r" style="left:255.24px;top:300.68px;width:0.75px;height:8.30px;background:#2e2e2e;"></div><div class="r" style="left:189.00px;top:308.95px;width:0.75px;height:8.30px;background:#585858;"></div><div class="r" style="left:202.25px;top:308.95px;width:0.75px;height:8.30px;background:#2e2e2e;"></div><div class="r" style="left:215.50px;top:308.95px;width:0.75px;height:8.30px;background:#2e2e2e;"></div><div class="r" style="left:228.74px;top:308.95px;width:0.75px;height:8.30px;background:#2e2e2e;"></div><div class="r" style="left:241.99px;top:308.95px;width:0.75px;height:8.30px;background:#2e2e2e;"></div><div class="r" style="left:189.00px;top:317.22px;width:0.75px;height:8.30px;background:#585858;"></div><div class="r" style="left:202.25px;top:317.22px;width:0.75px;height:8.30px;background:#2e2e2e;"></div><div class="r" style="left:215.50px;top:317.22px;width:0.75px;height:8.30px;background:#2e2e2e;"></div><div class="r" style="left:189.00px;top:325.49px;width:0.75px;height:8.30px;background:#585858;"></div><div class="r" style="left:202.25px;top:325.49px;width:0.75px;height:8.30px;background:#2e2e2e;"></div><div class="r" style="left:189.00px;top:333.76px;width:0.75px;height:8.30px;background:#585858;"></div><div class="r" style="left:202.25px;top:333.76px;width:0.75px;height:8.30px;background:#2e2e2e;"></div><div class="r" style="left:189.00px;top:342.03px;width:0.75px;height:8.30px;background:#585858;"></div><div class="r" style="left:202.25px;top:342.03px;width:0.75px;height:8.30px;background:#2e2e2e;"></div><div class="r" style="left:189.00px;top:350.30px;width:0.75px;height:8.30px;background:#585858;"></div><div class="r" style="left:202.25px;top:350.30px;width:0.75px;height:8.30px;background:#2e2e2e;"></div><div class="r" style="left:215.50px;top:350.30px;width:0.75px;height:8.30px;background:#2e2e2e;"></div><div class="r" style="left:189.00px;top:358.56px;width:0.75px;height:8.30px;background:#585858;"></div><div class="r" style="left:202.25px;top:358.56px;width:0.75px;height:8.30px;background:#2e2e2e;"></div><div class="r" style="left:215.50px;top:358.56px;width:0.75px;height:8.30px;background:#2e2e2e;"></div><div class="r" style="left:228.74px;top:358.56px;width:0.75px;height:8.30px;background:#2e2e2e;"></div><div class="r" style="left:189.00px;top:366.84px;width:0.75px;height:8.30px;background:#585858;"></div><div class="r" style="left:202.25px;top:366.84px;width:0.75px;height:8.30px;background:#2e2e2e;"></div><div class="r" style="left:215.50px;top:366.84px;width:0.75px;height:8.30px;background:#2e2e2e;"></div><div class="r" style="left:228.74px;top:366.84px;width:0.75px;height:8.30px;background:#2e2e2e;"></div><div class="r" style="left:189.00px;top:375.11px;width:0.75px;height:8.30px;background:#585858;"></div><div class="r" style="left:202.25px;top:375.11px;width:0.75px;height:8.30px;background:#2e2e2e;"></div><div class="r" style="left:215.50px;top:375.11px;width:0.75px;height:8.30px;background:#2e2e2e;"></div><div class="r" style="left:189.00px;top:383.38px;width:0.75px;height:8.30px;background:#585858;"></div><div class="r" style="left:202.25px;top:383.38px;width:0.75px;height:8.30px;background:#2e2e2e;"></div><div class="r" style="left:215.50px;top:383.38px;width:0.75px;height:8.30px;background:#2e2e2e;"></div><div class="r" style="left:189.00px;top:391.65px;width:0.75px;height:8.30px;background:#585858;"></div><div class="r" style="left:202.25px;top:391.65px;width:0.75px;height:8.30px;background:#2e2e2e;"></div><div class="r" style="left:215.50px;top:391.65px;width:0.75px;height:8.30px;background:#2e2e2e;"></div><div class="r" style="left:228.74px;top:391.65px;width:0.75px;height:8.30px;background:#2e2e2e;"></div><div class="r" style="left:189.00px;top:399.92px;width:0.75px;height:8.30px;background:#585858;"></div><div class="r" style="left:202.25px;top:399.92px;width:0.75px;height:8.30px;background:#2e2e2e;"></div><div class="r" style="left:215.50px;top:399.92px;width:0.75px;height:8.30px;background:#2e2e2e;"></div><div class="r" style="left:228.74px;top:399.92px;width:0.75px;height:8.30px;background:#2e2e2e;"></div><div class="r" style="left:189.00px;top:408.19px;width:0.75px;height:8.30px;background:#585858;"></div><div class="r" style="left:202.25px;top:408.19px;width:0.75px;height:8.30px;background:#2e2e2e;"></div><div class="r" style="left:215.50px;top:408.19px;width:0.75px;height:8.30px;background:#2e2e2e;"></div><div class="r" style="left:189.00px;top:416.46px;width:0.75px;height:8.30px;background:#585858;"></div><div class="r" style="left:202.25px;top:416.46px;width:0.75px;height:8.30px;background:#2e2e2e;"></div><div class="r" style="left:215.50px;top:416.46px;width:0.75px;height:8.30px;background:#2e2e2e;"></div><div class="r" style="left:189.00px;top:424.73px;width:0.75px;height:8.30px;background:#585858;"></div><div class="r" style="left:202.25px;top:424.73px;width:0.75px;height:8.30px;background:#2e2e2e;"></div><div class="r" style="left:215.50px;top:424.73px;width:0.75px;height:8.30px;background:#2e2e2e;"></div><div class="r" style="left:189.00px;top:433.00px;width:0.75px;height:8.30px;background:#585858;"></div><div class="r" style="left:202.25px;top:433.00px;width:0.75px;height:8.30px;background:#2e2e2e;"></div><div class="r" style="left:215.50px;top:433.00px;width:0.75px;height:8.30px;background:#2e2e2e;"></div><div class="r" style="left:189.00px;top:441.27px;width:0.75px;height:8.30px;background:#585858;"></div><div class="r" style="left:202.25px;top:441.27px;width:0.75px;height:8.30px;background:#2e2e2e;"></div><div class="r" style="left:215.50px;top:441.27px;width:0.75px;height:8.30px;background:#2e2e2e;"></div><div class="t m" style="left:157.00px;top:27.90px;color:#858585;font-size:5.5px;font-weight:400;width:20px;text-align:right">3</div><div class="t m" style="left:189.00px;top:27.90px;color:#d4d4d4;font-size:5.52px;font-weight:400;">    <span style="color:#569cd6">CLASS</span> ParkingCounter</div><div class="t m" style="left:157.00px;top:36.17px;color:#858585;font-size:5.5px;font-weight:400;width:20px;text-align:right">4</div><div class="t m" style="left:189.00px;top:36.17px;color:#d4d4d4;font-size:5.52px;font-weight:400;">        <span style="color:#569cd6">VAR</span> <span style="color:#569cd6">PUBLIC</span></div><div class="t m" style="left:157.00px;top:44.44px;color:#858585;font-size:5.5px;font-weight:400;width:20px;text-align:right">5</div><div class="t m" style="left:189.00px;top:44.44px;color:#d4d4d4;font-size:5.52px;font-weight:400;">            BSensorOutside : <span style="color:#569cd6">REF_TO</span> <span style="color:#569cd6">BOOL</span>;</div><div class="t m" style="left:157.00px;top:52.71px;color:#858585;font-size:5.5px;font-weight:400;width:20px;text-align:right">6</div><div class="t m" style="left:189.00px;top:52.71px;color:#d4d4d4;font-size:5.52px;font-weight:400;">            BSensorInside : <span style="color:#569cd6">REF_TO</span> <span style="color:#569cd6">BOOL</span>;</div><div class="t m" style="left:157.00px;top:60.98px;color:#858585;font-size:5.5px;font-weight:400;width:20px;text-align:right">7</div><div class="t m" style="left:189.00px;top:60.98px;color:#d4d4d4;font-size:5.52px;font-weight:400;">            Limit : <span style="color:#569cd6">INT</span>;</div><div class="t m" style="left:157.00px;top:69.25px;color:#858585;font-size:5.5px;font-weight:400;width:20px;text-align:right">8</div><div class="t m" style="left:189.00px;top:69.25px;color:#d4d4d4;font-size:5.52px;font-weight:400;">        <span style="color:#569cd6">END_VAR</span></div><div class="t m" style="left:157.00px;top:77.52px;color:#858585;font-size:5.5px;font-weight:400;width:20px;text-align:right">9</div><div class="t m" style="left:189.00px;top:77.52px;color:#d4d4d4;font-size:5.52px;font-weight:400;">        <span style="color:#569cd6">VAR</span></div><div class="t m" style="left:157.00px;top:85.79px;color:#858585;font-size:5.5px;font-weight:400;width:20px;text-align:right">10</div><div class="t m" style="left:189.00px;top:85.79px;color:#d4d4d4;font-size:5.52px;font-weight:400;">            c : Counter;</div><div class="t m" style="left:157.00px;top:94.06px;color:#858585;font-size:5.5px;font-weight:400;width:20px;text-align:right">11</div><div class="t m" style="left:189.00px;top:94.06px;color:#d4d4d4;font-size:5.52px;font-weight:400;">            _bSensorOutsideOld : <span style="color:#569cd6">BOOL</span>;</div><div class="t m" style="left:157.00px;top:102.33px;color:#858585;font-size:5.5px;font-weight:400;width:20px;text-align:right">12</div><div class="t m" style="left:189.00px;top:102.33px;color:#d4d4d4;font-size:5.52px;font-weight:400;">            _bSSensorInsideOld : <span style="color:#569cd6">BOOL</span>;</div><div class="t m" style="left:157.00px;top:110.60px;color:#858585;font-size:5.5px;font-weight:400;width:20px;text-align:right">13</div><div class="t m" style="left:189.00px;top:110.60px;color:#d4d4d4;font-size:5.52px;font-weight:400;">        <span style="color:#569cd6">END_VAR</span></div><div class="t m" style="left:157.00px;top:118.87px;color:#858585;font-size:5.5px;font-weight:400;width:20px;text-align:right">14</div><div class="t m" style="left:189.00px;top:118.87px;color:#d4d4d4;font-size:5.52px;font-weight:400;">        <span style="color:#6a9955">/// Evaluate the signals of the entry border</span></div><div class="t m" style="left:157.00px;top:127.14px;color:#858585;font-size:5.5px;font-weight:400;width:20px;text-align:right">15</div><div class="t m" style="left:189.00px;top:127.14px;color:#d4d4d4;font-size:5.52px;font-weight:400;">        <span style="color:#569cd6">METHOD</span> <span style="color:#569cd6">PUBLIC</span> Execute</div><div class="t m" style="left:157.00px;top:135.41px;color:#858585;font-size:5.5px;font-weight:400;width:20px;text-align:right">16</div><div class="t m" style="left:189.00px;top:135.41px;color:#d4d4d4;font-size:5.52px;font-weight:400;">            <span style="color:#569cd6">THIS</span>.Count<span style="color:#ffd700">(</span><span style="color:#569cd6">THIS</span>.CheckDirection<span style="color:#da70d6">(</span>sIn := BSensorInside^, sOut := BSensorOutside^<span style="color:#da70d6">)</span><span style="color:#ffd700">)</span>;</div><div class="t m" style="left:157.00px;top:143.68px;color:#858585;font-size:5.5px;font-weight:400;width:20px;text-align:right">17</div><div class="t m" style="left:189.00px;top:143.68px;color:#d4d4d4;font-size:5.52px;font-weight:400;">        <span style="color:#569cd6">END_METHOD</span></div><div class="t m" style="left:157.00px;top:151.95px;color:#858585;font-size:5.5px;font-weight:400;width:20px;text-align:right">18</div><div class="t m" style="left:189.00px;top:151.95px;color:#d4d4d4;font-size:5.52px;font-weight:400;">        <span style="color:#6a9955">/// Returns the actual value of the ParkingCounter</span></div><div class="t m" style="left:157.00px;top:160.22px;color:#858585;font-size:5.5px;font-weight:400;width:20px;text-align:right">19</div><div class="t m" style="left:189.00px;top:160.22px;color:#d4d4d4;font-size:5.52px;font-weight:400;">        <span style="color:#569cd6">METHOD</span> <span style="color:#569cd6">PUBLIC</span> GetAmountOfParkedItems : <span style="color:#569cd6">DINT</span></div><div class="t m" style="left:157.00px;top:168.49px;color:#858585;font-size:5.5px;font-weight:400;width:20px;text-align:right">20</div><div class="t m" style="left:189.00px;top:168.49px;color:#d4d4d4;font-size:5.52px;font-weight:400;">            GetAmountOfParkedItems := c.GetValue<span style="color:#ffd700">(</span><span style="color:#ffd700">)</span>;</div><div class="t m" style="left:157.00px;top:176.76px;color:#858585;font-size:5.5px;font-weight:400;width:20px;text-align:right">21</div><div class="t m" style="left:189.00px;top:176.76px;color:#d4d4d4;font-size:5.52px;font-weight:400;">        <span style="color:#569cd6">END_METHOD</span></div><div class="t m" style="left:157.00px;top:185.03px;color:#858585;font-size:5.5px;font-weight:400;width:20px;text-align:right">22</div><div class="t m" style="left:189.00px;top:185.03px;color:#d4d4d4;font-size:5.52px;font-weight:400;">        <span style="color:#6a9955">/// Count the counter upwards or downwards depending on the direction</span></div><div class="t m" style="left:157.00px;top:193.30px;color:#858585;font-size:5.5px;font-weight:400;width:20px;text-align:right">23</div><div class="t m" style="left:189.00px;top:193.30px;color:#d4d4d4;font-size:5.52px;font-weight:400;">        <span style="color:#569cd6">METHOD</span> <span style="color:#569cd6">PROTECTED</span> Count</div><div class="t m" style="left:157.00px;top:201.57px;color:#858585;font-size:5.5px;font-weight:400;width:20px;text-align:right">24</div><div class="t m" style="left:189.00px;top:201.57px;color:#d4d4d4;font-size:5.52px;font-weight:400;">            <span style="color:#569cd6">VAR_INPUT</span></div><div class="t m" style="left:157.00px;top:209.84px;color:#858585;font-size:5.5px;font-weight:400;width:20px;text-align:right">25</div><div class="t m" style="left:189.00px;top:209.84px;color:#d4d4d4;font-size:5.52px;font-weight:400;">                dir : Direction;</div><div class="t m" style="left:157.00px;top:218.11px;color:#858585;font-size:5.5px;font-weight:400;width:20px;text-align:right">26</div><div class="t m" style="left:189.00px;top:218.11px;color:#d4d4d4;font-size:5.52px;font-weight:400;">            <span style="color:#569cd6">END_VAR</span></div><div class="t m" style="left:157.00px;top:226.38px;color:#858585;font-size:5.5px;font-weight:400;width:20px;text-align:right">27</div><div class="t m" style="left:189.00px;top:226.38px;color:#d4d4d4;font-size:5.52px;font-weight:400;">            <span style="color:#c586c0">CASE</span> dir <span style="color:#c586c0">OF</span></div><div class="t m" style="left:157.00px;top:234.65px;color:#858585;font-size:5.5px;font-weight:400;width:20px;text-align:right">28</div><div class="t m" style="left:189.00px;top:234.65px;color:#d4d4d4;font-size:5.52px;font-weight:400;">                Direction#Enter:</div><div class="t m" style="left:157.00px;top:242.92px;color:#858585;font-size:5.5px;font-weight:400;width:20px;text-align:right">29</div><div class="t m" style="left:189.00px;top:242.92px;color:#d4d4d4;font-size:5.52px;font-weight:400;">                    c.CountUp<span style="color:#ffd700">(</span><span style="color:#ffd700">)</span>;</div><div class="t m" style="left:157.00px;top:251.19px;color:#858585;font-size:5.5px;font-weight:400;width:20px;text-align:right">30</div><div class="t m" style="left:189.00px;top:251.19px;color:#d4d4d4;font-size:5.52px;font-weight:400;">                    <span style="color:#c586c0">IF</span> <span style="color:#ffd700">(</span>c.GetValue<span style="color:#da70d6">(</span><span style="color:#da70d6">)</span> &gt; Limit<span style="color:#ffd700">)</span> <span style="color:#c586c0">THEN</span></div><div class="t m" style="left:157.00px;top:259.46px;color:#858585;font-size:5.5px;font-weight:400;width:20px;text-align:right">31</div><div class="t m" style="left:189.00px;top:259.46px;color:#d4d4d4;font-size:5.52px;font-weight:400;">                        c.SetValue<span style="color:#ffd700">(</span>Limit<span style="color:#ffd700">)</span>;</div><div class="t m" style="left:157.00px;top:267.73px;color:#858585;font-size:5.5px;font-weight:400;width:20px;text-align:right">32</div><div class="t m" style="left:189.00px;top:267.73px;color:#d4d4d4;font-size:5.52px;font-weight:400;">                    <span style="color:#c586c0">END_IF</span>;</div><div class="t m" style="left:157.00px;top:276.00px;color:#858585;font-size:5.5px;font-weight:400;width:20px;text-align:right">33</div><div class="t m" style="left:189.00px;top:276.00px;color:#d4d4d4;font-size:5.52px;font-weight:400;">                Direction#Leave:</div><div class="t m" style="left:157.00px;top:284.27px;color:#858585;font-size:5.5px;font-weight:400;width:20px;text-align:right">34</div><div class="t m" style="left:189.00px;top:284.27px;color:#d4d4d4;font-size:5.52px;font-weight:400;">                    c.CountDown<span style="color:#ffd700">(</span><span style="color:#ffd700">)</span>;</div><div class="t m" style="left:157.00px;top:292.54px;color:#858585;font-size:5.5px;font-weight:400;width:20px;text-align:right">35</div><div class="t m" style="left:189.00px;top:292.54px;color:#d4d4d4;font-size:5.52px;font-weight:400;">                    <span style="color:#c586c0">IF</span> <span style="color:#ffd700">(</span>c.GetValue<span style="color:#da70d6">(</span><span style="color:#da70d6">)</span> &lt; <span style="color:#b5cea8">0</span><span style="color:#ffd700">)</span> <span style="color:#c586c0">THEN</span></div><div class="t m" style="left:157.00px;top:300.81px;color:#858585;font-size:5.5px;font-weight:400;width:20px;text-align:right">36</div><div class="t m" style="left:189.00px;top:300.81px;color:#d4d4d4;font-size:5.52px;font-weight:400;">                        c.SetValue<span style="color:#ffd700">(</span><span style="color:#ffd700">)</span>;</div><div class="t m" style="left:157.00px;top:309.08px;color:#858585;font-size:5.5px;font-weight:400;width:20px;text-align:right">37</div><div class="t m" style="left:189.00px;top:309.08px;color:#d4d4d4;font-size:5.52px;font-weight:400;">                    <span style="color:#c586c0">END_IF</span>;</div><div class="t m" style="left:157.00px;top:317.35px;color:#858585;font-size:5.5px;font-weight:400;width:20px;text-align:right">38</div><div class="t m" style="left:189.00px;top:317.35px;color:#d4d4d4;font-size:5.52px;font-weight:400;">            <span style="color:#c586c0">END_CASE</span>;</div><div class="t m" style="left:157.00px;top:325.62px;color:#858585;font-size:5.5px;font-weight:400;width:20px;text-align:right">39</div><div class="t m" style="left:189.00px;top:325.62px;color:#d4d4d4;font-size:5.52px;font-weight:400;">        <span style="color:#569cd6">END_METHOD</span></div><div class="t m" style="left:157.00px;top:333.89px;color:#858585;font-size:5.5px;font-weight:400;width:20px;text-align:right">40</div><div class="t m" style="left:189.00px;top:333.89px;color:#d4d4d4;font-size:5.52px;font-weight:400;">        <span style="color:#6a9955">/// Checks Direction depending on the input signals</span></div><div class="t m" style="left:157.00px;top:342.16px;color:#858585;font-size:5.5px;font-weight:400;width:20px;text-align:right">41</div><div class="t m" style="left:189.00px;top:342.16px;color:#d4d4d4;font-size:5.52px;font-weight:400;">        <span style="color:#569cd6">METHOD</span> <span style="color:#569cd6">PROTECTED</span> CheckDirection : Direction</div><div class="t m" style="left:157.00px;top:350.43px;color:#858585;font-size:5.5px;font-weight:400;width:20px;text-align:right">42</div><div class="t m" style="left:189.00px;top:350.43px;color:#d4d4d4;font-size:5.52px;font-weight:400;">            <span style="color:#569cd6">VAR_INPUT</span></div><div class="t m" style="left:157.00px;top:358.70px;color:#858585;font-size:5.5px;font-weight:400;width:20px;text-align:right">43</div><div class="t m" style="left:189.00px;top:358.70px;color:#d4d4d4;font-size:5.52px;font-weight:400;">                sIn : <span style="color:#569cd6">BOOL</span>;</div><div class="t m" style="left:157.00px;top:366.97px;color:#858585;font-size:5.5px;font-weight:400;width:20px;text-align:right">44</div><div class="t m" style="left:189.00px;top:366.97px;color:#d4d4d4;font-size:5.52px;font-weight:400;">                sOut : <span style="color:#569cd6">BOOL</span>;</div><div class="t m" style="left:157.00px;top:375.24px;color:#858585;font-size:5.5px;font-weight:400;width:20px;text-align:right">45</div><div class="t m" style="left:189.00px;top:375.24px;color:#d4d4d4;font-size:5.52px;font-weight:400;">            <span style="color:#569cd6">END_VAR</span></div><div class="t m" style="left:157.00px;top:383.51px;color:#858585;font-size:5.5px;font-weight:400;width:20px;text-align:right">46</div><div class="t m" style="left:189.00px;top:383.51px;color:#d4d4d4;font-size:5.52px;font-weight:400;">            <span style="color:#569cd6">VAR_TEMP</span></div><div class="t m" style="left:157.00px;top:391.78px;color:#858585;font-size:5.5px;font-weight:400;width:20px;text-align:right">47</div><div class="t m" style="left:189.00px;top:391.78px;color:#d4d4d4;font-size:5.52px;font-weight:400;">                _bSensorOutsideRis : <span style="color:#569cd6">BOOL</span>;</div><div class="t m" style="left:157.00px;top:400.05px;color:#858585;font-size:5.5px;font-weight:400;width:20px;text-align:right">48</div><div class="t m" style="left:189.00px;top:400.05px;color:#d4d4d4;font-size:5.52px;font-weight:400;">                _bSSensorInsideRis : <span style="color:#569cd6">BOOL</span>;</div><div class="t m" style="left:157.00px;top:408.32px;color:#858585;font-size:5.5px;font-weight:400;width:20px;text-align:right">49</div><div class="t m" style="left:189.00px;top:408.32px;color:#d4d4d4;font-size:5.52px;font-weight:400;">            <span style="color:#569cd6">END_VAR</span></div><div class="t m" style="left:157.00px;top:416.59px;color:#858585;font-size:5.5px;font-weight:400;width:20px;text-align:right">50</div><div class="t m" style="left:189.00px;top:416.59px;color:#d4d4d4;font-size:5.52px;font-weight:400;">            _bSensorOutsideRis := BSensorOutside^ AND NOT <span style="color:#ffd700">(</span>_bSensorOutsideOld<span style="color:#ffd700">)</span>;</div><div class="t m" style="left:157.00px;top:424.86px;color:#858585;font-size:5.5px;font-weight:400;width:20px;text-align:right">51</div><div class="t m" style="left:189.00px;top:424.86px;color:#d4d4d4;font-size:5.52px;font-weight:400;">            _bSensorOutsideOld := BSensorOutside^;</div><div class="t m" style="left:157.00px;top:433.13px;color:#858585;font-size:5.5px;font-weight:400;width:20px;text-align:right">52</div><div class="t m" style="left:189.00px;top:433.13px;color:#d4d4d4;font-size:5.52px;font-weight:400;">            _bSSensorInsideRis := BSensorInside^ AND NOT <span style="color:#ffd700">(</span>_bSSensorInsideOld<span style="color:#ffd700">)</span>;</div><div class="t m" style="left:157.00px;top:441.40px;color:#858585;font-size:5.5px;font-weight:400;width:20px;text-align:right">53</div><div class="t m" style="left:189.00px;top:441.40px;color:#d4d4d4;font-size:5.52px;font-weight:400;">            _bSSensorInsideOld := BSensorInside^;</div><div class="r" style="left:733.00px;top:24.50px;width:13.44px;height:0.65px;background:#4d7fb0;opacity:.55"></div><div class="r" style="left:733.00px;top:25.45px;width:8.40px;height:0.65px;background:#4d7fb0;opacity:.55"></div><div class="r" style="left:735.00px;top:26.40px;width:8.40px;height:0.65px;background:#4d7fb0;opacity:.55"></div><div class="r" style="left:737.00px;top:27.35px;width:4.20px;height:0.65px;background:#4d7fb0;opacity:.55"></div><div class="r" style="left:739.00px;top:28.30px;width:12.18px;height:0.65px;background:#8a8a8a;opacity:.55"></div><div class="r" style="left:739.00px;top:29.25px;width:11.76px;height:0.65px;background:#8a8a8a;opacity:.55"></div><div class="r" style="left:739.00px;top:30.20px;width:5.04px;height:0.65px;background:#8a8a8a;opacity:.55"></div><div class="r" style="left:737.00px;top:31.15px;width:2.94px;height:0.65px;background:#4d7fb0;opacity:.55"></div><div class="r" style="left:737.00px;top:32.10px;width:1.26px;height:0.65px;background:#4d7fb0;opacity:.55"></div><div class="r" style="left:739.00px;top:33.05px;width:5.04px;height:0.65px;background:#8a8a8a;opacity:.55"></div><div class="r" style="left:739.00px;top:34.00px;width:10.92px;height:0.65px;background:#8a8a8a;opacity:.55"></div><div class="r" style="left:739.00px;top:34.95px;width:10.92px;height:0.65px;background:#8a8a8a;opacity:.55"></div><div class="r" style="left:737.00px;top:35.90px;width:2.94px;height:0.65px;background:#4d7fb0;opacity:.55"></div><div class="r" style="left:737.00px;top:36.85px;width:18.48px;height:0.65px;background:#4f7a45;opacity:.55"></div><div class="r" style="left:737.00px;top:37.80px;width:8.82px;height:0.65px;background:#4d7fb0;opacity:.55"></div><div class="r" style="left:739.00px;top:38.75px;width:33.60px;height:0.65px;background:#8a8a8a;opacity:.55"></div><div class="r" style="left:737.00px;top:39.70px;width:4.20px;height:0.65px;background:#4d7fb0;opacity:.55"></div><div class="r" style="left:737.00px;top:40.65px;width:21.00px;height:0.65px;background:#4f7a45;opacity:.55"></div><div class="r" style="left:737.00px;top:41.60px;width:18.06px;height:0.65px;background:#4d7fb0;opacity:.55"></div><div class="r" style="left:739.00px;top:42.55px;width:16.38px;height:0.65px;background:#8a8a8a;opacity:.55"></div><div class="r" style="left:737.00px;top:43.50px;width:4.20px;height:0.65px;background:#4d7fb0;opacity:.55"></div><div class="r" style="left:737.00px;top:44.45px;width:28.98px;height:0.65px;background:#4f7a45;opacity:.55"></div><div class="r" style="left:737.00px;top:45.40px;width:9.24px;height:0.65px;background:#4d7fb0;opacity:.55"></div><div class="r" style="left:739.00px;top:46.35px;width:3.78px;height:0.65px;background:#4d7fb0;opacity:.55"></div><div class="r" style="left:741.00px;top:47.30px;width:6.72px;height:0.65px;background:#8a8a8a;opacity:.55"></div><div class="r" style="left:739.00px;top:48.25px;width:2.94px;height:0.65px;background:#4d7fb0;opacity:.55"></div><div class="r" style="left:739.00px;top:49.20px;width:4.62px;height:0.65px;background:#8a8a8a;opacity:.55"></div><div class="r" style="left:741.00px;top:50.15px;width:6.72px;height:0.65px;background:#8a8a8a;opacity:.55"></div><div class="r" style="left:743.00px;top:51.10px;width:5.04px;height:0.65px;background:#8a8a8a;opacity:.55"></div><div class="r" style="left:743.00px;top:52.05px;width:12.60px;height:0.65px;background:#8a8a8a;opacity:.55"></div><div class="r" style="left:745.00px;top:53.00px;width:7.56px;height:0.65px;background:#8a8a8a;opacity:.55"></div><div class="r" style="left:743.00px;top:53.95px;width:2.94px;height:0.65px;background:#8a8a8a;opacity:.55"></div><div class="r" style="left:741.00px;top:54.90px;width:6.72px;height:0.65px;background:#8a8a8a;opacity:.55"></div><div class="r" style="left:743.00px;top:55.85px;width:5.88px;height:0.65px;background:#8a8a8a;opacity:.55"></div><div class="r" style="left:743.00px;top:56.80px;width:10.92px;height:0.65px;background:#8a8a8a;opacity:.55"></div><div class="r" style="left:745.00px;top:57.75px;width:5.46px;height:0.65px;background:#8a8a8a;opacity:.55"></div><div class="r" style="left:743.00px;top:58.70px;width:2.94px;height:0.65px;background:#8a8a8a;opacity:.55"></div><div class="r" style="left:739.00px;top:59.65px;width:3.78px;height:0.65px;background:#8a8a8a;opacity:.55"></div><div class="r" style="left:737.00px;top:60.60px;width:4.20px;height:0.65px;background:#4d7fb0;opacity:.55"></div><div class="r" style="left:737.00px;top:61.55px;width:21.42px;height:0.65px;background:#4f7a45;opacity:.55"></div><div class="r" style="left:737.00px;top:62.50px;width:18.06px;height:0.65px;background:#4d7fb0;opacity:.55"></div><div class="r" style="left:739.00px;top:63.45px;width:3.78px;height:0.65px;background:#4d7fb0;opacity:.55"></div><div class="r" style="left:741.00px;top:64.40px;width:4.62px;height:0.65px;background:#8a8a8a;opacity:.55"></div><div class="r" style="left:741.00px;top:65.35px;width:5.04px;height:0.65px;background:#8a8a8a;opacity:.55"></div><div class="r" style="left:739.00px;top:66.30px;width:2.94px;height:0.65px;background:#4d7fb0;opacity:.55"></div><div class="r" style="left:739.00px;top:67.25px;width:3.36px;height:0.65px;background:#4d7fb0;opacity:.55"></div><div class="r" style="left:741.00px;top:68.20px;width:10.92px;height:0.65px;background:#8a8a8a;opacity:.55"></div><div class="r" style="left:741.00px;top:69.15px;width:10.92px;height:0.65px;background:#8a8a8a;opacity:.55"></div><div class="r" style="left:739.00px;top:70.10px;width:2.94px;height:0.65px;background:#4d7fb0;opacity:.55"></div><div class="r" style="left:739.00px;top:71.05px;width:28.14px;height:0.65px;background:#8a8a8a;opacity:.55"></div><div class="r" style="left:739.00px;top:72.00px;width:15.96px;height:0.65px;background:#8a8a8a;opacity:.55"></div><div class="r" style="left:739.00px;top:72.95px;width:27.72px;height:0.65px;background:#8a8a8a;opacity:.55"></div><div class="r" style="left:739.00px;top:73.90px;width:15.54px;height:0.65px;background:#8a8a8a;opacity:.55"></div><div class="r" style="left:739.00px;top:74.85px;width:21.42px;height:0.65px;background:#8a8a8a;opacity:.55"></div><div class="r" style="left:741.00px;top:75.80px;width:14.28px;height:0.65px;background:#8a8a8a;opacity:.55"></div><div class="r" style="left:739.00px;top:76.75px;width:22.68px;height:0.65px;background:#8a8a8a;opacity:.55"></div><div class="r" style="left:741.00px;top:77.70px;width:14.28px;height:0.65px;background:#8a8a8a;opacity:.55"></div><div class="r" style="left:739.00px;top:78.65px;width:1.68px;height:0.65px;background:#8a8a8a;opacity:.55"></div><div class="r" style="left:741.00px;top:79.60px;width:13.86px;height:0.65px;background:#8a8a8a;opacity:.55"></div><div class="r" style="left:739.00px;top:80.55px;width:2.94px;height:0.65px;background:#8a8a8a;opacity:.55"></div><div class="r" style="left:737.00px;top:81.50px;width:4.20px;height:0.65px;background:#4d7fb0;opacity:.55"></div><div class="r" style="left:735.00px;top:82.45px;width:3.78px;height:0.65px;background:#4d7fb0;opacity:.55"></div><div class="r" style="left:733.00px;top:83.40px;width:5.46px;height:0.65px;background:#4d7fb0;opacity:.55"></div><div class="r" style="left:786.50px;top:38.50px;width:6.50px;height:178.00px;background:#424242;"></div><div class="r" style="left:786.50px;top:261.00px;width:6.50px;height:0.90px;background:#b0b0b0;"></div><div class="r" style="left:0.00px;top:445.70px;width:793.00px;height:11.30px;background:#007acc;"></div><div class="r" style="left:0.00px;top:445.70px;width:15.00px;height:11.30px;background:#16825d;"></div><svg color="#ffffff" class="ic" style="left:4.00px;top:447.85px;width:7px;height:7px" viewBox="0 0 16 16" fill="none" stroke="#ffffff" stroke-width="1.3" stroke-linecap="round" stroke-linejoin="round"><path d="M4 12l3-3M9 7l3-3M5.5 5.5l5 5"/></svg><svg color="#ffffff" class="ic" style="left:16.50px;top:447.85px;width:7px;height:7px" viewBox="0 0 16 16" fill="none" stroke="#ffffff" stroke-width="1.2" stroke-linecap="round" stroke-linejoin="round"><circle cx="5" cy="3.5" r="1.5"/><circle cx="5" cy="12.5" r="1.5"/><circle cx="11" cy="5.5" r="1.5"/><path d="M5 5v6M11 7c0 3-6 2-6 4"/></svg><div class="t s" style="left:25.00px;top:447.35px;color:#ffffff;font-size:5.6px;font-weight:400;">SIMATIC_AX*+</div><svg color="#ffffff" class="ic" style="left:66.50px;top:447.85px;width:7px;height:7px" viewBox="0 0 16 16" fill="none" stroke="#ffffff" stroke-width="1.2" stroke-linecap="round" stroke-linejoin="round"><path d="M3 8a5 5 0 0 1 9-3M13 8a5 5 0 0 1-9 3"/><path d="M12 2v3H9M4 14v-3h3"/></svg><svg color="#ffffff" class="ic" style="left:79.00px;top:447.85px;width:7px;height:7px" viewBox="0 0 16 16" fill="none" stroke="#ffffff" stroke-width="1.2" stroke-linecap="round" stroke-linejoin="round"><path d="M3 4h10M3 8h7M3 12h10"/><path d="M11 6l2 2-2 2"/></svg><svg color="#ffffff" class="ic" style="left:91.50px;top:447.85px;width:7px;height:7px" viewBox="0 0 16 16" fill="none" stroke="#ffffff" stroke-width="1.2" stroke-linecap="round" stroke-linejoin="round"><circle cx="8" cy="8" r="5.5"/><path d="M5.8 5.8l4.4 4.4M10.2 5.8l-4.4 4.4"/></svg><div class="t s" style="left:99.50px;top:447.35px;color:#ffffff;font-size:5.8px;font-weight:400;">0</div><svg color="#ffffff" class="ic" style="left:104.00px;top:447.85px;width:7px;height:7px" viewBox="0 0 16 16" fill="none" stroke="#ffffff" stroke-width="1.2" stroke-linecap="round" stroke-linejoin="round"><path d="M8 2l6 11H2z"/><path d="M8 6.5v3M8 11.2v.3"/></svg><div class="t s" style="left:112.00px;top:447.35px;color:#ffffff;font-size:5.8px;font-weight:400;">0</div><svg color="#ffffff" class="ic" style="left:124.00px;top:447.85px;width:7px;height:7px" viewBox="0 0 16 16" fill="none" stroke="#ffffff" stroke-width="1.2" stroke-linecap="round" stroke-linejoin="round"><circle cx="8" cy="8" r="5"/></svg><div class="t s" style="left:132.50px;top:447.35px;color:#ffffff;font-size:5.8px;font-weight:400;">Watch</div><svg color="#ffffff" class="ic" style="left:154.00px;top:447.85px;width:7px;height:7px" viewBox="0 0 16 16" fill="none" stroke="#ffffff" stroke-width="1.2" stroke-linecap="round" stroke-linejoin="round"><path d="M3 3h10v10H3z"/><path d="M3 6h10"/></svg><div class="t s" style="left:163.50px;top:447.35px;color:#ffffff;font-size:5.8px;font-weight:400;">Build Project</div><svg color="#ffffff" class="ic" style="left:202.00px;top:447.85px;width:7px;height:7px" viewBox="0 0 16 16" fill="none" stroke="#ffffff" stroke-width="1.2" stroke-linecap="round" stroke-linejoin="round"><path d="M3 3h7l3 3v7H3z"/><path d="M6 7l3 2-3 2z"/></svg><div class="t s" style="left:211.50px;top:447.35px;color:#ffffff;font-size:5.8px;font-weight:400;">Run Script</div><svg color="#ffffff" class="ic" style="left:534.75px;top:448.10px;width:6.5px;height:6.5px" viewBox="0 0 16 16" fill="none" stroke="#ffffff" stroke-width="1.2" stroke-linecap="round" stroke-linejoin="round"><circle cx="8" cy="4.5" r="2.2"/><path d="M3.5 14c0-4 9-4 9 0"/></svg><div class="t s" style="left:543.50px;top:447.35px;color:#ffffff;font-size:5.8px;font-weight:400;">You, 2 months ago</div><div class="t s" style="left:599.00px;top:447.35px;color:#ffffff;font-size:5.8px;font-weight:400;">Ln 67, Col 1</div><div class="t s" style="left:638.00px;top:447.35px;color:#ffffff;font-size:5.8px;font-weight:400;">Spaces: 4</div><div class="t s" style="left:670.50px;top:447.35px;color:#ffffff;font-size:5.8px;font-weight:400;">UTF-8</div><div class="t s" style="left:697.50px;top:447.35px;color:#ffffff;font-size:5.8px;font-weight:400;">LF</div><div class="t s" style="left:708.50px;top:447.35px;color:#ffffff;font-size:5.8px;font-weight:400;">ST</div><svg color="#ffffff" class="ic" style="left:721.00px;top:447.85px;width:7px;height:7px" viewBox="0 0 16 16" fill="none" stroke="#ffffff" stroke-width="1.2" stroke-linecap="round" stroke-linejoin="round"><path d="M2 3h12v8H6l-3 3v-3H2z"/></svg><div class="t s" style="left:731.50px;top:447.35px;color:#ffffff;font-size:5.8px;font-weight:400;">Send Feedback</div><svg color="#ffffff" class="ic" style="left:779.00px;top:447.85px;width:7px;height:7px" viewBox="0 0 16 16" fill="none" stroke="#ffffff" stroke-width="1.2" stroke-linecap="round" stroke-linejoin="round"><path d="M4 11V7a4 4 0 0 1 8 0v4l1 1.5H3z"/><path d="M6.5 14h3"/></svg><div class="bd"></div></div></body></html>
